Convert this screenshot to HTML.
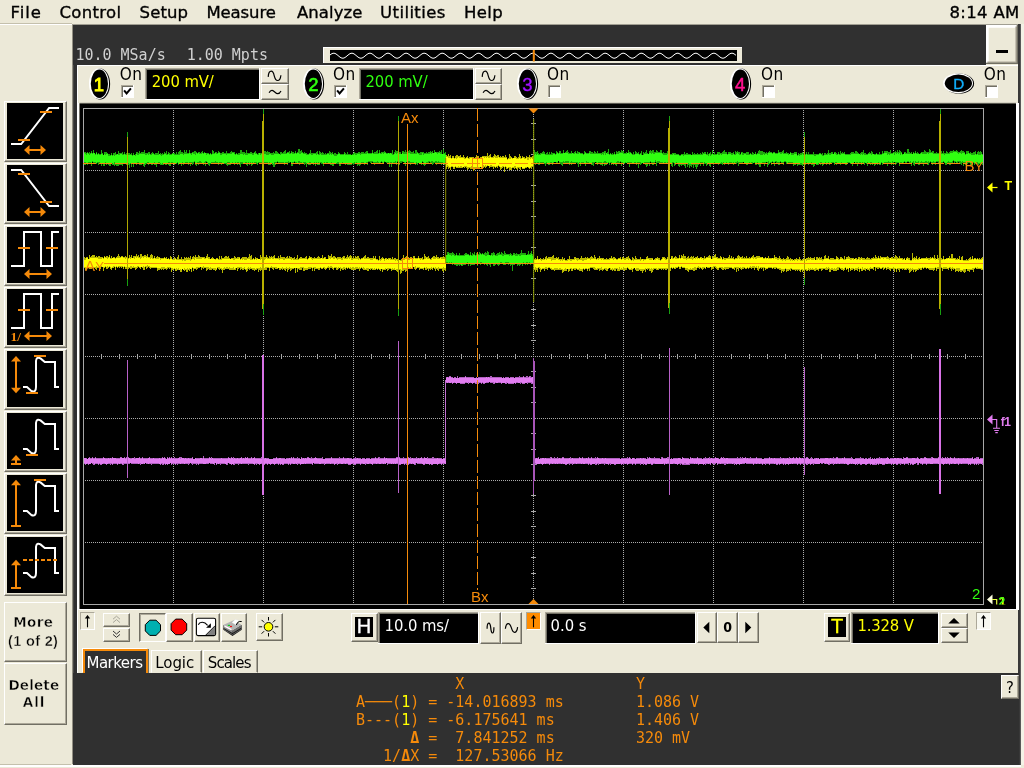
<!DOCTYPE html>
<html><head><meta charset="utf-8"><title>Oscilloscope</title><style>
html,body{margin:0;padding:0;}
body{width:1024px;height:768px;overflow:hidden;background:#ECE9D8;position:relative;font-family:"DejaVu Sans Condensed","Liberation Sans",sans-serif;font-size:16px;color:#000;}
#root{position:absolute;left:0;top:0;width:1024px;height:768px;overflow:hidden;will-change:transform;}
.a{position:absolute;}
.t{position:absolute;white-space:pre;line-height:1;}
.menu{font-family:"DejaVu Sans","Liberation Sans",sans-serif;font-size:16px;}
.mono{font-family:"DejaVu Sans Mono","Liberation Mono",monospace;font-size:15px;}
.btn{position:absolute;box-sizing:border-box;background:#ECE9D8;border:1px solid;border-color:#FFFFFF #716F64 #716F64 #FFFFFF;box-shadow:inset -1px -1px 0 #ACA899;}
.btnp{position:absolute;box-sizing:border-box;background:#ECE9D8;border:1px solid;border-color:#716F64 #FFFFFF #FFFFFF #716F64;box-shadow:inset 1px 1px 0 #ACA899;}
.sunk{position:absolute;box-sizing:border-box;background:#000;border:1px solid;border-color:#ACA899 #FFFFFF #FFFFFF #ACA899;box-shadow:inset 1px 1px 0 #716F64;}
.cb{position:absolute;box-sizing:border-box;width:12px;height:12px;background:#fff;border:1px solid;border-color:#ACA899 #FFFFFF #FFFFFF #ACA899;box-shadow:inset 1px 1px 0 #716F64;}
.on{position:absolute;font-size:16px;line-height:1;white-space:pre;}
svg{position:absolute;overflow:visible;}
</style></head><body>
<div id="root">
<div class="t" style="left:10.60px;top:5.00px;font-family:'DejaVu Sans','Liberation Sans',sans-serif;font-size:16.5px;font-weight:normal;letter-spacing:0.9px;color:#000;-webkit-text-stroke:0.35px #000;">File</div>
<div class="t" style="left:59.40px;top:5.00px;font-family:'DejaVu Sans','Liberation Sans',sans-serif;font-size:16.5px;font-weight:normal;letter-spacing:0.333px;color:#000;-webkit-text-stroke:0.35px #000;">Control</div>
<div class="t" style="left:139.60px;top:5.00px;font-family:'DejaVu Sans','Liberation Sans',sans-serif;font-size:16.5px;font-weight:normal;letter-spacing:0.1px;color:#000;-webkit-text-stroke:0.35px #000;">Setup</div>
<div class="t" style="left:206.40px;top:5.00px;font-family:'DejaVu Sans','Liberation Sans',sans-serif;font-size:16.5px;font-weight:normal;letter-spacing:-0.1px;color:#000;-webkit-text-stroke:0.35px #000;">Measure</div>
<div class="t" style="left:297.00px;top:5.00px;font-family:'DejaVu Sans','Liberation Sans',sans-serif;font-size:16.5px;font-weight:normal;letter-spacing:0.05px;color:#000;-webkit-text-stroke:0.35px #000;">Analyze</div>
<div class="t" style="left:380.10px;top:5.00px;font-family:'DejaVu Sans','Liberation Sans',sans-serif;font-size:16.5px;font-weight:normal;letter-spacing:0.394px;color:#000;-webkit-text-stroke:0.35px #000;">Utilities</div>
<div class="t" style="left:464.10px;top:5.00px;font-family:'DejaVu Sans','Liberation Sans',sans-serif;font-size:16.5px;font-weight:normal;letter-spacing:0.333px;color:#000;-webkit-text-stroke:0.35px #000;">Help</div>
<div class="t" style="left:949.50px;top:5.00px;font-family:'DejaVu Sans','Liberation Sans',sans-serif;font-size:16.5px;font-weight:normal;letter-spacing:0.333px;color:#000;-webkit-text-stroke:0.35px #000;">8:14 AM</div>
<div class="a" style="left:0;top:23px;width:71.5px;height:1px;background:#C4C0AC;"></div>
<div class="a" style="left:0;top:24px;width:71.5px;height:1px;background:#fff;"></div>
<div class="a" style="left:72px;top:23.6px;width:949px;height:1.6px;background:linear-gradient(180deg,#D8D5C4 0,#6a6860 100%);"></div>
<div class="a" style="left:71.5px;top:24.8px;width:948.5px;height:739.7px;background:linear-gradient(90deg,#b8b4a2 0,#303030 1.8px);"></div>
<div class="a" style="left:73px;top:25px;width:912.7px;height:40px;background:#303030;"></div>
<div class="a" style="left:985.7px;top:24.8px;width:32.8px;height:41px;background:#ECE9D8;"></div>
<div class="a" style="left:77px;top:65px;width:941.5px;height:609px;background:#ECE9D8;border-left:1px solid #fff;border-top:1px solid #fff;box-sizing:border-box;"></div>
<div class="a" style="left:1018.4px;top:24px;width:2.5px;height:741px;background:linear-gradient(90deg,#383838 0,#383838 60%,#707070 100%);"></div>
<div class="a" style="left:1020.9px;top:24px;width:3.1px;height:741px;background:#F4F2E6;"></div>
<div class="a" style="left:73px;top:673px;width:945.5px;height:91.5px;background:#303030;"></div>
<div class="a" style="left:0;top:764.5px;width:1024px;height:3.5px;background:#ECE9D8;"></div>
<div class="a" style="left:0;top:764.4px;width:71px;height:0.8px;background:#C4C0AC;"></div>
<div class="a" style="left:0;top:765px;width:1021px;height:2px;background:#fff;"></div>
<div class="a" style="left:986.2px;top:25px;width:32px;height:39px;box-sizing:border-box;background:#ECE9D8;box-shadow:inset -1.3px -1.3px 0 #716F64,inset 1.4px 1.4px 0 #fff,inset -2.6px -2.6px 0 #ACA899,inset 2.7px 2.7px 0 #fff;"></div>
<div class="a" style="left:995.7px;top:49.9px;width:12.6px;height:3.3px;background:#000;"></div>
<div class="t mono" style="left:75.4px;top:47.6px;color:#D0D0D0;">10.0 MSa/s</div>
<div class="t mono" style="left:186.7px;top:47.6px;color:#D0D0D0;">1.00 Mpts</div>
<div class="a" style="left:323px;top:46.5px;width:419px;height:16.5px;background:#ECE9D8;box-shadow:inset 1px 1px 0 #fff;"></div>
<div class="a" style="left:329.5px;top:50px;width:407px;height:11.3px;background:#000;"></div>
<svg style="left:0;top:0;" width="1024" height="70" viewBox="0 0 1024 70"><polyline points="330.0,54.99 331.0,54.22 332.0,53.62 333.0,53.27 334.0,53.21 335.0,53.45 336.0,53.96 337.0,54.67 338.0,55.50 339.0,56.36 340.0,57.14 341.0,57.75 342.0,58.12 343.0,58.19 344.0,57.97 345.0,57.48 346.0,56.77 347.0,55.94 348.0,55.08 349.0,54.29 350.0,53.67 351.0,53.30 352.0,53.21 353.0,53.41 354.0,53.89 355.0,54.59 356.0,55.42 357.0,56.28 358.0,57.07 359.0,57.70 360.0,58.09 361.0,58.20 362.0,58.00 363.0,57.54 364.0,56.85 365.0,56.02 366.0,55.16 367.0,54.36 368.0,53.72 369.0,53.32 370.0,53.20 371.0,53.38 372.0,53.84 373.0,54.51 374.0,55.33 375.0,56.20 376.0,57.00 377.0,57.65 378.0,58.07 379.0,58.20 380.0,58.04 381.0,57.59 382.0,56.92 383.0,56.11 384.0,55.25 385.0,54.44 386.0,53.78 387.0,53.35 388.0,53.20 389.0,53.35 390.0,53.78 391.0,54.44 392.0,55.25 393.0,56.11 394.0,56.92 395.0,57.59 396.0,58.04 397.0,58.20 398.0,58.07 399.0,57.65 400.0,57.00 401.0,56.20 402.0,55.33 403.0,54.51 404.0,53.84 405.0,53.38 406.0,53.20 407.0,53.32 408.0,53.72 409.0,54.36 410.0,55.16 411.0,56.02 412.0,56.85 413.0,57.54 414.0,58.00 415.0,58.20 416.0,58.09 417.0,57.70 418.0,57.07 419.0,56.28 420.0,55.42 421.0,54.59 422.0,53.89 423.0,53.41 424.0,53.21 425.0,53.30 426.0,53.67 427.0,54.29 428.0,55.08 429.0,55.94 430.0,56.77 431.0,57.48 432.0,57.97 433.0,58.19 434.0,58.12 435.0,57.75 436.0,57.14 437.0,56.36 438.0,55.50 439.0,54.67 440.0,53.96 441.0,53.45 442.0,53.21 443.0,53.27 444.0,53.62 445.0,54.22 446.0,54.99 447.0,55.85 448.0,56.69 449.0,57.41 450.0,57.93 451.0,58.18 452.0,58.14 453.0,57.80 454.0,57.21 455.0,56.45 456.0,55.59 457.0,54.75 458.0,54.02 459.0,53.49 460.0,53.22 461.0,53.25 462.0,53.58 463.0,54.15 464.0,54.91 465.0,55.77 466.0,56.61 467.0,57.35 468.0,57.89 469.0,58.17 470.0,58.15 471.0,57.85 472.0,57.28 473.0,56.53 474.0,55.68 475.0,54.83 476.0,54.08 477.0,53.53 478.0,53.24 479.0,53.24 480.0,53.53 481.0,54.08 482.0,54.83 483.0,55.68 484.0,56.53 485.0,57.28 486.0,57.85 487.0,58.15 488.0,58.17 489.0,57.89 490.0,57.35 491.0,56.61 492.0,55.77 493.0,54.91 494.0,54.15 495.0,53.58 496.0,53.25 497.0,53.22 498.0,53.49 499.0,54.02 500.0,54.75 501.0,55.59 502.0,56.45 503.0,57.21 504.0,57.80 505.0,58.14 506.0,58.18 507.0,57.93 508.0,57.41 509.0,56.69 510.0,55.85 511.0,54.99 512.0,54.22 513.0,53.62 514.0,53.27 515.0,53.21 516.0,53.45 517.0,53.96 518.0,54.67 519.0,55.50 520.0,56.36 521.0,57.14 522.0,57.75 523.0,58.12 524.0,58.19 525.0,57.97 526.0,57.48 527.0,56.77 528.0,55.94 529.0,55.08 530.0,54.29 531.0,53.67 532.0,53.30 533.0,53.21 534.0,53.41 535.0,53.89 536.0,54.59 537.0,55.42 538.0,56.28 539.0,57.07 540.0,57.70 541.0,58.09 542.0,58.20 543.0,58.00 544.0,57.54 545.0,56.85 546.0,56.02 547.0,55.16 548.0,54.36 549.0,53.72 550.0,53.32 551.0,53.20 552.0,53.38 553.0,53.84 554.0,54.51 555.0,55.33 556.0,56.20 557.0,57.00 558.0,57.65 559.0,58.07 560.0,58.20 561.0,58.04 562.0,57.59 563.0,56.92 564.0,56.11 565.0,55.25 566.0,54.44 567.0,53.78 568.0,53.35 569.0,53.20 570.0,53.35 571.0,53.78 572.0,54.44 573.0,55.25 574.0,56.11 575.0,56.92 576.0,57.59 577.0,58.04 578.0,58.20 579.0,58.07 580.0,57.65 581.0,57.00 582.0,56.20 583.0,55.33 584.0,54.51 585.0,53.84 586.0,53.38 587.0,53.20 588.0,53.32 589.0,53.72 590.0,54.36 591.0,55.16 592.0,56.02 593.0,56.85 594.0,57.54 595.0,58.00 596.0,58.20 597.0,58.09 598.0,57.70 599.0,57.07 600.0,56.28 601.0,55.42 602.0,54.59 603.0,53.89 604.0,53.41 605.0,53.21 606.0,53.30 607.0,53.67 608.0,54.29 609.0,55.08 610.0,55.94 611.0,56.77 612.0,57.48 613.0,57.97 614.0,58.19 615.0,58.12 616.0,57.75 617.0,57.14 618.0,56.36 619.0,55.50 620.0,54.67 621.0,53.96 622.0,53.45 623.0,53.21 624.0,53.27 625.0,53.62 626.0,54.22 627.0,54.99 628.0,55.85 629.0,56.69 630.0,57.41 631.0,57.93 632.0,58.18 633.0,58.14 634.0,57.80 635.0,57.21 636.0,56.45 637.0,55.59 638.0,54.75 639.0,54.02 640.0,53.49 641.0,53.22 642.0,53.25 643.0,53.58 644.0,54.15 645.0,54.91 646.0,55.77 647.0,56.61 648.0,57.35 649.0,57.89 650.0,58.17 651.0,58.15 652.0,57.85 653.0,57.28 654.0,56.53 655.0,55.68 656.0,54.83 657.0,54.08 658.0,53.53 659.0,53.24 660.0,53.24 661.0,53.53 662.0,54.08 663.0,54.83 664.0,55.68 665.0,56.53 666.0,57.28 667.0,57.85 668.0,58.15 669.0,58.17 670.0,57.89 671.0,57.35 672.0,56.61 673.0,55.77 674.0,54.91 675.0,54.15 676.0,53.58 677.0,53.25 678.0,53.22 679.0,53.49 680.0,54.02 681.0,54.75 682.0,55.59 683.0,56.45 684.0,57.21 685.0,57.80 686.0,58.14 687.0,58.18 688.0,57.93 689.0,57.41 690.0,56.69 691.0,55.85 692.0,54.99 693.0,54.22 694.0,53.62 695.0,53.27 696.0,53.21 697.0,53.45 698.0,53.96 699.0,54.67 700.0,55.50 701.0,56.36 702.0,57.14 703.0,57.75 704.0,58.12 705.0,58.19 706.0,57.97 707.0,57.48 708.0,56.77 709.0,55.94 710.0,55.08 711.0,54.29 712.0,53.67 713.0,53.30 714.0,53.21 715.0,53.41 716.0,53.89 717.0,54.59 718.0,55.42 719.0,56.28 720.0,57.07 721.0,57.70 722.0,58.09 723.0,58.20 724.0,58.00 725.0,57.54 726.0,56.85 727.0,56.02 728.0,55.16 729.0,54.36 730.0,53.72 731.0,53.32 732.0,53.20 733.0,53.38 734.0,53.84 735.0,54.51 736.0,55.33" fill="none" stroke="#fff" stroke-width="1"/><rect x="532.8" y="50" width="2" height="11.5" fill="#F58A0A"/></svg>
<svg style="left:87.0px;top:66.25px;" width="25.0" height="35.5" viewBox="-12.5 -17.75 25.0 35.5"><ellipse cx="0.55" cy="0.25" rx="10.05" ry="15.5" fill="#000"/><ellipse cx="-0.5" cy="-0.1" rx="10.0" ry="15.45" fill="#fff"/><ellipse cx="-0.1" cy="0" rx="8.6" ry="14.15" fill="#000"/><text x="-0.6" y="6.9" text-anchor="middle" font-family="Liberation Sans, sans-serif" font-size="18.5" fill="#FFFF00" stroke="#FFFF00" stroke-width="0.9">1</text></svg>
<svg style="left:301.2px;top:66.25px;" width="25.0" height="35.5" viewBox="-12.5 -17.75 25.0 35.5"><ellipse cx="0.55" cy="0.25" rx="10.05" ry="15.5" fill="#000"/><ellipse cx="-0.5" cy="-0.1" rx="10.0" ry="15.45" fill="#fff"/><ellipse cx="-0.1" cy="0" rx="8.6" ry="14.15" fill="#000"/><text x="-0.2" y="6.9" text-anchor="middle" font-family="Liberation Sans, sans-serif" font-size="18.5" fill="#30FF10" stroke="#30FF10" stroke-width="0.6">2</text></svg>
<svg style="left:515.2px;top:66.25px;" width="25.0" height="35.5" viewBox="-12.5 -17.75 25.0 35.5"><ellipse cx="0.55" cy="0.25" rx="10.05" ry="15.5" fill="#000"/><ellipse cx="-0.5" cy="-0.1" rx="10.0" ry="15.45" fill="#fff"/><ellipse cx="-0.1" cy="0" rx="8.6" ry="14.15" fill="#000"/><text x="-0.2" y="6.9" text-anchor="middle" font-family="Liberation Sans, sans-serif" font-size="18.5" fill="#A010FF" stroke="#A010FF" stroke-width="0.4">3</text></svg>
<svg style="left:728.3px;top:66.25px;" width="25.0" height="35.5" viewBox="-12.5 -17.75 25.0 35.5"><ellipse cx="0.55" cy="0.25" rx="10.05" ry="15.5" fill="#000"/><ellipse cx="-0.5" cy="-0.1" rx="10.0" ry="15.45" fill="#fff"/><ellipse cx="-0.1" cy="0" rx="8.6" ry="14.15" fill="#000"/><text x="-0.4" y="6.9" text-anchor="middle" font-family="Liberation Sans, sans-serif" font-size="18.5" fill="#FF1090" stroke="#FF1090" stroke-width="0.5">4</text></svg>
<svg style="left:940.7px;top:71.3px;" width="35.0" height="24.6" viewBox="-17.5 -12.3 35.0 24.6"><ellipse cx="0.55" cy="0.25" rx="15.05" ry="10.05" fill="#000"/><ellipse cx="-0.5" cy="-0.1" rx="15.0" ry="10.0" fill="#fff"/><ellipse cx="-0.1" cy="0" rx="13.6" ry="8.700000000000001" fill="#000"/><text x="0.3" y="5.5" text-anchor="middle" font-family="Liberation Sans, sans-serif" font-size="15.3" fill="#10B0FF" stroke="#10B0FF" stroke-width="0.35">D</text></svg>
<div class="t" style="left:119.75px;top:65.90px;font-family:'DejaVu Sans Condensed','Liberation Sans',sans-serif;font-size:17px;font-weight:normal;letter-spacing:0.35px;color:#000;">On</div>
<div class="a" style="left:120.95px;top:85px;width:13.0px;height:13.0px;background:#fff;"></div>
<div class="a" style="left:120.95px;top:85px;width:11.8px;height:11.8px;background:#ACA899;"></div>
<div class="a" style="left:121.95px;top:86px;width:10.799999999999999px;height:10.799999999999999px;background:#716F64;"></div>
<div class="a" style="left:122.95px;top:87px;width:9.6px;height:9.6px;background:#fff;"></div>
<svg style="left:120.75px;top:85px;" width="13" height="13" viewBox="0 0 13 13"><path d="M3.1 5.3 L5.6 8.4 L9.9 3.3" fill="none" stroke="#000" stroke-width="2"/></svg>
<div class="t" style="left:333.00px;top:65.90px;font-family:'DejaVu Sans Condensed','Liberation Sans',sans-serif;font-size:17px;font-weight:normal;letter-spacing:0.35px;color:#000;">On</div>
<div class="a" style="left:334.2px;top:85px;width:13.0px;height:13.0px;background:#fff;"></div>
<div class="a" style="left:334.2px;top:85px;width:11.8px;height:11.8px;background:#ACA899;"></div>
<div class="a" style="left:335.2px;top:86px;width:10.799999999999999px;height:10.799999999999999px;background:#716F64;"></div>
<div class="a" style="left:336.2px;top:87px;width:9.6px;height:9.6px;background:#fff;"></div>
<svg style="left:334px;top:85px;" width="13" height="13" viewBox="0 0 13 13"><path d="M3.1 5.3 L5.6 8.4 L9.9 3.3" fill="none" stroke="#000" stroke-width="2"/></svg>
<div class="t" style="left:547.00px;top:65.90px;font-family:'DejaVu Sans Condensed','Liberation Sans',sans-serif;font-size:17px;font-weight:normal;letter-spacing:0.35px;color:#000;">On</div>
<div class="a" style="left:548.2px;top:85px;width:13.0px;height:13.0px;background:#fff;"></div>
<div class="a" style="left:548.2px;top:85px;width:11.8px;height:11.8px;background:#ACA899;"></div>
<div class="a" style="left:549.2px;top:86px;width:10.799999999999999px;height:10.799999999999999px;background:#716F64;"></div>
<div class="a" style="left:550.2px;top:87px;width:9.6px;height:9.6px;background:#fff;"></div>
<div class="t" style="left:761.00px;top:65.90px;font-family:'DejaVu Sans Condensed','Liberation Sans',sans-serif;font-size:17px;font-weight:normal;letter-spacing:0.35px;color:#000;">On</div>
<div class="a" style="left:762.2px;top:85px;width:13.0px;height:13.0px;background:#fff;"></div>
<div class="a" style="left:762.2px;top:85px;width:11.8px;height:11.8px;background:#ACA899;"></div>
<div class="a" style="left:763.2px;top:86px;width:10.799999999999999px;height:10.799999999999999px;background:#716F64;"></div>
<div class="a" style="left:764.2px;top:87px;width:9.6px;height:9.6px;background:#fff;"></div>
<div class="t" style="left:983.80px;top:65.90px;font-family:'DejaVu Sans Condensed','Liberation Sans',sans-serif;font-size:17px;font-weight:normal;letter-spacing:0.35px;color:#000;">On</div>
<div class="a" style="left:985.0px;top:85px;width:13.0px;height:13.0px;background:#fff;"></div>
<div class="a" style="left:985.0px;top:85px;width:11.8px;height:11.8px;background:#ACA899;"></div>
<div class="a" style="left:986.0px;top:86px;width:10.799999999999999px;height:10.799999999999999px;background:#716F64;"></div>
<div class="a" style="left:987.0px;top:87px;width:9.6px;height:9.6px;background:#fff;"></div>
<div class="a" style="left:145px;top:68px;width:115.4px;height:32.2px;background:#fff;"></div>
<div class="a" style="left:145px;top:68px;width:114.2px;height:31.0px;background:#ACA899;"></div>
<div class="a" style="left:146px;top:69px;width:113.2px;height:30.0px;background:#716F64;"></div>
<div class="a" style="left:147px;top:70px;width:112px;height:28.8px;background:#000;"></div>
<div class="t" style="left:151.70px;top:74.10px;font-family:'DejaVu Sans Condensed','Liberation Sans',sans-serif;font-size:16.5px;font-weight:normal;letter-spacing:-0.083px;color:#FFFF00;">200 mV/</div>
<div class="btn" style="left:261.3px;top:68.3px;width:27.3px;height:15.3px;"></div>
<div class="btn" style="left:261.3px;top:84px;width:27.3px;height:15.5px;"></div>
<svg style="left:261.3px;top:68px;" width="28" height="32" viewBox="0 0 28 32"><path d="M7.2 8.9 C7.5 3.5,9.5 3.2,10.3 3.2 C12.3 3.2,12.8 6,13.4 8.4 C14.2 11.5,15.2 12.5,16.6 12.5 C18.6 12.5,19.6 10,19.9 7.2" fill="none" stroke="#000" stroke-width="1.2"/><path d="M8.1 24.7 C9 23,9.8 22.4,10.9 22.4 C12.2 22.4,12.8 23.3,13.75 24 C14.8 24.9,15.5 25.6,16.6 25.6 C18.2 25.6,19.3 24.3,20 22.9" fill="none" stroke="#000" stroke-width="1.2"/></svg>
<div class="a" style="left:358.8px;top:68px;width:115.4px;height:32.2px;background:#fff;"></div>
<div class="a" style="left:358.8px;top:68px;width:114.2px;height:31.0px;background:#ACA899;"></div>
<div class="a" style="left:359.8px;top:69px;width:113.2px;height:30.0px;background:#716F64;"></div>
<div class="a" style="left:360.8px;top:70px;width:112px;height:28.8px;background:#000;"></div>
<div class="t" style="left:365.50px;top:74.10px;font-family:'DejaVu Sans Condensed','Liberation Sans',sans-serif;font-size:16.5px;font-weight:normal;letter-spacing:-0.083px;color:#30FF10;">200 mV/</div>
<div class="btn" style="left:475.1px;top:68.3px;width:27.3px;height:15.3px;"></div>
<div class="btn" style="left:475.1px;top:84px;width:27.3px;height:15.5px;"></div>
<svg style="left:475.1px;top:68px;" width="28" height="32" viewBox="0 0 28 32"><path d="M7.2 8.9 C7.5 3.5,9.5 3.2,10.3 3.2 C12.3 3.2,12.8 6,13.4 8.4 C14.2 11.5,15.2 12.5,16.6 12.5 C18.6 12.5,19.6 10,19.9 7.2" fill="none" stroke="#000" stroke-width="1.2"/><path d="M8.1 24.7 C9 23,9.8 22.4,10.9 22.4 C12.2 22.4,12.8 23.3,13.75 24 C14.8 24.9,15.5 25.6,16.6 25.6 C18.2 25.6,19.3 24.3,20 22.9" fill="none" stroke="#000" stroke-width="1.2"/></svg>
<div class="btn" style="left:4px;top:101px;width:63px;height:61px;"></div>
<svg style="left:7px;top:103px;" width="56" height="56" viewBox="0 0 56 56"><rect width="56" height="56" fill="#000"/><path d="M4 41 H14.2 L42.1 5 H52" fill="none" stroke="#fff" stroke-width="2" stroke-linejoin="miter"/><path d="M33 9 H45 M11 37 H23" stroke="#F58A0A" stroke-width="2" fill="none"/><path d="M21 47 H35" stroke="#F58A0A" stroke-width="2" fill="none"/><path d="M17 47 l5.5 -5 v10 z M39 47 l-5.5 -5 v10 z" fill="#F58A0A"/></svg>
<div class="btn" style="left:4px;top:163px;width:63px;height:61px;"></div>
<svg style="left:7px;top:165px;" width="56" height="56" viewBox="0 0 56 56"><rect width="56" height="56" fill="#000"/><path d="M4 5 H14.2 L42.1 41 H52" fill="none" stroke="#fff" stroke-width="2" stroke-linejoin="miter"/><path d="M11 9 H23 M33 37 H45" stroke="#F58A0A" stroke-width="2" fill="none"/><path d="M21 47 H35" stroke="#F58A0A" stroke-width="2" fill="none"/><path d="M17 47 l5.5 -5 v10 z M39 47 l-5.5 -5 v10 z" fill="#F58A0A"/></svg>
<div class="btn" style="left:4px;top:225px;width:63px;height:61px;"></div>
<svg style="left:7px;top:227px;" width="56" height="56" viewBox="0 0 56 56"><rect width="56" height="56" fill="#000"/><path d="M4 39 H17 V5 H34 V39 H45 V5 H52" fill="none" stroke="#fff" stroke-width="2" stroke-linejoin="miter"/><path d="M11 21 H23 M39 21 H51" stroke="#F58A0A" stroke-width="2" fill="none"/><path d="M21 47 H41" stroke="#F58A0A" stroke-width="2" fill="none"/><path d="M17 47 l5.5 -5 v10 z M45 47 l-5.5 -5 v10 z" fill="#F58A0A"/></svg>
<div class="btn" style="left:4px;top:287px;width:63px;height:61px;"></div>
<svg style="left:7px;top:289px;" width="56" height="56" viewBox="0 0 56 56"><rect width="56" height="56" fill="#000"/><path d="M4 39 H17 V5 H34 V39 H45 V5 H52" fill="none" stroke="#fff" stroke-width="2" stroke-linejoin="miter"/><path d="M11 21 H23 M39 21 H51" stroke="#F58A0A" stroke-width="2" fill="none"/><path d="M21 47 H41" stroke="#F58A0A" stroke-width="2" fill="none"/><path d="M17 47 l5.5 -5 v10 z M45 47 l-5.5 -5 v10 z" fill="#F58A0A"/><text x="3.5" y="52" font-family="Liberation Serif, serif" font-weight="bold" font-size="13.5" fill="#F58A0A">1/</text></svg>
<div class="btn" style="left:4px;top:349px;width:63px;height:61px;"></div>
<svg style="left:7px;top:351px;" width="56" height="56" viewBox="0 0 56 56"><rect width="56" height="56" fill="#000"/><path d="M16 36 H20 L24.3 40 Q29 42 29 36 V10 Q29.5 5.2 33.5 7.4 L37.8 11 H48 V36 H52" fill="none" stroke="#fff" stroke-width="2" stroke-linejoin="miter"/><path d="M27 5 H39 M19 42 H31" stroke="#F58A0A" stroke-width="2" fill="none"/><path d="M9 9 V38.3" stroke="#F58A0A" stroke-width="2" fill="none"/><path d="M9 5 l-5 5.5 h10 z" fill="#F58A0A"/><path d="M9 42.3 l-5 -5.5 h10 z" fill="#F58A0A"/></svg>
<div class="btn" style="left:4px;top:411px;width:63px;height:61px;"></div>
<svg style="left:7px;top:413px;" width="56" height="56" viewBox="0 0 56 56"><rect width="56" height="56" fill="#000"/><path d="M16 36 H20 L24.3 40 Q29 42 29 36 V10 Q29.5 5.2 33.5 7.4 L37.8 11 H48 V36 H52" fill="none" stroke="#fff" stroke-width="2" stroke-linejoin="miter"/><path d="M19 42 H31" stroke="#F58A0A" stroke-width="2" fill="none"/><path d="M9 47 V50 M4 51 H14" stroke="#F58A0A" stroke-width="2" fill="none"/><path d="M9 42 l-5 5.5 h10 z" fill="#F58A0A"/></svg>
<div class="btn" style="left:4px;top:473px;width:63px;height:61px;"></div>
<svg style="left:7px;top:475px;" width="56" height="56" viewBox="0 0 56 56"><rect width="56" height="56" fill="#000"/><path d="M16 36 H20 L24.3 40 Q29 42 29 36 V10 Q29.5 5.2 33.5 7.4 L37.8 11 H48 V36 H52" fill="none" stroke="#fff" stroke-width="2" stroke-linejoin="miter"/><path d="M27 5 H39" stroke="#F58A0A" stroke-width="2" fill="none"/><path d="M9 8.8 V51" stroke="#F58A0A" stroke-width="2" fill="none"/><path d="M9 4.8 l-5 5.5 h10 z" fill="#F58A0A"/><path d="M4 51 H14" stroke="#F58A0A" stroke-width="2" fill="none"/></svg>
<div class="btn" style="left:4px;top:535px;width:63px;height:61px;"></div>
<svg style="left:7px;top:537px;" width="56" height="56" viewBox="0 0 56 56"><rect width="56" height="56" fill="#000"/><path d="M16 36 H20 L24.3 40 Q29 42 29 36 V10 Q29.5 5.2 33.5 7.4 L37.8 11 H48 V36 H52" fill="none" stroke="#fff" stroke-width="2" stroke-linejoin="miter"/><path d="M16 23 H50" stroke="#F58A0A" stroke-width="2" fill="none" stroke-dasharray="4 2"/><path d="M9 26.7 V51" stroke="#F58A0A" stroke-width="2" fill="none"/><path d="M9 22.7 l-5 5.5 h10 z" fill="#F58A0A"/><path d="M4 51 H14" stroke="#F58A0A" stroke-width="2" fill="none"/></svg>
<div class="btn" style="left:4px;top:601.5px;width:62.7px;height:60.3px;"></div>
<div class="btn" style="left:4px;top:663.4px;width:62.7px;height:61.2px;"></div>
<div class="t" style="left:13.20px;top:616.30px;font-family:'DejaVu Sans','Liberation Sans',sans-serif;font-size:13.5px;font-weight:bold;letter-spacing:0.433px;color:#000;-webkit-text-stroke:0.45px #ECE9D8;">More</div>
<div class="t" style="left:8.10px;top:634.10px;font-family:'Liberation Sans',sans-serif;font-size:14.5px;font-weight:bold;letter-spacing:0.329px;color:#000;-webkit-text-stroke:0.4px #ECE9D8;">(1 of 2)</div>
<div class="t" style="left:8.50px;top:678.80px;font-family:'DejaVu Sans','Liberation Sans',sans-serif;font-size:13.5px;font-weight:bold;letter-spacing:0.16px;color:#000;-webkit-text-stroke:0.45px #ECE9D8;">Delete</div>
<div class="t" style="left:22.70px;top:696.10px;font-family:'DejaVu Sans','Liberation Sans',sans-serif;font-size:13.5px;font-weight:bold;letter-spacing:1.05px;color:#000;-webkit-text-stroke:0.45px #ECE9D8;">All</div>
<svg style="left:0;top:0;" width="1024" height="768" viewBox="0 0 1024 768"><defs><clipPath id="cb"><rect x="980" y="590" width="40" height="14.6"/></clipPath></defs><rect x="79.5" y="102.8" width="936.5" height="1" fill="#807e72"/><rect x="79.5" y="103.6" width="936.5" height="505.4" fill="#000"/><path d="M173.5 110 V604" stroke="#ACACAC" stroke-width="1" stroke-dasharray="1 1" shape-rendering="crispEdges"/><path d="M263.5 110 V604" stroke="#ACACAC" stroke-width="1" stroke-dasharray="1 1" shape-rendering="crispEdges"/><path d="M353.5 110 V604" stroke="#ACACAC" stroke-width="1" stroke-dasharray="1 1" shape-rendering="crispEdges"/><path d="M443.5 110 V604" stroke="#ACACAC" stroke-width="1" stroke-dasharray="1 1" shape-rendering="crispEdges"/><path d="M533.5 110 V604" stroke="#ACACAC" stroke-width="1" stroke-dasharray="1 1" shape-rendering="crispEdges"/><path d="M623.5 110 V604" stroke="#ACACAC" stroke-width="1" stroke-dasharray="1 1" shape-rendering="crispEdges"/><path d="M713.5 110 V604" stroke="#ACACAC" stroke-width="1" stroke-dasharray="1 1" shape-rendering="crispEdges"/><path d="M803.5 110 V604" stroke="#ACACAC" stroke-width="1" stroke-dasharray="1 1" shape-rendering="crispEdges"/><path d="M893.5 110 V604" stroke="#ACACAC" stroke-width="1" stroke-dasharray="1 1" shape-rendering="crispEdges"/><path d="M85 170.5 H983" stroke="#ACACAC" stroke-width="1" stroke-dasharray="1 1" shape-rendering="crispEdges"/><path d="M85 232.5 H983" stroke="#ACACAC" stroke-width="1" stroke-dasharray="1 1" shape-rendering="crispEdges"/><path d="M85 294.5 H983" stroke="#ACACAC" stroke-width="1" stroke-dasharray="1 1" shape-rendering="crispEdges"/><path d="M85 356.5 H983" stroke="#ACACAC" stroke-width="1" stroke-dasharray="1 1" shape-rendering="crispEdges"/><path d="M85 418.5 H983" stroke="#ACACAC" stroke-width="1" stroke-dasharray="1 1" shape-rendering="crispEdges"/><path d="M85 480.5 H983" stroke="#ACACAC" stroke-width="1" stroke-dasharray="1 1" shape-rendering="crispEdges"/><path d="M85 542.5 H983" stroke="#ACACAC" stroke-width="1" stroke-dasharray="1 1" shape-rendering="crispEdges"/><path d="M101.5 354 V359 M119.5 354 V359 M137.5 354 V359 M155.5 354 V359 M191.5 354 V359 M209.5 354 V359 M227.5 354 V359 M245.5 354 V359 M281.5 354 V359 M299.5 354 V359 M317.5 354 V359 M335.5 354 V359 M371.5 354 V359 M389.5 354 V359 M407.5 354 V359 M425.5 354 V359 M461.5 354 V359 M479.5 354 V359 M497.5 354 V359 M515.5 354 V359 M551.5 354 V359 M569.5 354 V359 M587.5 354 V359 M605.5 354 V359 M641.5 354 V359 M659.5 354 V359 M677.5 354 V359 M695.5 354 V359 M731.5 354 V359 M749.5 354 V359 M767.5 354 V359 M785.5 354 V359 M821.5 354 V359 M839.5 354 V359 M857.5 354 V359 M875.5 354 V359 M911.5 354 V359 M929.5 354 V359 M947.5 354 V359 M965.5 354 V359 M531 123.5 H536 M531 139.5 H536 M531 154.5 H536 M531 185.5 H536 M531 201.5 H536 M531 216.5 H536 M531 247.5 H536 M531 263.5 H536 M531 278.5 H536 M531 309.5 H536 M531 325.5 H536 M531 340.5 H536 M531 371.5 H536 M531 387.5 H536 M531 402.5 H536 M531 433.5 H536 M531 449.5 H536 M531 464.5 H536 M531 495.5 H536 M531 511.5 H536 M531 526.5 H536 M531 557.5 H536 M531 573.5 H536 M531 588.5 H536" stroke="#A8A8A8" stroke-width="1" shape-rendering="crispEdges"/><rect x="83.5" y="108.5" width="900" height="496" fill="none" stroke="#A8A8A8" stroke-width="1" shape-rendering="crispEdges"/><path d="M84 152.1H85V151.9H86V153.3H87V151.5H88V153.2H89V151.5H90V153.0H91V151.3H92V152.6H93V149.7H94V152.7H95V153.7H96V152.0H97V153.9H98V153.2H99V153.9H100V153.8H101V149.8H102V152.6H103V154.7H104V152.1H105V151.8H106V152.4H107V153.0H108V154.2H109V153.8H110V154.5H111V153.0H112V155.0H113V152.5H114V153.0H115V151.9H116V154.0H117V153.5H118V151.1H119V152.7H120V152.5H121V152.9H122V151.8H123V153.5H124V151.9H125V153.9H126V152.9H127V153.6H128V153.3H129V153.2H130V153.6H131V153.3H132V155.3H133V153.4H134V154.7H135V153.9H136V152.1H137V152.3H138V153.3H139V151.3H140V152.7H141V152.3H142V151.6H143V152.1H144V150.1H145V153.3H146V153.2H147V153.3H148V152.0H149V151.6H150V154.1H151V152.9H152V152.1H153V152.8H154V153.6H155V152.5H156V153.4H157V153.0H158V150.9H159V153.5H160V152.9H161V153.7H162V153.3H163V153.8H164V152.2H165V152.6H166V151.0H167V154.1H168V152.0H169V153.3H170V153.9H171V154.2H172V153.1H173V152.7H174V153.0H175V154.3H176V151.9H177V154.2H178V152.3H179V151.1H180V150.2H181V152.3H182V151.9H183V153.3H184V150.0H185V151.5H186V150.4H187V152.8H188V153.2H189V150.3H190V152.6H191V153.1H192V152.4H193V152.4H194V151.2H195V151.3H196V152.2H197V152.6H198V152.2H199V151.7H200V152.6H201V151.9H202V150.7H203V153.3H204V151.9H205V152.6H206V152.5H207V152.9H208V152.6H209V154.4H210V153.3H211V153.5H212V149.9H213V150.5H214V152.8H215V152.1H216V152.2H217V153.1H218V150.7H219V152.1H220V152.7H221V153.3H222V151.5H223V151.7H224V152.6H225V153.1H226V151.0H227V153.3H228V153.4H229V153.1H230V152.4H231V150.7H232V152.2H233V152.1H234V152.0H235V153.7H236V152.8H237V153.8H238V153.3H239V153.3H240V149.9H241V150.0H242V152.1H243V152.3H244V151.6H245V153.0H246V150.2H247V153.0H248V153.1H249V152.5H250V151.8H251V152.2H252V153.1H253V152.8H254V151.8H255V151.4H256V153.2H257V153.6H258V152.5H259V152.5H260V153.3H261V152.5H262V153.2H263V150.5H264V150.7H265V150.8H266V152.2H267V151.4H268V152.3H269V152.2H270V153.3H271V153.1H272V153.1H273V152.4H274V153.2H275V150.8H276V150.5H277V152.2H278V153.2H279V153.5H280V152.4H281V152.1H282V152.8H283V151.7H284V150.8H285V150.1H286V152.6H287V152.3H288V151.5H289V150.9H290V153.1H291V151.0H292V151.9H293V151.9H294V153.1H295V151.1H296V153.3H297V151.5H298V149.1H299V149.2H300V151.4H301V150.2H302V152.0H303V153.3H304V152.0H305V152.8H306V153.1H307V153.8H308V153.6H309V153.3H310V150.4H311V153.4H312V153.3H313V152.8H314V153.0H315V153.1H316V152.2H317V150.6H318V153.6H319V151.0H320V152.2H321V152.9H322V152.2H323V152.9H324V153.5H325V153.1H326V153.5H327V153.1H328V152.7H329V150.7H330V152.3H331V152.6H332V152.1H333V154.4H334V153.2H335V152.7H336V154.1H337V154.3H338V151.5H339V153.2H340V154.2H341V154.0H342V154.1H343V153.5H344V152.4H345V153.1H346V153.6H347V152.2H348V153.8H349V153.5H350V154.0H351V154.5H352V153.6H353V153.3H354V151.9H355V153.1H356V153.3H357V153.2H358V152.2H359V152.0H360V153.4H361V151.9H362V151.6H363V151.6H364V153.0H365V152.1H366V150.9H367V151.1H368V152.8H369V152.5H370V153.1H371V153.1H372V149.8H373V152.7H374V152.2H375V152.3H376V151.3H377V150.4H378V152.8H379V150.1H380V153.2H381V151.7H382V151.7H383V151.6H384V151.0H385V151.9H386V153.0H387V152.9H388V152.6H389V152.5H390V152.6H391V152.5H392V150.1H393V153.9H394V151.7H395V150.0H396V151.2H397V151.0H398V151.4H399V151.7H400V151.5H401V153.5H402V150.7H403V151.4H404V152.1H405V150.1H406V151.6H407V151.9H408V150.9H409V150.2H410V151.3H411V152.3H412V152.4H413V151.4H414V153.1H415V150.3H416V150.4H417V152.2H418V153.0H419V153.3H420V152.3H421V152.3H422V151.6H423V152.0H424V152.9H425V153.1H426V152.0H427V152.7H428V152.1H429V151.5H430V151.3H431V151.7H432V151.2H433V152.5H434V149.7H435V151.6H436V152.3H437V152.4H438V151.5H439V150.6H440V151.8H441V150.1H442V153.5H443V149.3H444V153.4H445V152.0H445.5V163.8V163.8H445V165.2H444V164.0H443V164.2H442V164.8H441V164.0H440V163.6H439V162.7H438V163.2H437V164.9H436V163.5H435V163.0H434V164.1H433V165.4H432V163.6H431V162.6H430V162.4H429V162.5H428V163.3H427V163.1H426V165.2H425V165.7H424V164.5H423V162.4H422V165.4H421V163.7H420V164.1H419V163.2H418V165.0H417V163.8H416V165.1H415V163.6H414V163.7H413V163.1H412V164.0H411V164.7H410V163.9H409V162.7H408V162.8H407V162.3H406V166.0H405V163.8H404V162.4H403V162.4H402V163.0H401V163.1H400V164.6H399V162.8H398V162.4H397V164.6H396V162.5H395V163.8H394V162.9H393V163.8H392V166.5H391V164.2H390V166.5H389V163.2H388V163.4H387V163.0H386V162.4H385V162.4H384V163.2H383V163.2H382V162.3H381V163.6H380V163.9H379V163.5H378V163.6H377V162.9H376V164.3H375V164.6H374V163.7H373V161.7H372V163.8H371V163.1H370V162.3H369V161.8H368V164.6H367V163.7H366V163.6H365V165.3H364V162.7H363V162.9H362V163.8H361V164.9H360V165.5H359V165.3H358V165.6H357V164.3H356V164.0H355V163.8H354V165.1H353V163.8H352V164.6H351V165.0H350V165.4H349V164.7H348V164.8H347V163.3H346V164.5H345V164.1H344V163.4H343V163.2H342V164.0H341V166.0H340V165.6H339V163.5H338V164.1H337V163.9H336V164.0H335V163.8H334V165.6H333V165.9H332V164.8H331V165.1H330V164.1H329V164.0H328V162.7H327V163.1H326V163.7H325V163.3H324V165.7H323V164.0H322V164.0H321V163.2H320V165.0H319V164.5H318V164.6H317V163.5H316V166.0H315V163.4H314V165.1H313V163.8H312V164.2H311V165.3H310V164.9H309V164.8H308V163.6H307V167.1H306V164.3H305V164.6H304V163.2H303V163.7H302V164.0H301V163.6H300V165.2H299V162.7H298V163.4H297V163.4H296V163.5H295V162.0H294V163.8H293V165.6H292V165.9H291V162.2H290V163.1H289V162.8H288V164.9H287V162.9H286V163.6H285V165.0H284V164.2H283V164.2H282V163.0H281V163.5H280V163.1H279V164.0H278V162.0H277V163.2H276V164.9H275V166.8H274V166.6H273V165.0H272V163.7H271V164.8H270V164.8H269V165.0H268V162.8H267V163.6H266V163.3H265V162.7H264V162.7H263V162.5H262V164.1H261V163.2H260V164.1H259V162.6H258V164.5H257V163.8H256V162.9H255V164.3H254V164.4H253V165.2H252V165.7H251V163.2H250V164.5H249V164.4H248V166.0H247V164.5H246V164.4H245V163.9H244V163.3H243V163.7H242V163.6H241V166.6H240V164.8H239V163.7H238V164.9H237V164.2H236V163.8H235V164.5H234V163.8H233V163.0H232V163.8H231V165.0H230V165.3H229V164.9H228V165.5H227V164.8H226V163.8H225V163.6H224V163.4H223V164.4H222V164.8H221V163.7H220V163.6H219V164.7H218V163.6H217V163.0H216V163.9H215V163.0H214V164.0H213V163.0H212V164.3H211V163.8H210V166.1H209V164.7H208V162.5H207V162.3H206V166.2H205V164.4H204V165.2H203V163.4H202V163.0H201V164.0H200V163.0H199V165.2H198V163.1H197V166.4H196V165.2H195V161.9H194V164.0H193V164.7H192V164.3H191V166.4H190V162.7H189V165.0H188V162.8H187V164.1H186V162.9H185V164.2H184V164.7H183V163.4H182V166.2H181V164.4H180V163.7H179V165.3H178V162.9H177V163.7H176V163.9H175V164.9H174V164.2H173V162.9H172V163.0H171V166.1H170V166.0H169V164.5H168V164.1H167V164.5H166V164.6H165V164.4H164V165.4H163V164.7H162V165.4H161V164.6H160V163.3H159V163.8H158V164.3H157V166.6H156V164.5H155V164.6H154V164.2H153V164.8H152V165.2H151V163.8H150V164.0H149V165.1H148V163.7H147V164.2H146V165.0H145V166.8H144V165.7H143V164.0H142V165.2H141V164.6H140V165.1H139V163.6H138V163.0H137V164.6H136V164.3H135V163.9H134V166.7H133V163.7H132V166.7H131V163.8H130V168.1H129V164.7H128V166.8H127V165.1H126V164.3H125V163.8H124V163.5H123V165.8H122V165.2H121V165.1H120V165.1H119V166.3H118V166.4H117V165.8H116V164.7H115V166.4H114V164.7H113V164.6H112V163.9H111V165.9H110V166.3H109V164.5H108V164.0H107V165.0H106V164.1H105V166.1H104V165.7H103V163.4H102V166.4H101V164.2H100V164.0H99V164.5H98V163.1H97V164.0H96V164.0H95V164.1H94V163.0H93V162.1H92V165.5H91V164.0H90V163.9H89V162.5H88V165.2H87V163.4H86V164.6H85V164.6H84Z" fill="#1FA80C" shape-rendering="crispEdges"/><path d="M84 153.2H85V154.4H86V154.7H87V153.3H88V154.0H89V154.9H90V153.9H91V153.2H92V154.2H93V153.2H94V153.3H95V154.5H96V153.4H97V154.8H98V154.4H99V154.8H100V154.9H101V154.2H102V154.4H103V155.4H104V153.9H105V154.8H106V154.0H107V154.3H108V155.7H109V155.5H110V155.6H111V154.9H112V155.8H113V155.4H114V155.5H115V154.7H116V154.9H117V154.3H118V155.0H119V154.6H120V154.2H121V153.7H122V154.5H123V155.3H124V154.3H125V154.8H126V154.8H127V155.4H128V154.9H129V154.7H130V155.2H131V155.1H132V156.0H133V155.0H134V155.4H135V155.6H136V154.3H137V154.7H138V154.9H139V154.1H140V153.7H141V154.3H142V154.1H143V154.3H144V154.0H145V154.8H146V154.7H147V154.2H148V155.0H149V153.9H150V154.9H151V154.6H152V154.2H153V154.3H154V154.6H155V154.8H156V154.5H157V154.8H158V154.6H159V154.2H160V154.6H161V155.6H162V154.9H163V155.0H164V154.3H165V154.3H166V154.9H167V154.7H168V154.0H169V155.3H170V154.7H171V155.1H172V154.3H173V154.0H174V155.0H175V155.1H176V155.4H177V155.1H178V154.6H179V154.6H180V154.3H181V153.8H182V154.1H183V155.3H184V154.4H185V154.3H186V153.5H187V154.3H188V154.3H189V153.2H190V153.8H191V154.6H192V153.3H193V154.2H194V154.2H195V154.5H196V153.3H197V154.3H198V153.4H199V153.5H200V153.7H201V153.9H202V153.2H203V154.4H204V153.4H205V153.2H206V154.7H207V154.1H208V154.4H209V155.1H210V154.3H211V154.7H212V154.4H213V153.8H214V153.7H215V153.2H216V153.5H217V154.2H218V153.3H219V153.3H220V154.6H221V154.6H222V154.0H223V154.2H224V153.8H225V154.3H226V154.9H227V154.4H228V154.3H229V154.1H230V153.8H231V153.5H232V153.2H233V153.4H234V154.2H235V154.5H236V154.0H237V154.7H238V154.5H239V154.7H240V153.7H241V154.2H242V154.2H243V154.7H244V154.3H245V154.9H246V154.5H247V155.2H248V154.3H249V153.9H250V154.0H251V154.4H252V155.0H253V154.6H254V153.3H255V153.6H256V154.1H257V154.6H258V154.5H259V153.3H260V154.6H261V154.2H262V154.4H263V153.3H264V154.2H265V154.2H266V154.6H267V154.8H268V154.8H269V154.4H270V154.1H271V154.7H272V154.8H273V155.3H274V154.3H275V153.5H276V154.3H277V153.7H278V154.1H279V154.2H280V154.6H281V154.0H282V153.8H283V154.0H284V154.0H285V153.8H286V153.5H287V153.2H288V153.4H289V153.8H290V153.9H291V153.1H292V153.8H293V153.9H294V153.7H295V152.9H296V154.2H297V153.1H298V153.1H299V153.5H300V154.1H301V153.4H302V153.4H303V154.2H304V153.6H305V153.5H306V154.8H307V154.8H308V154.9H309V154.2H310V154.0H311V155.0H312V154.7H313V154.2H314V153.9H315V154.3H316V154.6H317V154.1H318V155.0H319V154.7H320V153.6H321V154.9H322V154.8H323V154.9H324V154.8H325V154.5H326V154.8H327V154.2H328V154.4H329V154.8H330V154.0H331V154.5H332V154.3H333V155.3H334V155.6H335V155.6H336V155.5H337V155.4H338V154.3H339V154.0H340V154.9H341V155.1H342V155.4H343V154.9H344V154.2H345V155.0H346V155.0H347V155.4H348V154.6H349V154.9H350V155.1H351V155.3H352V155.3H353V155.1H354V154.4H355V155.4H356V154.8H357V153.9H358V154.4H359V154.1H360V154.9H361V153.8H362V153.6H363V154.2H364V154.3H365V154.1H366V154.2H367V152.9H368V153.6H369V153.5H370V153.8H371V154.0H372V153.1H373V153.5H374V154.2H375V153.5H376V154.4H377V154.2H378V153.6H379V153.1H380V154.1H381V154.1H382V153.3H383V153.8H384V153.4H385V153.3H386V153.9H387V154.3H388V153.4H389V154.1H390V153.4H391V153.7H392V154.5H393V155.0H394V154.3H395V153.4H396V154.3H397V153.1H398V153.2H399V153.9H400V153.8H401V154.1H402V153.3H403V153.9H404V153.5H405V154.3H406V153.9H407V153.8H408V152.8H409V153.2H410V153.7H411V153.7H412V153.7H413V153.7H414V154.1H415V153.5H416V154.3H417V153.4H418V153.6H419V154.6H420V155.1H421V154.6H422V153.3H423V154.5H424V154.1H425V154.3H426V154.4H427V154.2H428V154.2H429V154.1H430V152.7H431V153.6H432V153.1H433V153.3H434V153.4H435V152.3H436V153.0H437V153.5H438V152.6H439V152.8H440V154.4H441V153.8H442V154.4H443V154.1H444V154.1H445V154.5H445.5V161.9V161.9H445V162.9H444V162.6H443V162.3H442V161.9H441V161.7H440V162.0H439V160.9H438V161.6H437V160.7H436V160.8H435V161.7H434V161.5H433V161.0H432V161.3H431V161.9H430V161.0H429V161.3H428V161.8H427V162.3H426V162.5H425V162.6H424V161.7H423V161.3H422V162.7H421V162.6H420V162.7H419V162.6H418V162.6H417V162.0H416V162.7H415V162.9H414V161.9H413V162.1H412V162.0H411V161.9H410V161.1H409V161.1H408V161.8H407V161.5H406V162.5H405V162.3H404V161.6H403V161.1H402V161.4H401V161.3H400V161.6H399V161.2H398V161.3H397V162.7H396V161.4H395V162.2H394V161.9H393V163.0H392V162.2H391V161.8H390V162.9H389V161.8H388V161.9H387V161.5H386V161.7H385V161.4H384V162.5H383V162.3H382V161.2H381V162.2H380V162.6H379V161.8H378V161.1H377V161.8H376V161.6H375V162.4H374V161.9H373V161.1H372V161.4H371V160.6H370V160.9H369V161.1H368V162.2H367V162.3H366V162.8H365V162.6H364V162.1H363V161.9H362V161.8H361V163.1H360V163.3H359V163.4H358V162.7H357V162.3H356V162.7H355V162.1H354V162.8H353V163.1H352V163.1H351V162.9H350V163.9H349V163.6H348V163.0H347V162.6H346V163.0H345V162.9H344V162.6H343V162.3H342V163.4H341V162.6H340V162.6H339V162.4H338V162.4H337V162.8H336V163.3H335V162.8H334V163.6H333V162.9H332V162.2H331V163.0H330V162.6H329V163.2H328V161.9H327V161.8H326V163.0H325V162.2H324V162.7H323V162.8H322V162.1H321V161.8H320V162.9H319V162.4H318V162.6H317V162.4H316V162.7H315V161.9H314V162.8H313V162.8H312V163.6H311V162.2H310V162.3H309V163.1H308V162.9H307V162.7H306V162.4H305V162.4H304V161.6H303V162.5H302V161.5H301V162.3H300V161.1H299V161.3H298V162.6H297V162.2H296V162.1H295V161.2H294V161.8H293V161.9H292V162.6H291V161.6H290V161.7H289V161.0H288V162.2H287V162.1H286V161.6H285V162.8H284V161.9H283V161.6H282V161.8H281V162.0H280V162.2H279V162.1H278V161.3H277V162.1H276V162.2H275V162.1H274V163.5H273V163.3H272V162.5H271V163.0H270V162.2H269V162.8H268V162.1H267V161.7H266V162.4H265V161.8H264V161.9H263V161.4H262V161.7H261V161.5H260V162.2H259V161.8H258V162.6H257V162.2H256V161.6H255V162.2H254V162.8H253V162.2H252V162.6H251V162.1H250V162.8H249V162.1H248V163.0H247V162.3H246V162.4H245V162.8H244V162.6H243V162.4H242V161.9H241V162.2H240V162.6H239V161.8H238V161.9H237V162.9H236V162.3H235V162.6H234V162.6H233V161.6H232V162.7H231V162.7H230V162.3H229V162.0H228V162.3H227V162.6H226V162.9H225V162.8H224V162.5H223V162.7H222V162.3H221V162.1H220V161.6H219V162.7H218V162.4H217V162.2H216V161.1H215V161.8H214V161.5H213V162.3H212V162.3H211V163.0H210V162.5H209V162.8H208V161.7H207V161.4H206V161.2H205V161.9H204V162.5H203V162.7H202V161.6H201V161.3H200V161.2H199V161.8H198V162.3H197V162.8H196V162.5H195V161.3H194V161.8H193V162.0H192V162.1H191V162.4H190V162.1H189V162.6H188V161.9H187V161.6H186V162.3H185V162.5H184V162.5H183V161.9H182V163.1H181V163.2H180V162.8H179V163.6H178V162.2H177V163.0H176V163.1H175V163.5H174V163.3H173V161.9H172V162.1H171V163.2H170V162.3H169V162.0H168V162.8H167V163.3H166V163.2H165V163.1H164V162.7H163V163.0H162V163.5H161V162.7H160V162.4H159V162.4H158V162.5H157V162.5H156V163.2H155V162.1H154V163.2H153V163.4H152V162.9H151V162.6H150V162.8H149V162.0H148V162.1H147V163.2H146V163.3H145V163.5H144V163.2H143V162.8H142V163.2H141V162.8H140V162.8H139V162.4H138V162.2H137V163.6H136V162.5H135V162.7H134V163.5H133V162.8H132V163.3H131V162.9H130V163.8H129V162.9H128V163.0H127V163.4H126V162.8H125V163.2H124V162.8H123V163.0H122V163.1H121V162.6H120V163.0H119V163.2H118V163.4H117V163.4H116V163.8H115V162.4H114V163.9H113V163.2H112V163.1H111V164.3H110V163.5H109V163.7H108V163.1H107V163.1H106V161.9H105V162.7H104V163.0H103V162.6H102V163.1H101V163.3H100V162.2H99V162.4H98V161.6H97V162.5H96V162.2H95V161.9H94V161.6H93V161.4H92V162.8H91V162.2H90V162.2H89V161.5H88V162.8H87V162.6H86V162.0H85V161.9H84Z" fill="#30FF10" shape-rendering="crispEdges"/><path d="M533.5 149.5H534.5V152.4H535.5V152.1H536.5V150.7H537.5V153.2H538.5V153.6H539.5V152.9H540.5V152.9H541.5V152.0H542.5V151.3H543.5V151.7H544.5V153.7H545.5V152.7H546.5V152.4H547.5V154.3H548.5V152.3H549.5V154.0H550.5V152.4H551.5V153.4H552.5V153.4H553.5V152.5H554.5V153.8H555.5V150.8H556.5V152.1H557.5V153.0H558.5V151.4H559.5V151.2H560.5V152.5H561.5V152.9H562.5V150.4H563.5V152.6H564.5V151.5H565.5V151.1H566.5V150.2H567.5V151.6H568.5V152.8H569.5V152.7H570.5V151.4H571.5V152.7H572.5V153.0H573.5V151.7H574.5V151.2H575.5V153.0H576.5V151.1H577.5V152.0H578.5V151.6H579.5V152.9H580.5V152.9H581.5V152.6H582.5V153.5H583.5V151.0H584.5V152.0H585.5V152.6H586.5V152.5H587.5V152.5H588.5V151.3H589.5V151.1H590.5V152.0H591.5V151.7H592.5V152.6H593.5V151.0H594.5V152.1H595.5V152.9H596.5V151.2H597.5V153.4H598.5V153.0H599.5V153.4H600.5V152.7H601.5V151.7H602.5V152.2H603.5V151.2H604.5V151.3H605.5V152.8H606.5V152.3H607.5V148.9H608.5V154.2H609.5V153.0H610.5V154.4H611.5V152.9H612.5V154.1H613.5V152.4H614.5V154.4H615.5V150.9H616.5V152.3H617.5V150.5H618.5V150.8H619.5V151.5H620.5V150.4H621.5V150.7H622.5V151.4H623.5V153.3H624.5V153.4H625.5V152.4H626.5V152.7H627.5V150.3H628.5V152.3H629.5V152.2H630.5V152.9H631.5V154.1H632.5V152.0H633.5V154.2H634.5V151.4H635.5V151.7H636.5V152.9H637.5V152.4H638.5V154.2H639.5V152.8H640.5V150.8H641.5V154.5H642.5V152.4H643.5V152.8H644.5V152.0H645.5V150.4H646.5V152.8H647.5V153.8H648.5V151.2H649.5V149.8H650.5V151.4H651.5V150.2H652.5V149.8H653.5V152.3H654.5V152.0H655.5V150.2H656.5V151.1H657.5V152.0H658.5V151.6H659.5V150.2H660.5V150.4H661.5V153.1H662.5V152.4H663.5V152.7H664.5V153.1H665.5V153.4H666.5V151.3H667.5V152.0H668.5V153.0H669.5V154.0H670.5V153.7H671.5V152.6H672.5V152.5H673.5V153.1H674.5V153.1H675.5V154.1H676.5V154.1H677.5V153.7H678.5V155.0H679.5V154.8H680.5V153.6H681.5V154.2H682.5V153.8H683.5V151.5H684.5V153.7H685.5V152.6H686.5V153.3H687.5V154.3H688.5V153.7H689.5V153.6H690.5V154.6H691.5V152.3H692.5V153.8H693.5V152.6H694.5V153.6H695.5V154.1H696.5V152.7H697.5V153.6H698.5V154.3H699.5V152.9H700.5V153.5H701.5V151.6H702.5V152.6H703.5V151.7H704.5V151.7H705.5V154.1H706.5V151.8H707.5V153.7H708.5V153.4H709.5V152.4H710.5V153.9H711.5V150.2H712.5V154.1H713.5V151.9H714.5V154.2H715.5V154.0H716.5V152.2H717.5V152.4H718.5V152.4H719.5V152.9H720.5V153.4H721.5V152.1H722.5V151.4H723.5V150.0H724.5V151.9H725.5V151.9H726.5V154.1H727.5V152.2H728.5V152.0H729.5V151.7H730.5V153.4H731.5V152.7H732.5V152.4H733.5V153.8H734.5V150.5H735.5V152.0H736.5V151.3H737.5V152.1H738.5V151.9H739.5V153.6H740.5V151.6H741.5V152.2H742.5V152.7H743.5V152.5H744.5V152.6H745.5V152.1H746.5V152.0H747.5V152.0H748.5V153.5H749.5V153.2H750.5V154.2H751.5V152.3H752.5V152.9H753.5V153.6H754.5V151.7H755.5V153.8H756.5V153.2H757.5V151.0H758.5V150.4H759.5V151.3H760.5V150.9H761.5V150.9H762.5V152.3H763.5V152.0H764.5V153.0H765.5V152.2H766.5V153.1H767.5V152.3H768.5V151.4H769.5V151.9H770.5V151.9H771.5V152.8H772.5V151.9H773.5V152.2H774.5V153.0H775.5V153.2H776.5V152.5H777.5V150.1H778.5V151.9H779.5V152.1H780.5V152.2H781.5V150.6H782.5V150.3H783.5V152.7H784.5V152.7H785.5V151.6H786.5V153.3H787.5V152.8H788.5V153.5H789.5V152.2H790.5V153.1H791.5V152.6H792.5V153.4H793.5V151.8H794.5V152.0H795.5V152.3H796.5V154.9H797.5V152.8H798.5V154.2H799.5V153.3H800.5V153.0H801.5V151.5H802.5V153.0H803.5V152.4H804.5V153.9H805.5V151.7H806.5V154.1H807.5V151.8H808.5V153.5H809.5V153.5H810.5V154.2H811.5V154.1H812.5V152.4H813.5V153.6H814.5V154.4H815.5V154.1H816.5V154.0H817.5V153.8H818.5V152.7H819.5V153.0H820.5V153.7H821.5V152.6H822.5V154.8H823.5V152.8H824.5V153.3H825.5V154.2H826.5V153.2H827.5V150.2H828.5V152.7H829.5V153.2H830.5V152.1H831.5V152.2H832.5V153.6H833.5V151.9H834.5V152.3H835.5V152.7H836.5V153.8H837.5V152.0H838.5V153.8H839.5V150.6H840.5V153.0H841.5V151.7H842.5V152.5H843.5V151.9H844.5V153.8H845.5V154.0H846.5V153.9H847.5V154.2H848.5V154.4H849.5V153.3H850.5V152.3H851.5V151.9H852.5V151.6H853.5V152.5H854.5V151.3H855.5V150.6H856.5V152.0H857.5V152.9H858.5V153.7H859.5V153.4H860.5V151.8H861.5V151.8H862.5V150.4H863.5V152.8H864.5V152.5H865.5V154.4H866.5V153.6H867.5V152.5H868.5V152.1H869.5V153.3H870.5V150.6H871.5V152.3H872.5V153.5H873.5V153.5H874.5V153.5H875.5V153.2H876.5V153.6H877.5V154.0H878.5V152.2H879.5V153.9H880.5V154.2H881.5V150.6H882.5V152.7H883.5V151.2H884.5V150.7H885.5V150.6H886.5V151.2H887.5V152.2H888.5V151.6H889.5V150.0H890.5V153.1H891.5V152.8H892.5V152.1H893.5V152.3H894.5V151.3H895.5V152.0H896.5V150.1H897.5V152.2H898.5V150.0H899.5V151.0H900.5V152.3H901.5V154.4H902.5V153.5H903.5V152.2H904.5V151.6H905.5V152.7H906.5V149.2H907.5V148.5H908.5V151.7H909.5V152.6H910.5V152.3H911.5V153.7H912.5V151.7H913.5V152.5H914.5V150.5H915.5V153.3H916.5V151.5H917.5V152.5H918.5V153.7H919.5V153.2H920.5V152.0H921.5V151.5H922.5V151.6H923.5V150.1H924.5V150.8H925.5V151.9H926.5V151.5H927.5V152.3H928.5V149.2H929.5V150.2H930.5V151.6H931.5V150.8H932.5V150.8H933.5V152.9H934.5V152.6H935.5V151.9H936.5V152.6H937.5V152.7H938.5V151.6H939.5V151.1H940.5V151.3H941.5V152.6H942.5V150.8H943.5V153.3H944.5V152.5H945.5V151.3H946.5V152.2H947.5V152.5H948.5V151.9H949.5V150.8H950.5V150.8H951.5V151.0H952.5V150.4H953.5V150.6H954.5V150.5H955.5V150.3H956.5V151.3H957.5V152.4H958.5V151.5H959.5V151.3H960.5V149.6H961.5V151.0H962.5V151.0H963.5V152.3H964.5V153.6H965.5V151.4H966.5V150.9H967.5V150.8H968.5V152.9H969.5V152.4H970.5V152.9H971.5V152.6H972.5V152.2H973.5V151.9H974.5V151.3H975.5V153.8H976.5V152.1H977.5V151.3H978.5V151.7H979.5V150.8H980.5V151.6H981.5V153.8H982.5V152.5H983V163.1V163.1H982.5V164.5H981.5V163.5H980.5V164.9H979.5V164.1H978.5V165.0H977.5V163.7H976.5V163.8H975.5V164.1H974.5V164.7H973.5V163.3H972.5V165.5H971.5V164.6H970.5V166.0H969.5V162.8H968.5V163.3H967.5V163.8H966.5V164.1H965.5V164.9H964.5V163.2H963.5V166.1H962.5V162.8H961.5V164.7H960.5V164.0H959.5V163.3H958.5V161.8H957.5V164.2H956.5V162.6H955.5V161.6H954.5V162.7H953.5V161.3H952.5V163.3H951.5V163.8H950.5V164.9H949.5V164.7H948.5V162.5H947.5V163.6H946.5V164.7H945.5V165.3H944.5V162.7H943.5V162.2H942.5V163.3H941.5V163.7H940.5V163.5H939.5V163.3H938.5V162.8H937.5V161.9H936.5V162.3H935.5V164.5H934.5V163.9H933.5V163.0H932.5V165.2H931.5V162.6H930.5V162.3H929.5V162.9H928.5V165.1H927.5V164.9H926.5V162.5H925.5V162.7H924.5V163.1H923.5V165.5H922.5V162.9H921.5V163.4H920.5V163.6H919.5V164.7H918.5V164.5H917.5V163.0H916.5V163.4H915.5V164.0H914.5V166.2H913.5V164.7H912.5V163.0H911.5V165.9H910.5V163.4H909.5V163.0H908.5V161.9H907.5V161.9H906.5V164.1H905.5V163.2H904.5V162.2H903.5V162.6H902.5V164.4H901.5V164.0H900.5V163.4H899.5V165.6H898.5V163.4H897.5V163.1H896.5V164.2H895.5V164.5H894.5V162.3H893.5V165.0H892.5V162.5H891.5V164.9H890.5V162.5H889.5V164.2H888.5V162.5H887.5V166.3H886.5V164.0H885.5V162.9H884.5V162.8H883.5V163.6H882.5V164.9H881.5V163.4H880.5V165.2H879.5V164.9H878.5V163.0H877.5V164.9H876.5V164.4H875.5V165.3H874.5V166.0H873.5V164.3H872.5V164.5H871.5V163.7H870.5V165.4H869.5V163.5H868.5V164.3H867.5V166.1H866.5V164.0H865.5V163.2H864.5V165.1H863.5V164.4H862.5V164.0H861.5V164.7H860.5V163.1H859.5V163.3H858.5V163.4H857.5V165.8H856.5V163.8H855.5V163.6H854.5V162.1H853.5V163.5H852.5V165.9H851.5V163.6H850.5V164.3H849.5V162.7H848.5V163.0H847.5V164.0H846.5V165.1H845.5V164.6H844.5V163.9H843.5V164.0H842.5V164.4H841.5V163.6H840.5V164.9H839.5V164.3H838.5V163.9H837.5V163.9H836.5V164.9H835.5V164.0H834.5V164.5H833.5V162.6H832.5V163.0H831.5V163.0H830.5V163.9H829.5V164.6H828.5V163.2H827.5V163.6H826.5V164.7H825.5V163.7H824.5V164.3H823.5V165.4H822.5V166.3H821.5V164.3H820.5V164.6H819.5V164.1H818.5V164.5H817.5V164.9H816.5V164.9H815.5V163.8H814.5V166.0H813.5V167.1H812.5V165.0H811.5V164.9H810.5V164.3H809.5V163.7H808.5V164.9H807.5V164.0H806.5V163.6H805.5V164.6H804.5V165.2H803.5V165.1H802.5V166.0H801.5V165.0H800.5V165.2H799.5V164.9H798.5V164.9H797.5V166.1H796.5V164.3H795.5V164.6H794.5V164.6H793.5V165.7H792.5V163.8H791.5V163.5H790.5V163.9H789.5V164.4H788.5V164.2H787.5V163.3H786.5V164.0H785.5V162.4H784.5V162.4H783.5V165.0H782.5V162.9H781.5V162.6H780.5V162.1H779.5V165.4H778.5V165.0H777.5V163.5H776.5V162.5H775.5V162.0H774.5V165.6H773.5V163.0H772.5V162.1H771.5V165.0H770.5V162.6H769.5V163.8H768.5V164.5H767.5V166.9H766.5V162.2H765.5V163.0H764.5V165.6H763.5V163.2H762.5V163.6H761.5V163.9H760.5V166.9H759.5V166.8H758.5V164.6H757.5V164.0H756.5V165.2H755.5V164.5H754.5V162.7H753.5V163.4H752.5V164.2H751.5V163.6H750.5V163.8H749.5V163.6H748.5V164.2H747.5V165.4H746.5V164.6H745.5V163.8H744.5V164.1H743.5V162.3H742.5V164.0H741.5V164.0H740.5V164.0H739.5V163.6H738.5V166.4H737.5V162.6H736.5V163.9H735.5V163.2H734.5V164.0H733.5V164.8H732.5V164.3H731.5V163.1H730.5V164.4H729.5V164.0H728.5V164.9H727.5V163.7H726.5V163.0H725.5V163.4H724.5V164.7H723.5V163.8H722.5V164.5H721.5V164.4H720.5V163.6H719.5V163.2H718.5V164.5H717.5V163.4H716.5V163.5H715.5V164.4H714.5V163.5H713.5V164.6H712.5V164.4H711.5V164.0H710.5V166.6H709.5V165.6H708.5V163.8H707.5V164.6H706.5V165.6H705.5V164.3H704.5V163.8H703.5V165.8H702.5V163.1H701.5V162.9H700.5V165.5H699.5V163.4H698.5V164.8H697.5V166.5H696.5V168.6H695.5V167.1H694.5V165.0H693.5V167.6H692.5V165.1H691.5V166.7H690.5V166.3H689.5V168.0H688.5V164.7H687.5V166.8H686.5V164.4H685.5V167.5H684.5V166.2H683.5V165.4H682.5V164.8H681.5V165.5H680.5V164.7H679.5V167.1H678.5V165.8H677.5V163.4H676.5V163.1H675.5V165.4H674.5V165.6H673.5V163.4H672.5V166.7H671.5V165.6H670.5V163.7H669.5V164.2H668.5V165.1H667.5V163.9H666.5V163.3H665.5V163.8H664.5V163.0H663.5V163.7H662.5V164.2H661.5V162.7H660.5V164.3H659.5V162.8H658.5V163.0H657.5V162.7H656.5V165.8H655.5V161.5H654.5V162.6H653.5V165.0H652.5V164.6H651.5V163.0H650.5V162.3H649.5V165.5H648.5V163.6H647.5V165.7H646.5V166.5H645.5V165.1H644.5V163.3H643.5V164.3H642.5V163.4H641.5V163.6H640.5V164.9H639.5V164.0H638.5V167.5H637.5V163.4H636.5V164.8H635.5V163.2H634.5V163.9H633.5V163.6H632.5V163.6H631.5V163.9H630.5V163.8H629.5V166.6H628.5V163.4H627.5V162.8H626.5V163.3H625.5V163.1H624.5V164.4H623.5V163.8H622.5V163.7H621.5V166.0H620.5V162.2H619.5V162.5H618.5V163.8H617.5V164.2H616.5V166.3H615.5V164.6H614.5V164.1H613.5V165.1H612.5V163.6H611.5V164.5H610.5V163.0H609.5V165.4H608.5V163.4H607.5V163.1H606.5V164.9H605.5V164.8H604.5V165.9H603.5V164.1H602.5V166.2H601.5V164.5H600.5V164.8H599.5V163.9H598.5V163.8H597.5V165.4H596.5V164.2H595.5V162.3H594.5V162.8H593.5V166.0H592.5V164.6H591.5V165.2H590.5V163.4H589.5V164.4H588.5V163.4H587.5V163.7H586.5V163.2H585.5V166.1H584.5V164.2H583.5V163.5H582.5V162.8H581.5V163.6H580.5V165.6H579.5V162.7H578.5V167.0H577.5V163.9H576.5V162.6H575.5V163.3H574.5V163.9H573.5V163.7H572.5V164.4H571.5V165.2H570.5V163.1H569.5V164.7H568.5V162.8H567.5V163.4H566.5V162.8H565.5V162.8H564.5V164.1H563.5V162.6H562.5V166.0H561.5V164.7H560.5V163.5H559.5V163.3H558.5V161.3H557.5V164.1H556.5V163.1H555.5V162.4H554.5V162.3H553.5V163.4H552.5V165.0H551.5V163.1H550.5V163.0H549.5V165.0H548.5V165.0H547.5V164.4H546.5V163.6H545.5V165.7H544.5V163.6H543.5V162.8H542.5V163.5H541.5V162.9H540.5V163.8H539.5V165.1H538.5V164.6H537.5V162.7H536.5V163.7H535.5V164.5H534.5V163.8H533.5Z" fill="#1FA80C" shape-rendering="crispEdges"/><path d="M533.5 154.7H534.5V154.1H535.5V154.5H536.5V154.4H537.5V155.0H538.5V154.8H539.5V154.9H540.5V153.9H541.5V154.3H542.5V153.8H543.5V153.5H544.5V154.6H545.5V154.9H546.5V154.5H547.5V155.4H548.5V154.8H549.5V154.7H550.5V154.5H551.5V154.7H552.5V154.1H553.5V154.1H554.5V154.5H555.5V153.6H556.5V153.4H557.5V153.9H558.5V153.0H559.5V154.1H560.5V153.6H561.5V154.4H562.5V153.4H563.5V153.3H564.5V152.5H565.5V153.2H566.5V153.0H567.5V153.9H568.5V153.8H569.5V154.0H570.5V153.6H571.5V153.4H572.5V154.0H573.5V153.5H574.5V153.4H575.5V153.8H576.5V154.3H577.5V154.3H578.5V153.3H579.5V154.3H580.5V154.0H581.5V154.0H582.5V154.7H583.5V153.7H584.5V153.4H585.5V154.4H586.5V154.3H587.5V154.3H588.5V153.4H589.5V153.7H590.5V154.4H591.5V154.0H592.5V153.6H593.5V153.9H594.5V154.0H595.5V153.9H596.5V153.5H597.5V154.1H598.5V154.1H599.5V154.0H600.5V154.5H601.5V153.9H602.5V154.8H603.5V153.2H604.5V154.5H605.5V153.4H606.5V153.5H607.5V153.6H608.5V155.0H609.5V153.8H610.5V155.0H611.5V154.9H612.5V155.1H613.5V154.3H614.5V155.0H615.5V154.0H616.5V153.6H617.5V153.5H618.5V153.2H619.5V152.5H620.5V153.0H621.5V153.2H622.5V153.6H623.5V154.4H624.5V154.4H625.5V154.3H626.5V153.4H627.5V153.3H628.5V154.0H629.5V153.3H630.5V153.6H631.5V155.0H632.5V154.9H633.5V155.1H634.5V154.2H635.5V153.7H636.5V154.4H637.5V154.2H638.5V155.0H639.5V153.9H640.5V154.9H641.5V155.2H642.5V154.5H643.5V153.7H644.5V153.9H645.5V154.3H646.5V154.2H647.5V154.4H648.5V152.9H649.5V153.1H650.5V153.8H651.5V153.1H652.5V153.9H653.5V153.9H654.5V152.6H655.5V152.7H656.5V152.8H657.5V152.8H658.5V152.7H659.5V152.9H660.5V153.1H661.5V154.3H662.5V154.8H663.5V154.5H664.5V154.9H665.5V154.7H666.5V154.1H667.5V154.5H668.5V154.5H669.5V155.1H670.5V154.6H671.5V154.9H672.5V154.2H673.5V155.3H674.5V154.6H675.5V155.4H676.5V155.4H677.5V155.2H678.5V156.2H679.5V155.5H680.5V155.3H681.5V155.1H682.5V155.7H683.5V154.5H684.5V154.9H685.5V155.1H686.5V155.3H687.5V155.1H688.5V155.4H689.5V155.0H690.5V155.3H691.5V155.4H692.5V154.9H693.5V155.2H694.5V154.8H695.5V155.1H696.5V154.9H697.5V154.8H698.5V155.2H699.5V155.1H700.5V154.6H701.5V154.6H702.5V153.8H703.5V153.6H704.5V154.3H705.5V154.8H706.5V155.0H707.5V155.5H708.5V154.3H709.5V155.5H710.5V154.9H711.5V154.3H712.5V155.2H713.5V154.6H714.5V154.8H715.5V154.8H716.5V154.1H717.5V154.7H718.5V154.7H719.5V153.9H720.5V154.6H721.5V153.7H722.5V153.6H723.5V153.8H724.5V153.8H725.5V153.9H726.5V155.2H727.5V154.2H728.5V154.4H729.5V154.0H730.5V154.6H731.5V154.5H732.5V154.0H733.5V154.9H734.5V155.0H735.5V153.7H736.5V153.3H737.5V153.8H738.5V154.5H739.5V154.6H740.5V153.2H741.5V154.6H742.5V154.8H743.5V153.9H744.5V154.3H745.5V155.0H746.5V154.5H747.5V155.1H748.5V155.2H749.5V154.0H750.5V155.1H751.5V155.1H752.5V155.0H753.5V154.2H754.5V153.8H755.5V154.7H756.5V154.1H757.5V154.4H758.5V154.3H759.5V155.0H760.5V154.5H761.5V154.8H762.5V153.8H763.5V154.5H764.5V153.9H765.5V153.6H766.5V154.5H767.5V153.4H768.5V153.2H769.5V153.3H770.5V153.1H771.5V153.8H772.5V153.1H773.5V153.2H774.5V153.8H775.5V154.1H776.5V153.5H777.5V152.9H778.5V153.1H779.5V154.0H780.5V153.6H781.5V152.6H782.5V153.7H783.5V153.5H784.5V153.7H785.5V153.6H786.5V154.0H787.5V154.6H788.5V154.4H789.5V153.1H790.5V154.7H791.5V154.8H792.5V154.5H793.5V154.0H794.5V154.4H795.5V154.4H796.5V155.6H797.5V154.8H798.5V155.7H799.5V155.1H800.5V155.3H801.5V154.2H802.5V155.1H803.5V154.2H804.5V154.5H805.5V154.0H806.5V155.2H807.5V155.0H808.5V155.2H809.5V154.5H810.5V155.4H811.5V154.9H812.5V155.2H813.5V155.7H814.5V155.8H815.5V154.8H816.5V155.1H817.5V154.7H818.5V154.0H819.5V153.8H820.5V154.5H821.5V155.5H822.5V155.6H823.5V154.8H824.5V154.6H825.5V155.2H826.5V154.8H827.5V153.6H828.5V154.8H829.5V154.9H830.5V154.2H831.5V153.5H832.5V154.4H833.5V153.3H834.5V154.2H835.5V154.6H836.5V154.6H837.5V153.9H838.5V154.7H839.5V154.5H840.5V153.8H841.5V153.9H842.5V154.3H843.5V154.1H844.5V155.0H845.5V154.8H846.5V155.1H847.5V154.9H848.5V155.3H849.5V154.9H850.5V154.4H851.5V154.3H852.5V154.2H853.5V153.5H854.5V153.6H855.5V153.9H856.5V153.8H857.5V153.6H858.5V154.4H859.5V154.7H860.5V153.6H861.5V154.7H862.5V154.3H863.5V155.0H864.5V154.5H865.5V155.1H866.5V155.0H867.5V153.9H868.5V153.9H869.5V154.2H870.5V154.9H871.5V154.3H872.5V154.4H873.5V155.0H874.5V154.7H875.5V154.2H876.5V155.0H877.5V154.7H878.5V154.8H879.5V154.9H880.5V155.1H881.5V154.4H882.5V153.6H883.5V153.3H884.5V153.4H885.5V153.4H886.5V154.7H887.5V153.6H888.5V154.6H889.5V154.2H890.5V154.1H891.5V153.6H892.5V153.4H893.5V154.8H894.5V153.0H895.5V154.1H896.5V152.8H897.5V153.9H898.5V153.3H899.5V154.5H900.5V153.3H901.5V155.0H902.5V154.2H903.5V153.4H904.5V153.6H905.5V153.5H906.5V153.8H907.5V153.5H908.5V153.6H909.5V154.3H910.5V154.0H911.5V154.4H912.5V153.4H913.5V154.2H914.5V153.4H915.5V154.4H916.5V154.0H917.5V153.7H918.5V154.3H919.5V153.9H920.5V153.2H921.5V154.1H922.5V154.1H923.5V153.6H924.5V153.9H925.5V153.6H926.5V153.0H927.5V153.9H928.5V153.2H929.5V153.3H930.5V153.4H931.5V152.8H932.5V153.5H933.5V154.0H934.5V154.3H935.5V153.9H936.5V153.7H937.5V153.8H938.5V152.9H939.5V153.4H940.5V153.8H941.5V153.7H942.5V154.2H943.5V154.6H944.5V153.5H945.5V154.4H946.5V153.9H947.5V154.2H948.5V154.1H949.5V152.9H950.5V152.9H951.5V152.9H952.5V152.4H953.5V152.4H954.5V152.1H955.5V152.1H956.5V153.1H957.5V153.6H958.5V153.4H959.5V153.1H960.5V153.9H961.5V152.9H962.5V153.2H963.5V153.1H964.5V154.6H965.5V153.6H966.5V153.5H967.5V153.0H968.5V154.2H969.5V153.9H970.5V155.0H971.5V154.6H972.5V154.8H973.5V154.6H974.5V154.1H975.5V154.5H976.5V153.9H977.5V154.6H978.5V154.5H979.5V154.5H980.5V154.1H981.5V155.2H982.5V154.1H983V162.3V162.3H982.5V163.4H981.5V162.4H980.5V162.8H979.5V162.6H978.5V163.0H977.5V161.8H976.5V161.7H975.5V162.8H974.5V163.1H973.5V162.4H972.5V161.9H971.5V163.0H970.5V162.8H969.5V161.6H968.5V161.8H967.5V162.0H966.5V162.2H965.5V162.1H964.5V162.1H963.5V161.9H962.5V161.1H961.5V161.9H960.5V161.1H959.5V161.0H958.5V160.9H957.5V161.1H956.5V161.5H955.5V160.6H954.5V160.6H953.5V160.4H952.5V160.7H951.5V161.8H950.5V162.1H949.5V162.0H948.5V161.0H947.5V162.4H946.5V162.7H945.5V162.6H944.5V162.0H943.5V161.1H942.5V161.7H941.5V162.3H940.5V161.9H939.5V161.6H938.5V161.2H937.5V161.1H936.5V161.2H935.5V161.6H934.5V161.7H933.5V161.4H932.5V161.9H931.5V161.9H930.5V161.4H929.5V162.1H928.5V161.4H927.5V161.5H926.5V161.3H925.5V160.7H924.5V161.5H923.5V162.3H922.5V161.9H921.5V161.2H920.5V162.1H919.5V162.5H918.5V161.2H917.5V161.5H916.5V162.4H915.5V160.9H914.5V162.5H913.5V161.4H912.5V162.0H911.5V162.6H910.5V161.2H909.5V162.0H908.5V161.1H907.5V161.2H906.5V161.9H905.5V161.9H904.5V161.2H903.5V161.5H902.5V163.1H901.5V161.5H900.5V162.1H899.5V162.8H898.5V161.8H897.5V161.5H896.5V162.3H895.5V162.2H894.5V161.7H893.5V162.4H892.5V161.1H891.5V162.5H890.5V161.9H889.5V162.3H888.5V161.3H887.5V161.8H886.5V162.2H885.5V162.2H884.5V162.1H883.5V162.9H882.5V162.9H881.5V162.3H880.5V163.5H879.5V163.0H878.5V162.2H877.5V162.6H876.5V163.3H875.5V163.3H874.5V163.7H873.5V163.3H872.5V163.4H871.5V162.1H870.5V162.3H869.5V162.8H868.5V163.4H867.5V162.3H866.5V163.1H865.5V162.5H864.5V162.3H863.5V162.5H862.5V161.9H861.5V162.9H860.5V162.1H859.5V162.2H858.5V162.6H857.5V162.2H856.5V161.6H855.5V162.5H854.5V161.5H853.5V162.5H852.5V163.3H851.5V163.0H850.5V162.9H849.5V162.1H848.5V162.0H847.5V162.2H846.5V162.8H845.5V163.1H844.5V163.0H843.5V163.0H842.5V162.8H841.5V162.2H840.5V163.4H839.5V162.5H838.5V162.7H837.5V162.6H836.5V161.7H835.5V161.9H834.5V162.6H833.5V161.7H832.5V161.6H831.5V162.1H830.5V162.8H829.5V163.1H828.5V161.9H827.5V162.9H826.5V163.3H825.5V162.3H824.5V162.5H823.5V162.7H822.5V163.0H821.5V162.4H820.5V162.3H819.5V163.0H818.5V163.2H817.5V163.5H816.5V164.2H815.5V162.7H814.5V163.7H813.5V163.8H812.5V162.8H811.5V162.3H810.5V163.3H809.5V162.6H808.5V163.3H807.5V163.0H806.5V162.4H805.5V162.6H804.5V163.3H803.5V162.9H802.5V163.6H801.5V163.2H800.5V162.5H799.5V162.7H798.5V163.5H797.5V162.9H796.5V163.7H795.5V163.5H794.5V163.0H793.5V163.0H792.5V161.8H791.5V161.5H790.5V161.6H789.5V162.2H788.5V161.6H787.5V162.5H786.5V162.2H785.5V161.0H784.5V161.4H783.5V162.2H782.5V161.9H781.5V161.7H780.5V161.3H779.5V162.2H778.5V161.7H777.5V162.2H776.5V161.1H775.5V161.1H774.5V162.1H773.5V162.2H772.5V161.3H771.5V162.4H770.5V161.7H769.5V162.5H768.5V161.4H767.5V161.6H766.5V161.6H765.5V161.5H764.5V162.1H763.5V161.7H762.5V162.2H761.5V163.3H760.5V163.0H759.5V163.3H758.5V163.4H757.5V162.1H756.5V162.9H755.5V162.6H754.5V162.0H753.5V162.7H752.5V162.2H751.5V162.3H750.5V162.8H749.5V161.9H748.5V163.0H747.5V163.0H746.5V163.1H745.5V162.8H744.5V162.8H743.5V161.5H742.5V162.0H741.5V162.3H740.5V162.0H739.5V161.9H738.5V161.7H737.5V161.4H736.5V161.8H735.5V161.9H734.5V162.7H733.5V161.9H732.5V163.0H731.5V161.6H730.5V161.9H729.5V162.0H728.5V162.6H727.5V162.6H726.5V162.1H725.5V162.7H724.5V163.1H723.5V162.0H722.5V162.9H721.5V161.7H720.5V163.0H719.5V162.5H718.5V163.2H717.5V162.7H716.5V162.8H715.5V162.5H714.5V162.4H713.5V162.9H712.5V163.1H711.5V163.2H710.5V163.2H709.5V163.5H708.5V162.9H707.5V162.8H706.5V162.6H705.5V162.8H704.5V161.8H703.5V162.9H702.5V162.4H701.5V161.8H700.5V162.4H699.5V162.8H698.5V163.5H697.5V163.8H696.5V163.3H695.5V163.8H694.5V163.3H693.5V163.2H692.5V163.6H691.5V164.1H690.5V164.1H689.5V164.1H688.5V163.2H687.5V164.2H686.5V163.4H685.5V163.1H684.5V163.7H683.5V163.7H682.5V163.3H681.5V163.6H680.5V164.0H679.5V163.4H678.5V163.4H677.5V162.7H676.5V162.2H675.5V162.8H674.5V162.7H673.5V162.3H672.5V162.3H671.5V162.7H670.5V162.8H669.5V163.5H668.5V163.5H667.5V162.3H666.5V162.5H665.5V161.7H664.5V162.3H663.5V162.7H662.5V161.9H661.5V161.5H660.5V161.9H659.5V161.1H658.5V160.9H657.5V161.1H656.5V161.8H655.5V160.4H654.5V161.8H653.5V161.6H652.5V162.0H651.5V162.2H650.5V161.2H649.5V162.4H648.5V161.6H647.5V162.2H646.5V162.3H645.5V162.1H644.5V162.1H643.5V162.8H642.5V162.5H641.5V162.9H640.5V162.3H639.5V162.3H638.5V162.4H637.5V162.2H636.5V162.5H635.5V162.3H634.5V162.1H633.5V163.0H632.5V162.9H631.5V161.7H630.5V161.9H629.5V161.9H628.5V162.1H627.5V161.5H626.5V162.6H625.5V161.6H624.5V162.9H623.5V162.6H622.5V161.6H621.5V162.4H620.5V160.7H619.5V161.7H618.5V161.1H617.5V161.0H616.5V161.7H615.5V162.9H614.5V163.0H613.5V163.4H612.5V162.9H611.5V162.1H610.5V162.1H609.5V162.8H608.5V162.0H607.5V162.5H606.5V162.3H605.5V161.4H604.5V161.4H603.5V162.2H602.5V163.3H601.5V161.8H600.5V162.2H599.5V161.7H598.5V161.8H597.5V162.6H596.5V161.6H595.5V161.6H594.5V161.6H593.5V161.6H592.5V162.3H591.5V162.5H590.5V162.6H589.5V162.6H588.5V162.1H587.5V161.7H586.5V161.4H585.5V162.5H584.5V163.0H583.5V162.4H582.5V161.9H581.5V162.2H580.5V162.6H579.5V162.0H578.5V162.5H577.5V162.2H576.5V161.8H575.5V161.8H574.5V161.8H573.5V161.7H572.5V161.7H571.5V161.4H570.5V162.1H569.5V162.6H568.5V160.8H567.5V160.8H566.5V161.2H565.5V160.5H564.5V161.6H563.5V161.0H562.5V162.0H561.5V161.9H560.5V162.3H559.5V161.5H558.5V160.7H557.5V161.8H556.5V161.6H555.5V161.8H554.5V161.7H553.5V162.1H552.5V162.7H551.5V162.3H550.5V162.3H549.5V163.7H548.5V163.6H547.5V163.4H546.5V161.7H545.5V162.6H544.5V162.8H543.5V161.9H542.5V162.4H541.5V162.1H540.5V161.9H539.5V162.7H538.5V162.1H537.5V161.8H536.5V162.7H535.5V161.9H534.5V162.2H533.5Z" fill="#30FF10" shape-rendering="crispEdges"/><path d="M445.5 254.8H446.5V252.2H447.5V252.1H448.5V253.0H449.5V252.5H450.5V252.6H451.5V252.2H452.5V252.9H453.5V254.4H454.5V255.3H455.5V252.6H456.5V254.7H457.5V255.0H458.5V253.1H459.5V254.6H460.5V254.8H461.5V255.2H462.5V255.1H463.5V254.3H464.5V253.0H465.5V252.8H466.5V254.3H467.5V253.9H468.5V254.8H469.5V252.0H470.5V254.7H471.5V253.2H472.5V253.6H473.5V251.7H474.5V254.8H475.5V253.3H476.5V254.1H477.5V254.0H478.5V252.3H479.5V252.6H480.5V254.0H481.5V253.4H482.5V253.6H483.5V253.1H484.5V252.4H485.5V252.9H486.5V251.4H487.5V252.1H488.5V254.5H489.5V255.0H490.5V253.0H491.5V253.4H492.5V251.8H493.5V253.2H494.5V254.7H495.5V254.0H496.5V253.0H497.5V252.8H498.5V252.4H499.5V254.2H500.5V252.4H501.5V253.2H502.5V253.8H503.5V251.2H504.5V252.7H505.5V253.8H506.5V254.4H507.5V253.8H508.5V254.1H509.5V252.9H510.5V253.7H511.5V255.1H512.5V252.8H513.5V252.6H514.5V253.8H515.5V253.0H516.5V253.8H517.5V253.8H518.5V253.8H519.5V253.3H520.5V249.7H521.5V252.7H522.5V253.2H523.5V253.0H524.5V252.8H525.5V254.5H526.5V253.5H527.5V251.2H528.5V254.4H529.5V252.6H530.5V251.1H531.5V253.6H532.5V253.3H533.5V265.7V265.7H532.5V263.5H531.5V263.9H530.5V265.2H529.5V263.1H528.5V264.0H527.5V265.0H526.5V263.1H525.5V265.1H524.5V263.6H523.5V263.2H522.5V265.5H521.5V264.1H520.5V265.0H519.5V265.9H518.5V265.1H517.5V265.5H516.5V263.9H515.5V264.0H514.5V264.9H513.5V264.6H512.5V271.1H511.5V265.2H510.5V266.3H509.5V263.2H508.5V265.0H507.5V263.4H506.5V263.4H505.5V265.0H504.5V265.4H503.5V264.8H502.5V263.9H501.5V263.4H500.5V263.1H499.5V264.6H498.5V266.0H497.5V265.1H496.5V264.2H495.5V265.2H494.5V265.6H493.5V265.8H492.5V263.4H491.5V263.6H490.5V266.5H489.5V264.9H488.5V263.6H487.5V265.7H486.5V265.1H485.5V263.5H484.5V264.7H483.5V264.1H482.5V264.2H481.5V264.0H480.5V264.7H479.5V264.4H478.5V264.3H477.5V265.6H476.5V263.6H475.5V264.3H474.5V265.4H473.5V265.2H472.5V265.3H471.5V264.5H470.5V266.4H469.5V263.9H468.5V266.4H467.5V263.8H466.5V263.7H465.5V264.9H464.5V264.5H463.5V264.8H462.5V266.4H461.5V266.4H460.5V265.1H459.5V266.2H458.5V264.9H457.5V265.8H456.5V266.1H455.5V265.3H454.5V264.8H453.5V263.5H452.5V265.3H451.5V263.1H450.5V263.8H449.5V263.7H448.5V263.6H447.5V263.5H446.5V263.0H445.5Z" fill="#1FA80C" shape-rendering="crispEdges"/><path d="M445.5 255.4H446.5V255.0H447.5V254.4H448.5V255.2H449.5V254.8H450.5V255.6H451.5V255.1H452.5V254.5H453.5V256.1H454.5V256.1H455.5V255.0H456.5V255.5H457.5V256.4H458.5V256.3H459.5V255.8H460.5V255.9H461.5V256.1H462.5V255.8H463.5V255.5H464.5V255.0H465.5V254.7H466.5V255.1H467.5V255.0H468.5V255.5H469.5V255.3H470.5V255.5H471.5V255.6H472.5V255.2H473.5V255.4H474.5V256.0H475.5V255.2H476.5V255.2H477.5V255.1H478.5V254.5H479.5V254.3H480.5V254.9H481.5V254.3H482.5V255.4H483.5V254.6H484.5V255.9H485.5V255.7H486.5V255.2H487.5V254.7H488.5V255.4H489.5V256.2H490.5V255.3H491.5V255.7H492.5V255.2H493.5V255.3H494.5V255.7H495.5V255.5H496.5V256.0H497.5V255.3H498.5V254.5H499.5V255.1H500.5V254.5H501.5V255.6H502.5V255.5H503.5V255.4H504.5V254.5H505.5V254.5H506.5V255.1H507.5V254.7H508.5V256.0H509.5V255.3H510.5V255.6H511.5V255.9H512.5V254.8H513.5V255.1H514.5V255.7H515.5V255.5H516.5V255.9H517.5V255.1H518.5V255.7H519.5V255.7H520.5V255.3H521.5V254.9H522.5V255.0H523.5V254.5H524.5V254.7H525.5V255.2H526.5V255.2H527.5V255.3H528.5V255.2H529.5V255.1H530.5V254.2H531.5V255.5H532.5V255.1H533.5V262.6V262.6H532.5V262.9H531.5V262.8H530.5V263.1H529.5V262.1H528.5V262.5H527.5V262.4H526.5V262.0H525.5V263.3H524.5V262.8H523.5V262.4H522.5V263.7H521.5V262.8H520.5V263.3H519.5V263.4H518.5V262.5H517.5V263.6H516.5V262.7H515.5V263.2H514.5V263.0H513.5V262.9H512.5V263.6H511.5V263.6H510.5V262.9H509.5V262.5H508.5V262.3H507.5V262.1H506.5V261.9H505.5V262.2H504.5V262.5H503.5V263.8H502.5V263.1H501.5V262.0H500.5V262.4H499.5V263.3H498.5V263.6H497.5V263.0H496.5V262.8H495.5V263.7H494.5V263.2H493.5V263.3H492.5V262.5H491.5V262.7H490.5V263.8H489.5V263.9H488.5V262.5H487.5V263.3H486.5V262.5H485.5V262.8H484.5V263.2H483.5V263.0H482.5V263.3H481.5V261.7H480.5V262.4H479.5V263.3H478.5V263.4H477.5V263.8H476.5V263.0H475.5V262.7H474.5V264.0H473.5V263.0H472.5V263.4H471.5V263.4H470.5V263.0H469.5V262.7H468.5V263.2H467.5V262.4H466.5V263.1H465.5V263.2H464.5V263.3H463.5V263.0H462.5V264.0H461.5V264.5H460.5V263.9H459.5V264.4H458.5V263.5H457.5V264.0H456.5V263.7H455.5V263.0H454.5V262.5H453.5V262.9H452.5V263.3H451.5V262.4H450.5V262.6H449.5V262.3H448.5V262.9H447.5V262.4H446.5V261.9H445.5Z" fill="#30FF10" shape-rendering="crispEdges"/><path d="M84 257.4H85V257.6H86V257.1H87V257.1H88V258.6H89V255.4H90V257.4H91V256.1H92V255.3H93V255.4H94V254.9H95V257.1H96V255.5H97V257.2H98V256.3H99V255.8H100V257.1H101V256.6H102V256.6H103V258.1H104V256.1H105V257.2H106V255.7H107V255.5H108V256.8H109V254.6H110V257.8H111V255.5H112V257.5H113V257.3H114V256.5H115V257.8H116V256.9H117V255.8H118V254.1H119V256.0H120V256.8H121V256.1H122V256.1H123V257.1H124V257.1H125V256.0H126V256.8H127V257.1H128V257.5H129V255.4H130V257.2H131V254.8H132V257.5H133V256.1H134V256.3H135V255.9H136V253.9H137V255.9H138V254.7H139V257.0H140V254.2H141V254.2H142V255.7H143V256.1H144V254.9H145V255.2H146V255.6H147V254.3H148V257.0H149V257.1H150V255.4H151V254.3H152V255.4H153V257.5H154V255.8H155V258.2H156V257.4H157V255.6H158V257.0H159V256.5H160V257.9H161V257.7H162V257.6H163V258.4H164V257.2H165V258.0H166V256.9H167V258.5H168V258.1H169V259.0H170V256.0H171V257.2H172V259.0H173V259.0H174V256.9H175V258.3H176V258.9H177V256.8H178V254.9H179V259.4H180V259.2H181V257.0H182V259.0H183V258.7H184V257.4H185V258.0H186V256.9H187V258.0H188V256.6H189V258.0H190V256.2H191V259.3H192V257.0H193V256.4H194V257.4H195V254.8H196V257.4H197V256.8H198V254.6H199V256.0H200V256.6H201V257.1H202V256.5H203V256.8H204V257.2H205V257.9H206V256.4H207V254.1H208V257.1H209V257.4H210V258.7H211V258.1H212V257.1H213V257.9H214V258.6H215V258.7H216V258.4H217V257.8H218V258.9H219V256.3H220V259.3H221V256.1H222V257.6H223V257.9H224V256.6H225V255.7H226V255.5H227V257.3H228V255.8H229V258.1H230V258.7H231V257.9H232V258.0H233V257.9H234V256.4H235V257.1H236V257.5H237V257.4H238V256.7H239V257.2H240V258.7H241V258.0H242V257.0H243V257.1H244V257.3H245V257.2H246V257.2H247V257.9H248V257.3H249V254.3H250V255.9H251V254.8H252V259.1H253V257.8H254V258.8H255V257.0H256V258.1H257V258.3H258V258.5H259V258.7H260V255.4H261V256.5H262V257.6H263V256.4H264V257.4H265V257.4H266V254.9H267V256.8H268V257.8H269V256.4H270V257.1H271V256.4H272V256.8H273V255.9H274V255.1H275V258.1H276V257.8H277V257.6H278V256.0H279V257.9H280V255.4H281V256.9H282V257.3H283V257.3H284V257.3H285V258.1H286V256.6H287V256.4H288V257.5H289V256.3H290V256.8H291V256.6H292V258.0H293V257.5H294V257.1H295V258.9H296V257.8H297V255.4H298V259.3H299V258.3H300V257.1H301V257.4H302V258.4H303V257.5H304V258.4H305V256.9H306V256.3H307V258.5H308V258.0H309V256.2H310V256.9H311V256.9H312V258.2H313V257.6H314V256.6H315V257.5H316V258.3H317V257.0H318V256.2H319V257.1H320V257.7H321V257.7H322V255.3H323V258.1H324V257.0H325V256.7H326V258.7H327V258.6H328V255.4H329V255.9H330V256.2H331V253.5H332V256.8H333V256.4H334V256.3H335V256.9H336V258.4H337V256.6H338V257.2H339V256.8H340V256.9H341V257.5H342V257.1H343V256.3H344V256.4H345V257.6H346V256.9H347V255.0H348V256.5H349V255.7H350V255.2H351V256.3H352V258.2H353V256.3H354V257.7H355V255.8H356V257.4H357V255.9H358V255.7H359V258.4H360V258.7H361V257.6H362V257.5H363V256.9H364V256.0H365V255.2H366V257.8H367V256.9H368V256.5H369V257.8H370V258.3H371V257.9H372V257.6H373V256.0H374V258.3H375V255.8H376V259.3H377V258.7H378V260.0H379V256.4H380V258.7H381V258.0H382V256.8H383V258.4H384V258.5H385V258.0H386V257.7H387V258.7H388V258.4H389V258.2H390V258.3H391V258.6H392V257.2H393V259.4H394V258.4H395V258.4H396V258.5H397V259.4H398V259.3H399V259.6H400V259.6H401V258.5H402V258.7H403V254.8H404V259.2H405V256.9H406V255.8H407V258.5H408V256.6H409V258.7H410V257.1H411V257.3H412V258.5H413V256.4H414V256.2H415V257.5H416V257.8H417V257.8H418V256.4H419V257.9H420V258.2H421V257.5H422V257.3H423V258.8H424V253.7H425V256.4H426V257.4H427V256.6H428V256.1H429V257.7H430V259.2H431V258.1H432V256.8H433V256.3H434V256.2H435V257.2H436V255.3H437V257.3H438V256.8H439V257.6H440V257.0H441V256.7H442V257.1H443V255.9H444V257.2H445V257.9H445.5V271.0V271.0H445V269.8H444V272.0H443V270.5H442V268.9H441V268.8H440V268.5H439V271.2H438V270.0H437V269.0H436V270.8H435V268.6H434V268.0H433V269.9H432V268.7H431V270.0H430V268.6H429V271.4H428V269.3H427V269.7H426V270.3H425V268.4H424V270.0H423V269.1H422V269.2H421V269.0H420V269.9H419V268.4H418V267.7H417V269.4H416V269.7H415V268.8H414V267.4H413V268.2H412V269.3H411V269.0H410V269.0H409V268.6H408V269.6H407V270.8H406V271.5H405V269.6H404V270.7H403V270.5H402V272.9H401V273.7H400V269.5H399V270.5H398V271.8H397V271.2H396V270.2H395V270.1H394V270.0H393V269.6H392V270.5H391V268.8H390V268.9H389V269.6H388V271.0H387V269.4H386V269.6H385V270.0H384V270.2H383V272.4H382V269.4H381V271.2H380V269.5H379V269.1H378V269.9H377V269.0H376V269.8H375V270.1H374V270.0H373V269.9H372V268.9H371V269.6H370V269.4H369V270.9H368V270.9H367V269.5H366V270.0H365V270.4H364V269.8H363V269.2H362V267.9H361V268.6H360V270.6H359V268.9H358V268.5H357V268.5H356V269.9H355V269.7H354V269.5H353V269.6H352V270.1H351V269.1H350V268.5H349V268.0H348V268.5H347V267.9H346V269.9H345V269.0H344V269.6H343V269.6H342V269.1H341V270.6H340V268.4H339V268.5H338V270.4H337V269.9H336V267.6H335V268.3H334V269.7H333V268.6H332V268.2H331V268.2H330V269.8H329V267.8H328V268.3H327V268.5H326V269.8H325V269.1H324V268.2H323V268.5H322V269.3H321V268.0H320V269.9H319V270.3H318V269.4H317V269.1H316V269.2H315V270.5H314V268.3H313V271.0H312V267.8H311V269.3H310V268.8H309V269.2H308V269.5H307V270.0H306V269.5H305V270.7H304V270.9H303V267.8H302V270.0H301V269.6H300V269.9H299V268.5H298V272.1H297V268.4H296V273.3H295V268.4H294V269.1H293V269.4H292V269.9H291V271.0H290V269.3H289V270.1H288V271.6H287V268.5H286V271.3H285V269.9H284V269.3H283V269.7H282V268.6H281V270.1H280V269.8H279V268.4H278V269.1H277V268.7H276V268.6H275V268.1H274V269.5H273V268.9H272V267.5H271V267.7H270V270.6H269V268.0H268V267.5H267V269.6H266V269.7H265V269.5H264V268.8H263V272.7H262V269.8H261V270.9H260V270.1H259V271.9H258V269.0H257V269.8H256V270.3H255V271.4H254V270.2H253V270.3H252V269.1H251V268.5H250V269.8H249V268.8H248V270.8H247V271.7H246V270.2H245V268.6H244V269.8H243V269.8H242V269.4H241V270.1H240V268.2H239V268.5H238V271.4H237V268.4H236V269.5H235V269.8H234V269.6H233V269.7H232V269.6H231V269.7H230V270.4H229V269.1H228V268.6H227V269.0H226V269.2H225V270.2H224V270.4H223V272.8H222V269.8H221V268.6H220V270.3H219V268.6H218V267.8H217V269.7H216V270.5H215V269.7H214V269.9H213V268.7H212V270.1H211V269.7H210V269.9H209V268.7H208V269.9H207V270.7H206V268.2H205V268.2H204V268.7H203V267.6H202V269.8H201V267.4H200V268.1H199V267.9H198V268.6H197V270.3H196V268.6H195V268.5H194V271.3H193V268.4H192V271.8H191V269.4H190V271.4H189V269.7H188V271.6H187V272.3H186V270.3H185V270.7H184V270.2H183V269.1H182V272.1H181V271.8H180V270.4H179V269.6H178V269.9H177V270.8H176V270.6H175V268.8H174V270.4H173V269.9H172V271.7H171V268.3H170V268.7H169V268.3H168V268.5H167V270.4H166V269.1H165V268.5H164V269.5H163V268.6H162V269.5H161V268.6H160V269.9H159V270.4H158V271.1H157V267.8H156V268.3H155V267.9H154V267.8H153V267.8H152V268.2H151V268.7H150V267.5H149V267.0H148V267.8H147V268.7H146V266.5H145V270.2H144V269.7H143V267.8H142V267.3H141V269.0H140V267.7H139V266.7H138V268.4H137V269.0H136V269.8H135V268.0H134V268.1H133V267.7H132V268.5H131V268.6H130V267.6H129V268.7H128V267.2H127V268.8H126V269.2H125V267.4H124V268.7H123V267.0H122V268.0H121V266.8H120V267.7H119V266.7H118V268.3H117V267.2H116V270.0H115V266.8H114V267.5H113V268.2H112V269.5H111V268.6H110V266.9H109V267.5H108V268.7H107V269.1H106V267.4H105V268.4H104V270.5H103V267.4H102V267.0H101V268.7H100V267.2H99V267.9H98V268.4H97V269.5H96V268.5H95V267.8H94V267.9H93V268.4H92V268.6H91V269.2H90V268.9H89V268.4H88V268.3H87V268.8H86V269.6H85V267.9H84Z" fill="#B8B800" shape-rendering="crispEdges"/><path d="M84 259.6H85V259.5H86V258.4H87V258.4H88V259.3H89V259.3H90V258.3H91V258.3H92V258.0H93V258.1H94V258.2H95V258.0H96V258.0H97V257.9H98V258.6H99V258.5H100V258.9H101V258.7H102V258.4H103V258.9H104V257.3H105V258.1H106V257.6H107V258.5H108V257.6H109V257.4H110V258.9H111V259.4H112V258.3H113V258.3H114V257.6H115V258.8H116V258.3H117V257.8H118V257.6H119V257.8H120V257.7H121V257.3H122V257.2H123V258.1H124V258.3H125V258.5H126V258.2H127V257.8H128V258.8H129V257.5H130V258.8H131V258.3H132V258.2H133V257.5H134V258.6H135V257.4H136V257.7H137V257.2H138V257.6H139V258.4H140V258.7H141V257.9H142V257.4H143V258.2H144V257.3H145V257.1H146V257.9H147V256.7H148V258.2H149V258.0H150V258.6H151V258.1H152V258.5H153V258.9H154V258.0H155V258.9H156V258.8H157V258.5H158V259.2H159V258.2H160V259.5H161V258.5H162V259.1H163V259.3H164V258.4H165V258.8H166V258.9H167V259.2H168V259.1H169V259.7H170V258.6H171V259.4H172V259.7H173V260.0H174V260.2H175V259.0H176V260.0H177V260.3H178V260.0H179V260.2H180V260.3H181V260.0H182V260.9H183V259.8H184V260.7H185V261.0H186V260.2H187V259.9H188V259.5H189V259.7H190V260.5H191V260.4H192V259.1H193V259.2H194V259.5H195V257.9H196V258.7H197V259.1H198V258.5H199V258.5H200V259.0H201V258.5H202V258.2H203V258.2H204V258.9H205V258.6H206V257.9H207V257.8H208V258.5H209V259.2H210V259.3H211V259.3H212V258.9H213V259.4H214V259.2H215V259.7H216V259.4H217V258.7H218V259.6H219V259.7H220V260.3H221V260.2H222V259.4H223V258.9H224V258.8H225V258.7H226V258.5H227V258.5H228V258.6H229V259.4H230V259.4H231V259.0H232V259.1H233V259.7H234V259.9H235V259.1H236V258.7H237V258.6H238V259.2H239V258.4H240V259.6H241V258.7H242V259.9H243V259.3H244V259.9H245V260.2H246V259.7H247V259.4H248V258.9H249V258.7H250V259.5H251V259.7H252V259.9H253V259.4H254V260.0H255V258.9H256V260.3H257V259.2H258V259.4H259V259.3H260V259.5H261V258.5H262V259.1H263V258.3H264V259.7H265V258.6H266V258.1H267V258.7H268V259.2H269V258.6H270V258.7H271V257.9H272V259.0H273V258.5H274V258.1H275V259.2H276V258.8H277V259.1H278V259.2H279V260.2H280V259.4H281V258.6H282V259.4H283V259.7H284V259.6H285V259.4H286V259.1H287V259.2H288V259.2H289V258.8H290V258.9H291V259.6H292V259.3H293V259.7H294V260.0H295V259.9H296V259.7H297V259.5H298V260.2H299V259.4H300V258.5H301V258.5H302V259.1H303V259.0H304V259.1H305V259.3H306V258.6H307V259.5H308V258.8H309V258.3H310V258.0H311V258.7H312V259.5H313V259.4H314V258.5H315V259.0H316V259.0H317V258.8H318V259.4H319V259.2H320V259.3H321V258.4H322V259.1H323V258.9H324V257.8H325V259.2H326V259.4H327V259.3H328V258.5H329V257.9H330V258.6H331V258.2H332V258.2H333V259.0H334V258.5H335V257.9H336V259.3H337V259.6H338V258.7H339V258.6H340V258.9H341V259.6H342V259.5H343V258.4H344V258.7H345V258.8H346V259.3H347V258.7H348V258.2H349V258.8H350V258.0H351V259.7H352V259.6H353V258.7H354V259.3H355V258.9H356V258.9H357V258.7H358V259.6H359V259.4H360V259.7H361V259.0H362V259.3H363V258.3H364V259.1H365V259.2H366V259.1H367V259.2H368V259.3H369V259.0H370V260.2H371V260.4H372V259.9H373V259.3H374V259.4H375V259.3H376V260.4H377V259.9H378V260.8H379V259.7H380V261.0H381V260.4H382V259.2H383V259.4H384V260.5H385V259.2H386V259.8H387V259.4H388V260.3H389V259.2H390V259.7H391V259.5H392V259.7H393V260.3H394V260.3H395V260.9H396V259.5H397V261.2H398V260.0H399V260.4H400V261.1H401V261.2H402V260.0H403V259.9H404V260.4H405V259.0H406V259.1H407V259.8H408V259.5H409V259.6H410V259.3H411V258.4H412V259.2H413V259.0H414V258.0H415V258.7H416V259.0H417V259.0H418V258.2H419V259.4H420V259.7H421V258.7H422V260.1H423V259.7H424V258.6H425V258.7H426V258.4H427V259.2H428V259.1H429V258.5H430V259.8H431V259.5H432V258.4H433V258.7H434V259.3H435V259.2H436V258.2H437V259.4H438V259.3H439V259.1H440V258.2H441V258.8H442V258.6H443V259.0H444V258.9H445V259.8H445.5V268.0V268.0H445V268.0H444V267.4H443V267.5H442V268.3H441V267.8H440V267.6H439V267.4H438V267.6H437V267.7H436V266.5H435V267.8H434V267.0H433V268.2H432V266.9H431V267.7H430V267.8H429V268.2H428V268.0H427V267.2H426V268.2H425V266.7H424V268.4H423V267.6H422V268.4H421V268.0H420V267.1H419V267.4H418V266.8H417V268.0H416V266.4H415V267.4H414V266.7H413V266.8H412V268.3H411V267.4H410V267.7H409V267.2H408V267.3H407V268.1H406V269.0H405V268.2H404V269.0H403V269.0H402V269.5H401V269.2H400V268.8H399V269.5H398V269.2H397V268.8H396V269.5H395V268.1H394V268.8H393V267.7H392V268.6H391V267.8H390V268.3H389V268.4H388V267.7H387V268.6H386V267.9H385V268.6H384V268.6H383V269.0H382V268.8H381V268.8H380V268.5H379V268.2H378V269.3H377V268.2H376V268.5H375V268.0H374V268.7H373V268.2H372V267.7H371V267.9H370V268.5H369V267.7H368V267.8H367V268.2H366V268.5H365V267.9H364V267.2H363V268.4H362V267.1H361V267.5H360V267.3H359V267.8H358V267.4H357V267.1H356V267.0H355V268.0H354V266.7H353V267.4H352V267.5H351V266.6H350V267.8H349V267.2H348V267.6H347V267.3H346V267.5H345V266.9H344V267.0H343V268.1H342V267.6H341V267.1H340V267.7H339V267.1H338V268.2H337V267.0H336V266.6H335V266.7H334V267.5H333V266.9H332V266.3H331V266.4H330V266.6H329V266.4H328V266.9H327V267.7H326V267.5H325V266.9H324V267.3H323V267.6H322V267.9H321V266.9H320V268.1H319V267.6H318V267.5H317V267.8H316V267.4H315V266.9H314V267.3H313V267.6H312V266.8H311V267.2H310V267.0H309V267.1H308V268.4H307V268.1H306V267.8H305V268.4H304V267.2H303V267.1H302V267.4H301V267.2H300V268.3H299V267.7H298V268.3H297V267.5H296V268.3H295V267.7H294V268.0H293V267.5H292V267.5H291V268.3H290V267.2H289V267.8H288V268.1H287V267.2H286V267.7H285V268.4H284V267.7H283V267.4H282V267.7H281V268.4H280V268.4H279V267.7H278V267.5H277V267.2H276V267.0H275V267.0H274V267.1H273V266.8H272V266.3H271V267.0H270V267.9H269V267.0H268V266.8H267V267.1H266V267.4H265V268.3H264V267.4H263V268.0H262V268.0H261V267.0H260V267.5H259V268.2H258V268.3H257V268.2H256V268.5H255V268.2H254V267.7H253V268.2H252V268.0H251V267.4H250V267.9H249V267.4H248V268.3H247V268.9H246V269.1H245V267.4H244V268.1H243V267.7H242V267.3H241V267.2H240V266.7H239V266.9H238V267.0H237V267.5H236V268.0H235V268.5H234V267.2H233V267.6H232V268.2H231V268.3H230V267.4H229V267.8H228V266.8H227V266.9H226V267.5H225V266.7H224V268.3H223V268.9H222V268.4H221V267.8H220V267.1H219V267.0H218V267.1H217V268.6H216V267.5H215V268.0H214V268.4H213V267.9H212V268.2H211V266.7H210V267.5H209V266.9H208V266.5H207V267.4H206V266.9H205V266.8H204V266.3H203V266.8H202V266.6H201V266.5H200V267.4H199V267.0H198V267.0H197V267.1H196V267.6H195V267.7H194V268.3H193V267.4H192V268.8H191V268.5H190V268.1H189V268.5H188V268.0H187V268.7H186V268.8H185V268.3H184V269.5H183V268.5H182V269.6H181V269.3H180V269.5H179V268.0H178V269.3H177V268.3H176V268.5H175V268.0H174V268.5H173V267.8H172V268.4H171V267.2H170V267.1H169V267.0H168V267.2H167V267.8H166V267.5H165V267.3H164V267.3H163V267.4H162V267.1H161V267.9H160V268.0H159V268.0H158V267.9H157V266.9H156V267.0H155V267.0H154V267.0H153V266.7H152V267.1H151V266.6H150V266.4H149V265.8H148V265.3H147V265.8H146V265.6H145V266.7H144V265.9H143V266.6H142V266.5H141V266.7H140V267.0H139V265.6H138V266.1H137V266.6H136V266.8H135V266.7H134V266.1H133V266.8H132V266.4H131V266.3H130V266.9H129V267.3H128V265.9H127V266.6H126V266.6H125V265.8H124V267.2H123V265.9H122V266.3H121V266.0H120V265.7H119V265.8H118V267.0H117V266.1H116V267.4H115V266.1H114V266.4H113V267.2H112V267.7H111V267.4H110V266.0H109V266.6H108V266.0H107V267.2H106V266.2H105V267.0H104V267.1H103V266.7H102V266.2H101V266.8H100V266.2H99V267.3H98V267.3H97V266.3H96V266.6H95V267.1H94V266.9H93V267.3H92V267.6H91V267.4H90V267.7H89V267.7H88V266.5H87V267.9H86V267.2H85V267.2H84Z" fill="#FFFF00" shape-rendering="crispEdges"/><path d="M533.5 258.7H534.5V258.2H535.5V259.1H536.5V255.5H537.5V258.6H538.5V258.5H539.5V257.8H540.5V259.0H541.5V258.8H542.5V257.8H543.5V259.3H544.5V257.1H545.5V256.2H546.5V257.7H547.5V257.1H548.5V256.8H549.5V256.7H550.5V257.3H551.5V256.2H552.5V255.3H553.5V258.4H554.5V258.0H555.5V256.7H556.5V257.9H557.5V257.2H558.5V258.5H559.5V259.1H560.5V259.0H561.5V257.2H562.5V259.0H563.5V257.5H564.5V259.6H565.5V259.7H566.5V259.2H567.5V259.4H568.5V255.5H569.5V258.6H570.5V259.1H571.5V258.9H572.5V258.7H573.5V257.0H574.5V257.1H575.5V258.4H576.5V257.9H577.5V258.0H578.5V259.1H579.5V258.1H580.5V256.4H581.5V257.7H582.5V257.8H583.5V257.9H584.5V256.7H585.5V258.0H586.5V257.1H587.5V258.4H588.5V257.9H589.5V256.8H590.5V256.1H591.5V257.4H592.5V257.5H593.5V254.5H594.5V257.2H595.5V259.2H596.5V258.4H597.5V257.6H598.5V255.9H599.5V257.7H600.5V257.6H601.5V257.9H602.5V258.3H603.5V258.9H604.5V258.5H605.5V258.2H606.5V259.0H607.5V258.8H608.5V258.0H609.5V258.0H610.5V256.3H611.5V258.1H612.5V257.3H613.5V256.7H614.5V258.2H615.5V259.1H616.5V258.6H617.5V258.1H618.5V257.7H619.5V256.8H620.5V258.5H621.5V256.6H622.5V256.8H623.5V257.7H624.5V258.3H625.5V257.4H626.5V256.6H627.5V256.2H628.5V257.8H629.5V258.5H630.5V259.9H631.5V257.4H632.5V258.4H633.5V258.7H634.5V256.4H635.5V257.6H636.5V259.0H637.5V258.5H638.5V259.0H639.5V256.9H640.5V258.5H641.5V258.7H642.5V258.5H643.5V258.5H644.5V259.3H645.5V257.1H646.5V255.5H647.5V257.7H648.5V257.6H649.5V257.9H650.5V258.0H651.5V258.4H652.5V259.6H653.5V259.4H654.5V258.3H655.5V258.3H656.5V256.6H657.5V257.8H658.5V258.4H659.5V259.6H660.5V258.9H661.5V256.8H662.5V257.3H663.5V257.0H664.5V257.9H665.5V258.9H666.5V257.4H667.5V258.6H668.5V255.9H669.5V258.7H670.5V255.7H671.5V255.7H672.5V257.6H673.5V257.2H674.5V256.0H675.5V257.1H676.5V257.7H677.5V258.0H678.5V254.8H679.5V257.9H680.5V254.6H681.5V256.0H682.5V253.9H683.5V255.8H684.5V256.0H685.5V257.7H686.5V256.9H687.5V255.6H688.5V257.9H689.5V257.0H690.5V255.5H691.5V257.3H692.5V256.0H693.5V257.5H694.5V256.6H695.5V257.0H696.5V255.8H697.5V257.7H698.5V257.9H699.5V257.0H700.5V257.3H701.5V257.5H702.5V257.5H703.5V255.6H704.5V257.8H705.5V257.3H706.5V256.6H707.5V256.3H708.5V255.4H709.5V255.8H710.5V258.5H711.5V256.3H712.5V257.0H713.5V255.1H714.5V254.2H715.5V256.9H716.5V256.5H717.5V258.3H718.5V257.9H719.5V255.5H720.5V257.3H721.5V258.8H722.5V257.1H723.5V257.5H724.5V258.0H725.5V258.4H726.5V257.8H727.5V256.6H728.5V255.0H729.5V257.8H730.5V255.7H731.5V258.2H732.5V256.9H733.5V258.8H734.5V257.9H735.5V258.4H736.5V255.6H737.5V255.4H738.5V255.7H739.5V256.9H740.5V257.0H741.5V255.6H742.5V257.9H743.5V257.2H744.5V257.9H745.5V255.8H746.5V258.0H747.5V258.0H748.5V256.5H749.5V257.5H750.5V256.9H751.5V256.2H752.5V254.9H753.5V256.5H754.5V256.6H755.5V255.8H756.5V256.2H757.5V255.8H758.5V256.0H759.5V257.0H760.5V257.2H761.5V256.7H762.5V257.5H763.5V257.9H764.5V257.2H765.5V257.8H766.5V257.5H767.5V256.4H768.5V258.3H769.5V257.8H770.5V258.3H771.5V257.5H772.5V257.9H773.5V254.8H774.5V257.4H775.5V256.9H776.5V257.6H777.5V258.2H778.5V256.4H779.5V258.4H780.5V258.5H781.5V258.7H782.5V257.9H783.5V259.1H784.5V259.1H785.5V257.5H786.5V256.3H787.5V256.9H788.5V258.6H789.5V258.4H790.5V258.8H791.5V259.0H792.5V259.5H793.5V258.6H794.5V259.3H795.5V258.0H796.5V259.1H797.5V258.9H798.5V256.8H799.5V258.9H800.5V259.5H801.5V259.3H802.5V258.8H803.5V257.1H804.5V258.6H805.5V258.0H806.5V258.1H807.5V256.7H808.5V257.7H809.5V256.8H810.5V257.9H811.5V258.4H812.5V257.7H813.5V256.5H814.5V259.6H815.5V256.7H816.5V256.5H817.5V258.1H818.5V257.3H819.5V258.4H820.5V257.2H821.5V259.1H822.5V259.2H823.5V255.8H824.5V255.4H825.5V258.4H826.5V258.4H827.5V256.3H828.5V258.6H829.5V258.4H830.5V257.7H831.5V258.4H832.5V257.8H833.5V259.1H834.5V259.0H835.5V256.3H836.5V257.2H837.5V258.1H838.5V258.6H839.5V257.1H840.5V256.7H841.5V257.9H842.5V259.2H843.5V255.5H844.5V259.2H845.5V257.3H846.5V257.2H847.5V256.1H848.5V257.4H849.5V258.2H850.5V258.1H851.5V257.7H852.5V257.7H853.5V258.5H854.5V257.7H855.5V258.0H856.5V259.3H857.5V256.5H858.5V257.1H859.5V257.5H860.5V257.0H861.5V258.2H862.5V258.0H863.5V257.9H864.5V258.8H865.5V257.7H866.5V256.5H867.5V257.5H868.5V257.8H869.5V258.6H870.5V258.2H871.5V258.0H872.5V257.0H873.5V257.8H874.5V254.7H875.5V257.4H876.5V257.8H877.5V256.4H878.5V258.3H879.5V255.8H880.5V257.3H881.5V257.3H882.5V256.6H883.5V257.0H884.5V256.6H885.5V257.3H886.5V256.2H887.5V257.2H888.5V257.8H889.5V257.7H890.5V257.1H891.5V256.9H892.5V258.3H893.5V256.7H894.5V255.3H895.5V256.1H896.5V256.6H897.5V257.9H898.5V256.4H899.5V257.8H900.5V258.0H901.5V258.3H902.5V258.9H903.5V257.5H904.5V259.7H905.5V258.3H906.5V256.9H907.5V258.4H908.5V258.3H909.5V259.6H910.5V259.6H911.5V253.0H912.5V257.5H913.5V257.0H914.5V258.3H915.5V256.2H916.5V259.2H917.5V257.7H918.5V256.5H919.5V258.6H920.5V258.2H921.5V257.5H922.5V258.4H923.5V257.8H924.5V257.6H925.5V257.1H926.5V257.8H927.5V257.9H928.5V258.4H929.5V256.9H930.5V257.9H931.5V257.2H932.5V257.6H933.5V255.2H934.5V258.4H935.5V258.7H936.5V255.2H937.5V258.2H938.5V258.0H939.5V257.2H940.5V258.4H941.5V258.5H942.5V256.0H943.5V258.8H944.5V258.6H945.5V257.9H946.5V257.8H947.5V257.5H948.5V255.9H949.5V257.7H950.5V254.4H951.5V253.5H952.5V257.5H953.5V258.2H954.5V258.1H955.5V258.6H956.5V257.6H957.5V258.7H958.5V255.9H959.5V259.5H960.5V257.2H961.5V255.9H962.5V259.5H963.5V260.0H964.5V259.6H965.5V259.1H966.5V260.0H967.5V258.8H968.5V258.3H969.5V256.8H970.5V258.9H971.5V256.4H972.5V259.2H973.5V258.0H974.5V258.3H975.5V259.0H976.5V257.5H977.5V258.6H978.5V258.4H979.5V258.7H980.5V257.8H981.5V256.9H982.5V257.3H983V269.6V269.6H982.5V269.8H981.5V269.6H980.5V268.7H979.5V269.1H978.5V268.7H977.5V269.1H976.5V268.7H975.5V268.1H974.5V268.9H973.5V272.1H972.5V269.7H971.5V269.5H970.5V269.7H969.5V271.6H968.5V270.6H967.5V271.4H966.5V269.1H965.5V271.6H964.5V272.9H963.5V272.2H962.5V270.9H961.5V272.0H960.5V272.4H959.5V270.5H958.5V271.5H957.5V271.1H956.5V271.4H955.5V271.9H954.5V269.3H953.5V270.4H952.5V268.9H951.5V271.0H950.5V269.1H949.5V268.1H948.5V270.2H947.5V268.9H946.5V268.5H945.5V268.6H944.5V268.9H943.5V269.3H942.5V270.6H941.5V268.1H940.5V269.0H939.5V271.4H938.5V269.3H937.5V269.0H936.5V270.6H935.5V267.6H934.5V269.5H933.5V271.2H932.5V269.6H931.5V269.7H930.5V269.5H929.5V269.7H928.5V269.3H927.5V268.4H926.5V268.9H925.5V267.5H924.5V268.4H923.5V269.3H922.5V268.3H921.5V270.4H920.5V269.8H919.5V268.6H918.5V270.4H917.5V269.9H916.5V271.4H915.5V272.3H914.5V269.8H913.5V272.1H912.5V269.5H911.5V271.0H910.5V271.8H909.5V272.8H908.5V270.4H907.5V269.0H906.5V269.7H905.5V270.4H904.5V270.4H903.5V269.3H902.5V269.8H901.5V269.4H900.5V269.1H899.5V271.7H898.5V269.7H897.5V269.0H896.5V271.8H895.5V269.2H894.5V271.8H893.5V269.8H892.5V269.0H891.5V269.4H890.5V271.1H889.5V269.8H888.5V269.4H887.5V268.9H886.5V269.6H885.5V267.9H884.5V269.4H883.5V269.8H882.5V267.8H881.5V269.2H880.5V268.9H879.5V268.1H878.5V269.4H877.5V269.3H876.5V267.5H875.5V270.7H874.5V267.4H873.5V270.2H872.5V269.2H871.5V268.8H870.5V268.9H869.5V270.5H868.5V269.9H867.5V270.2H866.5V269.2H865.5V270.8H864.5V269.6H863.5V269.9H862.5V271.1H861.5V271.3H860.5V268.6H859.5V272.0H858.5V269.2H857.5V270.8H856.5V269.8H855.5V269.7H854.5V270.9H853.5V269.2H852.5V269.8H851.5V269.7H850.5V270.7H849.5V268.1H848.5V272.3H847.5V268.9H846.5V269.7H845.5V268.0H844.5V269.5H843.5V270.6H842.5V270.4H841.5V270.4H840.5V269.0H839.5V268.2H838.5V269.6H837.5V269.6H836.5V271.3H835.5V270.7H834.5V270.9H833.5V271.4H832.5V270.2H831.5V269.9H830.5V271.7H829.5V272.0H828.5V268.7H827.5V269.5H826.5V269.5H825.5V270.4H824.5V268.6H823.5V268.8H822.5V269.5H821.5V270.5H820.5V269.2H819.5V269.1H818.5V271.2H817.5V269.8H816.5V270.1H815.5V271.2H814.5V271.1H813.5V269.7H812.5V270.2H811.5V270.0H810.5V270.1H809.5V271.0H808.5V270.1H807.5V270.8H806.5V270.5H805.5V269.8H804.5V269.6H803.5V270.5H802.5V272.1H801.5V270.2H800.5V272.1H799.5V270.5H798.5V270.3H797.5V271.0H796.5V270.2H795.5V271.2H794.5V270.0H793.5V269.9H792.5V270.4H791.5V269.4H790.5V270.6H789.5V269.6H788.5V270.6H787.5V270.5H786.5V272.1H785.5V269.2H784.5V271.4H783.5V272.2H782.5V270.8H781.5V273.2H780.5V270.3H779.5V269.5H778.5V268.7H777.5V269.3H776.5V268.3H775.5V269.4H774.5V268.8H773.5V267.5H772.5V268.6H771.5V267.9H770.5V267.7H769.5V268.0H768.5V268.2H767.5V269.1H766.5V268.6H765.5V269.6H764.5V268.2H763.5V270.7H762.5V267.5H761.5V268.6H760.5V267.6H759.5V269.4H758.5V271.3H757.5V270.4H756.5V267.9H755.5V268.1H754.5V269.9H753.5V268.2H752.5V267.9H751.5V268.6H750.5V267.7H749.5V268.1H748.5V269.4H747.5V268.4H746.5V269.1H745.5V268.7H744.5V268.2H743.5V268.6H742.5V268.9H741.5V270.3H740.5V268.8H739.5V268.2H738.5V270.8H737.5V269.0H736.5V271.6H735.5V268.1H734.5V270.4H733.5V268.9H732.5V268.7H731.5V268.3H730.5V268.3H729.5V267.7H728.5V268.5H727.5V268.6H726.5V269.2H725.5V270.3H724.5V268.6H723.5V270.3H722.5V269.7H721.5V269.0H720.5V268.3H719.5V267.9H718.5V270.4H717.5V269.7H716.5V268.6H715.5V267.8H714.5V267.0H713.5V269.2H712.5V268.8H711.5V269.8H710.5V267.3H709.5V267.8H708.5V268.1H707.5V268.1H706.5V267.4H705.5V269.4H704.5V268.4H703.5V269.2H702.5V269.8H701.5V269.1H700.5V268.2H699.5V268.9H698.5V268.0H697.5V267.8H696.5V270.2H695.5V270.3H694.5V270.7H693.5V270.8H692.5V269.9H691.5V269.5H690.5V269.5H689.5V269.5H688.5V271.8H687.5V270.6H686.5V269.5H685.5V269.7H684.5V268.2H683.5V267.7H682.5V267.6H681.5V267.1H680.5V269.0H679.5V268.9H678.5V267.1H677.5V268.3H676.5V268.3H675.5V268.7H674.5V269.1H673.5V267.9H672.5V269.3H671.5V268.3H670.5V270.6H669.5V268.5H668.5V269.6H667.5V268.9H666.5V269.7H665.5V269.6H664.5V268.7H663.5V269.8H662.5V269.2H661.5V269.9H660.5V268.8H659.5V269.3H658.5V269.5H657.5V270.0H656.5V269.8H655.5V268.9H654.5V269.2H653.5V269.8H652.5V271.5H651.5V273.0H650.5V271.3H649.5V270.6H648.5V268.6H647.5V269.6H646.5V269.3H645.5V272.2H644.5V270.2H643.5V270.5H642.5V272.8H641.5V270.7H640.5V270.8H639.5V270.0H638.5V270.5H637.5V270.8H636.5V271.0H635.5V269.5H634.5V268.3H633.5V269.4H632.5V271.8H631.5V269.8H630.5V270.0H629.5V269.5H628.5V269.3H627.5V268.2H626.5V270.4H625.5V270.2H624.5V271.1H623.5V270.3H622.5V269.8H621.5V269.6H620.5V270.4H619.5V270.7H618.5V270.6H617.5V270.5H616.5V268.8H615.5V270.9H614.5V271.2H613.5V270.1H612.5V271.0H611.5V270.1H610.5V270.3H609.5V268.4H608.5V269.1H607.5V270.7H606.5V270.9H605.5V269.5H604.5V268.6H603.5V269.8H602.5V270.8H601.5V270.4H600.5V269.9H599.5V271.2H598.5V268.5H597.5V269.6H596.5V269.9H595.5V269.8H594.5V269.7H593.5V268.6H592.5V268.1H591.5V268.2H590.5V268.1H589.5V271.1H588.5V268.9H587.5V271.1H586.5V268.8H585.5V268.9H584.5V269.7H583.5V268.9H582.5V272.4H581.5V270.8H580.5V271.2H579.5V270.6H578.5V270.1H577.5V269.6H576.5V268.8H575.5V269.5H574.5V270.0H573.5V269.1H572.5V270.6H571.5V271.4H570.5V268.7H569.5V271.4H568.5V271.5H567.5V269.4H566.5V270.8H565.5V270.6H564.5V270.6H563.5V271.5H562.5V273.4H561.5V270.0H560.5V270.4H559.5V269.9H558.5V269.7H557.5V269.7H556.5V270.4H555.5V270.4H554.5V271.2H553.5V269.8H552.5V270.1H551.5V269.9H550.5V269.4H549.5V268.0H548.5V268.4H547.5V270.1H546.5V269.1H545.5V269.1H544.5V270.6H543.5V268.7H542.5V269.2H541.5V270.0H540.5V271.8H539.5V268.8H538.5V268.3H537.5V272.1H536.5V270.4H535.5V272.1H534.5V269.8H533.5Z" fill="#B8B800" shape-rendering="crispEdges"/><path d="M533.5 260.0H534.5V259.9H535.5V260.0H536.5V258.9H537.5V259.6H538.5V259.2H539.5V259.8H540.5V260.9H541.5V259.5H542.5V260.0H543.5V260.4H544.5V259.1H545.5V259.5H546.5V258.6H547.5V259.2H548.5V259.3H549.5V259.0H550.5V260.5H551.5V260.3H552.5V259.6H553.5V259.7H554.5V259.6H555.5V259.2H556.5V259.0H557.5V259.6H558.5V260.3H559.5V260.9H560.5V259.7H561.5V260.5H562.5V260.2H563.5V259.8H564.5V260.8H565.5V260.7H566.5V260.5H567.5V260.4H568.5V259.7H569.5V260.9H570.5V260.7H571.5V259.5H572.5V260.4H573.5V259.5H574.5V259.2H575.5V259.8H576.5V260.5H577.5V260.4H578.5V260.1H579.5V260.4H580.5V260.4H581.5V260.7H582.5V260.8H583.5V260.0H584.5V259.5H585.5V259.5H586.5V259.1H587.5V259.3H588.5V259.2H589.5V259.7H590.5V259.3H591.5V259.1H592.5V258.9H593.5V259.4H594.5V258.5H595.5V260.1H596.5V259.3H597.5V259.9H598.5V259.3H599.5V258.8H600.5V259.6H601.5V259.1H602.5V259.6H603.5V259.8H604.5V260.2H605.5V260.2H606.5V260.0H607.5V259.8H608.5V259.9H609.5V259.4H610.5V259.2H611.5V258.9H612.5V259.5H613.5V259.4H614.5V259.3H615.5V260.1H616.5V260.1H617.5V259.4H618.5V259.2H619.5V258.7H620.5V259.5H621.5V258.7H622.5V259.0H623.5V259.6H624.5V259.7H625.5V259.1H626.5V259.4H627.5V259.5H628.5V258.8H629.5V259.8H630.5V260.6H631.5V259.5H632.5V260.6H633.5V259.7H634.5V259.7H635.5V259.5H636.5V259.8H637.5V259.7H638.5V259.6H639.5V260.7H640.5V260.3H641.5V259.4H642.5V260.5H643.5V259.6H644.5V260.0H645.5V259.2H646.5V259.3H647.5V259.0H648.5V260.0H649.5V260.3H650.5V260.0H651.5V259.2H652.5V260.4H653.5V260.2H654.5V260.1H655.5V259.3H656.5V259.2H657.5V259.9H658.5V260.1H659.5V260.6H660.5V259.5H661.5V258.9H662.5V258.4H663.5V258.8H664.5V259.5H665.5V259.7H666.5V258.7H667.5V259.5H668.5V258.4H669.5V259.4H670.5V258.2H671.5V259.1H672.5V258.6H673.5V258.3H674.5V259.0H675.5V258.7H676.5V259.0H677.5V259.3H678.5V257.9H679.5V259.2H680.5V258.4H681.5V257.7H682.5V258.6H683.5V258.6H684.5V259.2H685.5V259.8H686.5V258.8H687.5V258.8H688.5V259.1H689.5V259.4H690.5V259.4H691.5V259.5H692.5V259.0H693.5V258.4H694.5V259.1H695.5V258.4H696.5V258.6H697.5V258.3H698.5V258.7H699.5V258.4H700.5V259.0H701.5V258.1H702.5V259.5H703.5V259.0H704.5V258.7H705.5V258.1H706.5V258.1H707.5V258.3H708.5V257.5H709.5V257.7H710.5V259.3H711.5V258.9H712.5V257.9H713.5V258.2H714.5V258.1H715.5V258.0H716.5V259.1H717.5V259.0H718.5V259.4H719.5V259.2H720.5V257.9H721.5V259.5H722.5V259.0H723.5V259.6H724.5V259.6H725.5V259.3H726.5V258.5H727.5V258.7H728.5V258.5H729.5V258.5H730.5V258.9H731.5V259.1H732.5V258.5H733.5V259.6H734.5V259.4H735.5V259.4H736.5V259.0H737.5V257.9H738.5V258.6H739.5V258.3H740.5V258.5H741.5V258.9H742.5V258.5H743.5V258.5H744.5V258.6H745.5V258.9H746.5V258.8H747.5V258.7H748.5V258.6H749.5V258.7H750.5V257.7H751.5V258.1H752.5V258.5H753.5V258.3H754.5V259.3H755.5V258.5H756.5V258.1H757.5V257.8H758.5V258.4H759.5V257.8H760.5V257.8H761.5V257.4H762.5V258.8H763.5V258.8H764.5V258.3H765.5V259.1H766.5V258.4H767.5V259.1H768.5V259.1H769.5V259.1H770.5V259.0H771.5V258.3H772.5V259.0H773.5V258.1H774.5V258.5H775.5V259.3H776.5V260.1H777.5V260.2H778.5V259.0H779.5V259.9H780.5V260.3H781.5V260.5H782.5V260.0H783.5V259.9H784.5V260.8H785.5V259.5H786.5V259.6H787.5V259.9H788.5V260.2H789.5V261.1H790.5V259.7H791.5V261.1H792.5V260.2H793.5V260.8H794.5V260.0H795.5V259.8H796.5V261.0H797.5V260.2H798.5V260.2H799.5V260.5H800.5V260.9H801.5V260.9H802.5V260.1H803.5V260.7H804.5V259.3H805.5V260.5H806.5V260.2H807.5V260.0H808.5V260.1H809.5V259.1H810.5V259.9H811.5V259.9H812.5V259.7H813.5V259.2H814.5V260.2H815.5V260.0H816.5V259.6H817.5V259.0H818.5V260.1H819.5V260.2H820.5V260.4H821.5V260.5H822.5V260.1H823.5V259.3H824.5V258.9H825.5V259.3H826.5V259.1H827.5V258.9H828.5V259.8H829.5V260.2H830.5V260.1H831.5V260.0H832.5V260.3H833.5V260.4H834.5V260.2H835.5V259.4H836.5V258.6H837.5V259.8H838.5V259.5H839.5V259.4H840.5V258.6H841.5V259.4H842.5V260.0H843.5V259.7H844.5V259.8H845.5V259.2H846.5V259.2H847.5V259.0H848.5V259.3H849.5V260.3H850.5V259.9H851.5V259.4H852.5V260.0H853.5V259.1H854.5V259.4H855.5V260.1H856.5V260.3H857.5V259.4H858.5V260.0H859.5V259.8H860.5V259.4H861.5V259.8H862.5V259.5H863.5V259.8H864.5V259.6H865.5V260.1H866.5V260.0H867.5V259.7H868.5V259.7H869.5V259.6H870.5V259.6H871.5V259.0H872.5V259.1H873.5V258.7H874.5V258.5H875.5V259.1H876.5V259.1H877.5V258.1H878.5V259.2H879.5V259.3H880.5V258.1H881.5V258.1H882.5V258.8H883.5V257.8H884.5V258.4H885.5V258.5H886.5V259.1H887.5V259.1H888.5V259.9H889.5V258.4H890.5V258.6H891.5V259.3H892.5V259.3H893.5V258.7H894.5V258.9H895.5V259.9H896.5V259.3H897.5V259.1H898.5V259.3H899.5V259.2H900.5V259.2H901.5V260.0H902.5V260.3H903.5V259.3H904.5V260.3H905.5V259.1H906.5V259.2H907.5V259.8H908.5V259.7H909.5V260.5H910.5V260.6H911.5V259.4H912.5V259.7H913.5V259.2H914.5V260.0H915.5V259.1H916.5V260.0H917.5V259.7H918.5V258.9H919.5V259.4H920.5V258.9H921.5V259.1H922.5V259.3H923.5V258.5H924.5V258.6H925.5V259.2H926.5V258.7H927.5V260.3H928.5V259.5H929.5V258.9H930.5V259.4H931.5V258.3H932.5V259.4H933.5V258.9H934.5V259.6H935.5V259.4H936.5V258.7H937.5V259.5H938.5V259.6H939.5V259.8H940.5V259.8H941.5V260.2H942.5V259.0H943.5V259.6H944.5V259.3H945.5V259.0H946.5V258.5H947.5V258.3H948.5V258.6H949.5V259.4H950.5V258.9H951.5V258.5H952.5V259.0H953.5V258.9H954.5V260.1H955.5V259.8H956.5V259.6H957.5V259.4H958.5V259.8H959.5V260.1H960.5V260.2H961.5V260.1H962.5V260.8H963.5V260.9H964.5V260.9H965.5V260.7H966.5V260.6H967.5V260.7H968.5V260.4H969.5V260.4H970.5V260.2H971.5V259.1H972.5V259.8H973.5V259.0H974.5V259.2H975.5V259.9H976.5V259.3H977.5V260.1H978.5V260.1H979.5V259.7H980.5V260.2H981.5V259.2H982.5V259.3H983V268.2V268.2H982.5V269.0H981.5V268.4H980.5V267.9H979.5V268.0H978.5V268.0H977.5V267.2H976.5V267.8H975.5V267.3H974.5V267.5H973.5V268.3H972.5V268.4H971.5V268.6H970.5V269.0H969.5V269.1H968.5V269.0H967.5V269.2H966.5V268.5H965.5V269.4H964.5V268.8H963.5V268.5H962.5V269.7H961.5V269.7H960.5V269.8H959.5V268.2H958.5V268.1H957.5V268.2H956.5V268.0H955.5V268.8H954.5V268.4H953.5V267.7H952.5V267.3H951.5V267.9H950.5V267.3H949.5V267.0H948.5V268.0H947.5V267.8H946.5V266.9H945.5V267.2H944.5V267.4H943.5V267.1H942.5V268.1H941.5V267.3H940.5V268.3H939.5V268.6H938.5V267.2H937.5V266.9H936.5V267.8H935.5V266.9H934.5V267.7H933.5V267.8H932.5V267.8H931.5V268.3H930.5V267.8H929.5V268.2H928.5V268.3H927.5V267.7H926.5V268.2H925.5V266.7H924.5V267.1H923.5V267.7H922.5V266.9H921.5V267.8H920.5V267.8H919.5V267.8H918.5V267.7H917.5V268.6H916.5V268.9H915.5V269.0H914.5V268.7H913.5V269.3H912.5V268.0H911.5V268.6H910.5V268.1H909.5V268.8H908.5V267.9H907.5V267.9H906.5V267.5H905.5V268.6H904.5V267.6H903.5V267.8H902.5V268.4H901.5V268.1H900.5V267.9H899.5V268.2H898.5V268.1H897.5V268.2H896.5V268.5H895.5V267.6H894.5V268.2H893.5V267.4H892.5V268.0H891.5V267.9H890.5V267.5H889.5V268.3H888.5V267.4H887.5V266.6H886.5V267.8H885.5V266.9H884.5V267.5H883.5V267.4H882.5V267.0H881.5V267.8H880.5V267.5H879.5V266.8H878.5V267.4H877.5V267.4H876.5V266.9H875.5V267.3H874.5V266.8H873.5V267.4H872.5V268.4H871.5V268.0H870.5V267.3H869.5V267.5H868.5V268.6H867.5V268.2H866.5V268.5H865.5V268.4H864.5V267.5H863.5V268.6H862.5V267.3H861.5V268.8H860.5V267.6H859.5V268.7H858.5V267.3H857.5V268.2H856.5V267.8H855.5V267.7H854.5V268.6H853.5V268.2H852.5V267.8H851.5V268.0H850.5V268.5H849.5V267.5H848.5V269.0H847.5V267.7H846.5V268.7H845.5V267.3H844.5V267.9H843.5V268.5H842.5V268.0H841.5V268.1H840.5V268.0H839.5V267.3H838.5V267.4H837.5V267.1H836.5V268.2H835.5V268.5H834.5V268.2H833.5V268.8H832.5V268.2H831.5V268.1H830.5V268.6H829.5V267.6H828.5V267.4H827.5V267.8H826.5V267.3H825.5V267.7H824.5V267.7H823.5V267.8H822.5V267.8H821.5V268.2H820.5V268.1H819.5V267.8H818.5V268.6H817.5V268.5H816.5V267.9H815.5V268.2H814.5V268.7H813.5V268.7H812.5V267.8H811.5V268.7H810.5V268.3H809.5V269.2H808.5V268.4H807.5V269.5H806.5V268.9H805.5V269.1H804.5V268.0H803.5V269.5H802.5V268.9H801.5V268.7H800.5V269.8H799.5V269.1H798.5V269.2H797.5V269.3H796.5V269.4H795.5V268.9H794.5V269.3H793.5V268.7H792.5V269.0H791.5V268.1H790.5V268.4H789.5V268.8H788.5V269.0H787.5V269.4H786.5V268.8H785.5V268.4H784.5V268.6H783.5V268.7H782.5V268.6H781.5V268.5H780.5V268.4H779.5V267.6H778.5V267.8H777.5V267.8H776.5V267.3H775.5V267.2H774.5V267.0H773.5V266.5H772.5V267.8H771.5V266.5H770.5V266.6H769.5V266.7H768.5V266.6H767.5V267.7H766.5V267.8H765.5V268.1H764.5V267.4H763.5V267.1H762.5V266.8H761.5V267.0H760.5V267.0H759.5V267.5H758.5V266.4H757.5V267.5H756.5V266.4H755.5V266.8H754.5V266.4H753.5V266.1H752.5V265.9H751.5V267.1H750.5V265.8H749.5V266.6H748.5V267.7H747.5V267.1H746.5V267.8H745.5V267.5H744.5V266.6H743.5V267.1H742.5V266.8H741.5V267.5H740.5V266.6H739.5V267.6H738.5V266.7H737.5V267.4H736.5V266.9H735.5V267.3H734.5V267.2H733.5V268.2H732.5V267.8H731.5V267.4H730.5V266.8H729.5V267.0H728.5V267.0H727.5V267.2H726.5V266.9H725.5V267.4H724.5V267.4H723.5V267.9H722.5V267.4H721.5V266.8H720.5V266.8H719.5V267.0H718.5V267.8H717.5V268.0H716.5V267.2H715.5V266.4H714.5V265.9H713.5V266.3H712.5V267.4H711.5V267.3H710.5V266.6H709.5V267.1H708.5V266.5H707.5V266.8H706.5V266.6H705.5V267.6H704.5V267.2H703.5V266.9H702.5V267.3H701.5V267.5H700.5V266.6H699.5V266.7H698.5V266.3H697.5V266.8H696.5V267.6H695.5V267.1H694.5V266.8H693.5V267.9H692.5V268.0H691.5V268.7H690.5V268.3H689.5V268.5H688.5V268.5H687.5V267.8H686.5V267.5H685.5V267.5H684.5V266.6H683.5V266.7H682.5V266.9H681.5V266.4H680.5V266.7H679.5V266.9H678.5V266.4H677.5V267.0H676.5V266.5H675.5V267.1H674.5V267.9H673.5V267.0H672.5V267.8H671.5V267.3H670.5V268.2H669.5V267.5H668.5V267.3H667.5V267.8H666.5V267.8H665.5V267.7H664.5V267.7H663.5V267.8H662.5V267.7H661.5V268.3H660.5V267.7H659.5V268.2H658.5V268.4H657.5V269.0H656.5V267.8H655.5V267.8H654.5V268.1H653.5V268.1H652.5V268.8H651.5V267.6H650.5V269.0H649.5V267.9H648.5V267.8H647.5V267.6H646.5V268.6H645.5V267.8H644.5V268.5H643.5V268.7H642.5V268.7H641.5V269.3H640.5V269.1H639.5V269.2H638.5V268.1H637.5V268.0H636.5V268.3H635.5V268.6H634.5V267.7H633.5V267.9H632.5V269.3H631.5V268.1H630.5V268.5H629.5V268.7H628.5V267.7H627.5V267.1H626.5V268.1H625.5V267.6H624.5V268.3H623.5V267.4H622.5V268.5H621.5V268.1H620.5V268.6H619.5V267.1H618.5V268.5H617.5V267.7H616.5V267.9H615.5V268.4H614.5V268.3H613.5V268.6H612.5V267.9H611.5V268.6H610.5V268.1H609.5V267.7H608.5V268.3H607.5V268.9H606.5V268.4H605.5V268.3H604.5V267.9H603.5V268.5H602.5V268.6H601.5V267.3H600.5V268.2H599.5V267.9H598.5V267.7H597.5V267.5H596.5V268.6H595.5V268.2H594.5V267.1H593.5V267.0H592.5V267.4H591.5V267.2H590.5V267.0H589.5V267.7H588.5V267.7H587.5V268.9H586.5V268.0H585.5V267.9H584.5V268.8H583.5V268.2H582.5V269.0H581.5V269.2H580.5V268.6H579.5V268.4H578.5V269.3H577.5V268.8H576.5V267.8H575.5V267.7H574.5V267.9H573.5V268.4H572.5V268.5H571.5V268.3H570.5V268.1H569.5V268.8H568.5V268.9H567.5V268.6H566.5V269.2H565.5V268.3H564.5V268.9H563.5V269.6H562.5V269.1H561.5V269.2H560.5V268.0H559.5V268.4H558.5V268.7H557.5V268.1H556.5V268.0H555.5V267.7H554.5V268.1H553.5V268.5H552.5V268.9H551.5V268.3H550.5V268.0H549.5V267.1H548.5V267.4H547.5V267.7H546.5V267.4H545.5V267.3H544.5V267.6H543.5V267.9H542.5V268.4H541.5V269.1H540.5V268.1H539.5V267.4H538.5V267.2H537.5V268.4H536.5V267.9H535.5V267.4H534.5V268.6H533.5Z" fill="#FFFF00" shape-rendering="crispEdges"/><path d="M445.5 155.3H446.5V156.2H447.5V154.0H448.5V156.0H449.5V155.1H450.5V157.7H451.5V155.6H452.5V155.7H453.5V157.6H454.5V155.6H455.5V155.1H456.5V154.7H457.5V156.1H458.5V156.3H459.5V155.0H460.5V156.6H461.5V156.6H462.5V155.1H463.5V156.9H464.5V158.2H465.5V156.9H466.5V155.9H467.5V157.5H468.5V157.4H469.5V156.7H470.5V157.2H471.5V156.6H472.5V156.8H473.5V157.6H474.5V156.5H475.5V154.5H476.5V156.7H477.5V156.4H478.5V157.5H479.5V157.0H480.5V156.9H481.5V155.5H482.5V156.1H483.5V156.0H484.5V156.1H485.5V156.3H486.5V152.5H487.5V156.1H488.5V154.5H489.5V153.9H490.5V156.9H491.5V157.2H492.5V156.4H493.5V154.4H494.5V154.9H495.5V156.0H496.5V155.0H497.5V155.1H498.5V156.5H499.5V155.7H500.5V157.2H501.5V156.3H502.5V156.4H503.5V156.5H504.5V155.0H505.5V156.8H506.5V159.0H507.5V157.8H508.5V154.1H509.5V156.4H510.5V156.6H511.5V157.5H512.5V157.5H513.5V156.2H514.5V156.3H515.5V157.2H516.5V158.0H517.5V156.5H518.5V153.9H519.5V156.4H520.5V157.5H521.5V155.9H522.5V157.0H523.5V156.7H524.5V157.8H525.5V156.4H526.5V157.3H527.5V157.4H528.5V155.2H529.5V156.7H530.5V157.1H531.5V156.3H532.5V156.8H533.5V168.2V168.2H532.5V167.1H531.5V169.2H530.5V168.4H529.5V169.0H528.5V168.2H527.5V167.3H526.5V168.0H525.5V168.4H524.5V169.3H523.5V168.6H522.5V168.6H521.5V167.2H520.5V169.5H519.5V169.0H518.5V168.3H517.5V170.2H516.5V168.7H515.5V168.0H514.5V168.7H513.5V167.9H512.5V168.0H511.5V169.8H510.5V170.3H509.5V169.8H508.5V167.5H507.5V168.7H506.5V169.0H505.5V167.4H504.5V171.7H503.5V167.3H502.5V168.3H501.5V169.4H500.5V169.6H499.5V167.0H498.5V166.1H497.5V168.0H496.5V166.6H495.5V168.1H494.5V166.7H493.5V168.7H492.5V167.4H491.5V167.1H490.5V166.6H489.5V167.6H488.5V166.3H487.5V166.1H486.5V167.2H485.5V168.0H484.5V167.2H483.5V167.6H482.5V168.3H481.5V168.4H480.5V167.4H479.5V168.3H478.5V169.1H477.5V168.5H476.5V168.3H475.5V168.5H474.5V169.6H473.5V170.5H472.5V168.0H471.5V168.6H470.5V169.4H469.5V167.6H468.5V168.5H467.5V170.1H466.5V168.3H465.5V167.1H464.5V167.7H463.5V167.4H462.5V167.8H461.5V167.8H460.5V168.0H459.5V167.9H458.5V167.6H457.5V167.8H456.5V167.8H455.5V166.6H454.5V169.2H453.5V168.6H452.5V167.1H451.5V166.9H450.5V170.2H449.5V167.7H448.5V168.8H447.5V166.8H446.5V168.9H445.5Z" fill="#B8B800" shape-rendering="crispEdges"/><path d="M445.5 157.4H446.5V157.3H447.5V157.7H448.5V157.5H449.5V157.9H450.5V158.6H451.5V157.5H452.5V157.7H453.5V158.9H454.5V157.8H455.5V158.9H456.5V158.0H457.5V157.2H458.5V157.5H459.5V157.7H460.5V157.9H461.5V158.2H462.5V158.2H463.5V158.7H464.5V158.9H465.5V158.3H466.5V157.7H467.5V159.2H468.5V158.5H469.5V158.0H470.5V158.4H471.5V158.8H472.5V159.1H473.5V158.5H474.5V158.6H475.5V159.3H476.5V158.7H477.5V158.4H478.5V158.5H479.5V158.2H480.5V157.5H481.5V157.0H482.5V157.2H483.5V157.8H484.5V157.0H485.5V157.5H486.5V156.8H487.5V157.5H488.5V157.7H489.5V156.7H490.5V157.6H491.5V157.9H492.5V157.9H493.5V156.9H494.5V157.8H495.5V158.2H496.5V157.6H497.5V157.1H498.5V157.6H499.5V157.9H500.5V158.3H501.5V158.4H502.5V158.2H503.5V158.4H504.5V158.0H505.5V158.2H506.5V159.7H507.5V158.6H508.5V158.8H509.5V159.2H510.5V158.4H511.5V158.8H512.5V158.2H513.5V157.6H514.5V157.8H515.5V158.7H516.5V158.9H517.5V159.4H518.5V158.1H519.5V158.8H520.5V159.0H521.5V158.0H522.5V158.1H523.5V159.2H524.5V159.2H525.5V158.2H526.5V159.5H527.5V159.5H528.5V158.3H529.5V158.5H530.5V157.7H531.5V158.6H532.5V157.6H533.5V166.3V166.3H532.5V165.9H531.5V166.4H530.5V166.6H529.5V167.7H528.5V167.0H527.5V166.6H526.5V166.7H525.5V166.9H524.5V167.5H523.5V167.6H522.5V167.5H521.5V166.6H520.5V167.1H519.5V166.5H518.5V167.3H517.5V167.3H516.5V167.7H515.5V166.3H514.5V166.1H513.5V166.7H512.5V166.7H511.5V167.6H510.5V167.4H509.5V167.2H508.5V166.7H507.5V168.0H506.5V166.6H505.5V166.1H504.5V166.7H503.5V166.0H502.5V166.0H501.5V167.1H500.5V167.1H499.5V166.1H498.5V165.3H497.5V165.6H496.5V165.9H495.5V166.7H494.5V165.7H493.5V166.2H492.5V166.1H491.5V165.3H490.5V164.9H489.5V165.6H488.5V165.6H487.5V164.5H486.5V165.5H485.5V165.1H484.5V165.5H483.5V165.1H482.5V165.9H481.5V166.6H480.5V166.7H479.5V166.6H478.5V166.7H477.5V166.3H476.5V166.8H475.5V166.8H474.5V166.6H473.5V167.3H472.5V167.4H471.5V166.4H470.5V167.1H469.5V166.9H468.5V167.2H467.5V166.8H466.5V166.2H465.5V166.1H464.5V166.0H463.5V166.8H462.5V167.1H461.5V165.8H460.5V166.3H459.5V166.7H458.5V166.1H457.5V166.5H456.5V167.0H455.5V165.9H454.5V166.9H453.5V167.1H452.5V166.4H451.5V165.9H450.5V166.8H449.5V166.7H448.5V166.3H447.5V165.1H446.5V166.8H445.5Z" fill="#FFFF00" shape-rendering="crispEdges"/><path d="M84 457.7H85V457.8H86V457.9H87V458.5H88V457.8H89V456.8H90V458.0H91V458.2H92V457.2H93V457.8H94V458.3H95V457.0H96V458.2H97V458.2H98V458.0H99V457.7H100V458.1H101V458.0H102V458.4H103V457.4H104V457.5H105V458.2H106V458.3H107V458.4H108V457.8H109V458.2H110V457.5H111V458.0H112V457.3H113V457.7H114V457.7H115V457.5H116V458.2H117V458.1H118V458.2H119V458.0H120V457.2H121V456.6H122V457.6H123V457.9H124V457.0H125V457.5H126V457.2H127V456.9H128V457.4H129V457.6H130V458.1H131V458.0H132V457.9H133V457.6H134V457.4H135V458.4H136V457.6H137V457.5H138V458.1H139V457.3H140V458.0H141V457.8H142V457.1H143V458.1H144V457.7H145V457.8H146V458.4H147V458.2H148V457.8H149V457.3H150V458.3H151V458.0H152V457.9H153V457.7H154V458.0H155V457.8H156V458.0H157V458.0H158V458.3H159V457.9H160V458.0H161V458.4H162V457.4H163V457.7H164V457.4H165V457.8H166V458.5H167V457.4H168V458.2H169V457.4H170V457.9H171V457.2H172V458.3H173V457.6H174V457.2H175V457.6H176V457.7H177V457.8H178V457.7H179V457.4H180V457.3H181V457.4H182V457.8H183V457.7H184V457.9H185V457.8H186V458.1H187V458.1H188V457.5H189V458.3H190V458.1H191V457.9H192V457.4H193V458.5H194V458.5H195V457.5H196V457.5H197V458.1H198V457.8H199V457.6H200V457.6H201V457.5H202V457.7H203V456.2H204V457.9H205V458.3H206V457.9H207V457.6H208V458.3H209V457.2H210V457.6H211V457.0H212V457.5H213V457.6H214V458.3H215V457.8H216V458.3H217V458.1H218V458.0H219V458.2H220V458.2H221V457.5H222V457.8H223V458.2H224V457.6H225V458.1H226V458.3H227V457.8H228V457.3H229V457.9H230V458.1H231V457.2H232V457.5H233V457.1H234V457.6H235V458.3H236V458.1H237V457.8H238V458.2H239V457.5H240V457.7H241V457.0H242V457.9H243V457.6H244V457.8H245V457.2H246V457.6H247V457.4H248V458.0H249V458.3H250V458.3H251V457.4H252V457.9H253V457.5H254V457.1H255V458.4H256V458.0H257V458.4H258V458.1H259V458.4H260V457.9H261V457.2H262V458.1H263V457.8H264V457.9H265V458.0H266V458.2H267V458.1H268V457.9H269V458.5H270V458.7H271V458.5H272V458.9H273V458.0H274V457.6H275V458.2H276V457.2H277V457.6H278V458.0H279V457.7H280V457.9H281V458.0H282V458.2H283V458.1H284V457.9H285V458.5H286V458.0H287V457.7H288V458.1H289V457.7H290V458.3H291V457.3H292V458.3H293V457.2H294V458.2H295V458.0H296V457.7H297V457.2H298V458.1H299V458.1H300V458.5H301V457.3H302V458.1H303V458.0H304V458.2H305V457.8H306V457.7H307V457.2H308V457.4H309V457.5H310V457.7H311V457.4H312V458.0H313V458.4H314V457.7H315V457.1H316V457.9H317V458.0H318V457.6H319V458.1H320V457.9H321V458.2H322V457.3H323V458.5H324V458.6H325V457.9H326V458.4H327V458.2H328V458.3H329V458.1H330V457.7H331V457.2H332V458.3H333V458.1H334V457.6H335V458.4H336V457.9H337V458.4H338V458.3H339V457.4H340V458.2H341V458.1H342V458.0H343V457.2H344V458.3H345V458.0H346V458.1H347V457.8H348V457.9H349V458.0H350V457.7H351V458.3H352V458.5H353V457.8H354V457.5H355V457.2H356V457.7H357V457.7H358V458.4H359V458.4H360V457.9H361V458.5H362V457.7H363V457.6H364V458.1H365V458.5H366V458.0H367V458.4H368V458.0H369V458.4H370V458.6H371V458.0H372V458.0H373V458.2H374V458.2H375V457.3H376V457.9H377V458.0H378V457.1H379V457.2H380V458.4H381V457.5H382V457.7H383V458.1H384V457.2H385V458.4H386V457.6H387V458.0H388V458.2H389V457.7H390V457.8H391V457.9H392V458.4H393V457.8H394V458.0H395V458.4H396V457.4H397V456.9H398V458.2H399V457.2H400V458.3H401V457.6H402V458.2H403V457.3H404V457.9H405V458.2H406V458.1H407V457.6H408V457.4H409V457.8H410V457.4H411V458.3H412V457.7H413V457.5H414V457.6H415V458.0H416V457.4H417V457.6H418V458.0H419V458.0H420V457.8H421V457.2H422V457.7H423V457.6H424V457.2H425V457.7H426V457.8H427V457.4H428V457.8H429V457.7H430V457.9H431V458.3H432V457.0H433V457.2H434V457.7H435V458.0H436V457.8H437V457.8H438V458.3H439V457.8H440V457.9H441V457.7H442V458.5H443V457.9H444V458.2H445V457.9H445.5V463.9V463.9H445V464.3H444V463.9H443V463.8H442V464.5H441V464.4H440V464.0H439V464.0H438V464.6H437V464.2H436V464.2H435V464.4H434V464.0H433V464.6H432V464.6H431V464.1H430V464.7H429V464.0H428V464.3H427V464.4H426V463.6H425V464.5H424V464.8H423V464.3H422V464.4H421V463.6H420V464.3H419V464.0H418V464.3H417V463.4H416V464.5H415V464.8H414V464.0H413V464.0H412V464.2H411V464.3H410V463.6H409V464.7H408V464.0H407V464.7H406V463.8H405V464.5H404V464.0H403V464.4H402V464.3H401V464.6H400V464.9H399V464.8H398V463.9H397V463.7H396V464.1H395V464.3H394V464.1H393V464.3H392V463.9H391V463.8H390V464.1H389V463.9H388V464.5H387V463.4H386V464.0H385V464.1H384V464.3H383V463.9H382V463.7H381V464.4H380V464.3H379V463.8H378V463.8H377V464.1H376V464.1H375V463.8H374V463.8H373V464.7H372V464.3H371V463.8H370V463.8H369V464.4H368V463.9H367V463.9H366V464.5H365V464.3H364V464.0H363V464.2H362V463.5H361V465.2H360V463.8H359V463.6H358V464.1H357V464.1H356V464.5H355V464.5H354V464.4H353V464.3H352V464.4H351V464.9H350V464.5H349V464.5H348V463.9H347V464.3H346V464.4H345V463.6H344V464.3H343V464.2H342V464.3H341V464.2H340V464.4H339V464.4H338V464.6H337V464.1H336V464.0H335V465.3H334V464.3H333V463.6H332V463.8H331V464.2H330V463.7H329V463.8H328V464.0H327V463.9H326V464.0H325V464.5H324V464.1H323V464.0H322V463.5H321V464.2H320V464.1H319V463.6H318V463.7H317V464.1H316V463.8H315V463.8H314V463.4H313V464.9H312V463.9H311V464.0H310V463.8H309V463.8H308V463.9H307V464.0H306V464.3H305V464.1H304V464.0H303V464.3H302V464.4H301V464.8H300V463.5H299V464.4H298V464.5H297V464.0H296V464.2H295V464.1H294V464.1H293V463.9H292V463.8H291V465.1H290V463.9H289V464.8H288V463.8H287V463.5H286V463.6H285V464.1H284V464.9H283V464.7H282V464.2H281V464.6H280V464.2H279V464.6H278V464.1H277V464.1H276V464.2H275V464.9H274V464.0H273V464.2H272V464.2H271V464.7H270V464.0H269V463.9H268V464.8H267V464.1H266V463.8H265V464.7H264V464.4H263V465.0H262V464.2H261V464.1H260V464.5H259V464.4H258V463.7H257V465.0H256V464.0H255V465.1H254V464.2H253V463.9H252V464.1H251V463.6H250V463.6H249V464.9H248V463.9H247V464.2H246V463.8H245V463.7H244V464.2H243V463.9H242V464.4H241V463.7H240V463.7H239V464.9H238V463.9H237V463.6H236V463.9H235V464.6H234V465.0H233V464.0H232V464.9H231V464.1H230V463.9H229V463.4H228V464.5H227V464.5H226V464.1H225V463.8H224V463.6H223V463.6H222V464.0H221V464.9H220V464.0H219V464.1H218V463.7H217V464.7H216V463.4H215V464.5H214V464.4H213V464.3H212V463.5H211V463.7H210V463.3H209V464.2H208V464.0H207V464.3H206V464.1H205V464.0H204V464.3H203V463.6H202V463.9H201V464.3H200V464.3H199V464.5H198V464.1H197V464.9H196V463.9H195V464.3H194V463.7H193V464.7H192V464.4H191V463.4H190V463.7H189V464.9H188V464.3H187V463.7H186V463.9H185V464.0H184V463.6H183V464.0H182V463.8H181V464.3H180V464.2H179V463.5H178V464.5H177V463.8H176V465.1H175V464.1H174V463.9H173V464.1H172V464.5H171V463.4H170V464.4H169V464.1H168V465.1H167V464.2H166V464.6H165V463.9H164V464.7H163V464.8H162V463.9H161V464.5H160V464.2H159V464.1H158V463.5H157V464.1H156V464.1H155V463.8H154V463.8H153V463.6H152V464.7H151V464.0H150V463.7H149V464.4H148V464.1H147V464.1H146V463.4H145V464.1H144V463.6H143V464.0H142V464.3H141V464.5H140V463.9H139V464.2H138V464.2H137V464.3H136V464.0H135V463.5H134V463.6H133V463.7H132V463.6H131V463.4H130V463.8H129V463.9H128V463.7H127V463.9H126V464.4H125V463.8H124V464.5H123V464.5H122V464.2H121V464.0H120V464.0H119V463.6H118V464.7H117V464.4H116V464.0H115V464.4H114V463.5H113V464.7H112V463.8H111V464.5H110V463.6H109V463.8H108V463.9H107V464.7H106V464.2H105V464.0H104V464.0H103V464.2H102V465.0H101V464.9H100V464.0H99V464.7H98V463.7H97V464.1H96V463.7H95V464.9H94V464.9H93V463.5H92V463.3H91V463.8H90V464.4H89V464.7H88V463.6H87V464.3H86V464.5H85V463.5H84Z" fill="#B060C0" shape-rendering="crispEdges"/><path d="M84 458.2H85V458.2H86V458.7H87V458.9H88V458.4H89V458.2H90V458.7H91V458.6H92V458.4H93V459.0H94V459.0H95V458.4H96V459.1H97V458.9H98V458.5H99V459.0H100V458.7H101V458.6H102V458.8H103V458.3H104V458.3H105V458.8H106V458.9H107V458.8H108V458.4H109V458.8H110V458.4H111V458.6H112V458.2H113V458.3H114V458.3H115V458.3H116V458.7H117V458.6H118V458.5H119V458.8H120V458.4H121V458.0H122V458.1H123V458.4H124V458.1H125V458.5H126V458.2H127V458.1H128V458.4H129V458.1H130V458.6H131V458.7H132V458.4H133V458.3H134V458.8H135V458.9H136V458.4H137V458.2H138V458.4H139V458.2H140V458.8H141V458.5H142V458.1H143V458.6H144V458.5H145V458.8H146V458.8H147V458.6H148V458.4H149V458.1H150V458.7H151V458.5H152V458.7H153V458.1H154V458.6H155V458.7H156V458.8H157V458.8H158V458.8H159V458.3H160V458.6H161V458.8H162V458.4H163V458.4H164V458.2H165V458.6H166V458.9H167V458.3H168V458.9H169V458.3H170V458.6H171V458.2H172V458.7H173V458.4H174V458.8H175V459.0H176V458.6H177V458.6H178V458.4H179V458.4H180V458.8H181V458.3H182V458.3H183V458.4H184V458.5H185V458.3H186V458.8H187V458.6H188V458.2H189V458.8H190V458.7H191V458.6H192V458.3H193V458.9H194V458.9H195V458.3H196V458.7H197V458.9H198V458.5H199V458.7H200V458.2H201V458.3H202V458.7H203V458.0H204V458.8H205V458.8H206V458.6H207V458.9H208V458.8H209V458.1H210V458.1H211V458.5H212V458.1H213V458.6H214V458.7H215V458.5H216V458.9H217V459.0H218V458.7H219V458.7H220V458.8H221V458.3H222V458.6H223V458.8H224V458.5H225V458.8H226V458.7H227V458.9H228V458.0H229V458.3H230V458.6H231V458.2H232V458.1H233V458.8H234V458.3H235V458.9H236V458.9H237V458.2H238V458.7H239V458.6H240V458.1H241V458.2H242V458.8H243V458.2H244V458.7H245V458.1H246V458.0H247V458.4H248V458.5H249V458.6H250V458.8H251V458.1H252V458.6H253V458.2H254V458.2H255V458.9H256V458.6H257V458.9H258V458.7H259V458.9H260V458.6H261V458.7H262V458.5H263V458.7H264V458.8H265V458.4H266V458.8H267V458.6H268V458.6H269V459.1H270V459.1H271V459.0H272V459.3H273V459.1H274V458.5H275V458.8H276V458.3H277V458.5H278V458.6H279V458.3H280V458.3H281V458.5H282V458.7H283V458.8H284V458.6H285V459.1H286V458.7H287V458.6H288V458.9H289V458.4H290V458.8H291V458.4H292V458.7H293V458.4H294V459.0H295V458.6H296V458.9H297V458.5H298V459.0H299V458.5H300V458.9H301V458.4H302V458.9H303V458.4H304V459.0H305V458.2H306V458.8H307V458.3H308V458.4H309V458.1H310V458.5H311V458.6H312V458.8H313V458.8H314V458.2H315V458.2H316V458.4H317V458.8H318V458.9H319V458.7H320V458.7H321V458.7H322V458.6H323V458.8H324V459.0H325V458.9H326V459.0H327V459.0H328V458.9H329V458.8H330V458.6H331V458.3H332V458.7H333V458.7H334V458.6H335V458.9H336V458.6H337V458.7H338V459.0H339V458.5H340V458.7H341V458.6H342V458.9H343V458.3H344V458.7H345V458.8H346V458.7H347V458.4H348V458.4H349V458.7H350V459.1H351V458.9H352V459.0H353V458.6H354V458.7H355V458.7H356V458.8H357V458.2H358V458.8H359V458.9H360V458.5H361V458.9H362V458.5H363V458.5H364V458.8H365V459.0H366V458.7H367V458.8H368V458.9H369V458.7H370V459.0H371V458.8H372V458.9H373V458.7H374V459.0H375V458.3H376V458.6H377V458.5H378V458.4H379V458.5H380V458.8H381V458.6H382V458.5H383V458.6H384V458.1H385V458.7H386V458.1H387V458.5H388V458.7H389V458.7H390V458.6H391V458.8H392V458.9H393V458.7H394V458.9H395V458.7H396V458.3H397V458.2H398V458.7H399V458.4H400V458.8H401V458.6H402V458.9H403V458.5H404V458.7H405V458.5H406V458.8H407V458.3H408V458.3H409V458.4H410V458.9H411V458.6H412V458.4H413V458.7H414V458.5H415V458.6H416V458.5H417V458.5H418V458.4H419V458.5H420V458.4H421V458.3H422V458.6H423V458.6H424V458.3H425V458.3H426V458.3H427V458.6H428V458.6H429V458.5H430V458.5H431V458.7H432V458.5H433V458.6H434V458.7H435V459.0H436V458.6H437V458.4H438V458.8H439V458.7H440V458.9H441V458.7H442V458.9H443V458.4H444V459.0H445V459.0H445.5V463.5V463.5H445V463.1H444V463.4H443V463.3H442V463.7H441V463.2H440V463.4H439V463.6H438V463.6H437V463.8H436V463.8H435V463.8H434V463.5H433V463.9H432V463.9H431V463.7H430V463.8H429V463.7H428V463.7H427V463.5H426V463.1H425V463.5H424V463.6H423V463.5H422V463.3H421V463.2H420V463.4H419V463.1H418V463.1H417V462.8H416V463.2H415V463.6H414V463.5H413V463.4H412V463.7H411V463.4H410V463.1H409V463.6H408V463.2H407V463.3H406V463.2H405V463.6H404V463.3H403V463.6H402V463.7H401V463.7H400V463.5H399V463.1H398V463.4H397V463.1H396V463.6H395V463.2H394V463.7H393V463.2H392V463.5H391V463.4H390V463.4H389V463.1H388V463.3H387V463.0H386V463.5H385V463.0H384V463.5H383V463.1H382V463.0H381V463.7H380V463.5H379V463.4H378V463.1H377V463.7H376V463.4H375V463.3H374V463.2H373V463.7H372V463.9H371V463.2H370V463.3H369V463.7H368V463.5H367V463.4H366V463.2H365V463.7H364V463.6H363V463.4H362V463.1H361V463.9H360V463.2H359V463.0H358V463.1H357V463.3H356V463.5H355V463.8H354V463.2H353V463.4H352V463.9H351V464.0H350V463.6H349V463.8H348V463.2H347V463.2H346V463.8H345V463.2H344V463.2H343V463.6H342V463.6H341V463.3H340V463.2H339V463.6H338V463.4H337V463.1H336V463.5H335V463.8H334V463.2H333V463.2H332V463.2H331V463.5H330V463.2H329V463.3H328V463.3H327V463.3H326V463.6H325V463.2H324V463.2H323V463.4H322V463.1H321V463.6H320V463.5H319V463.2H318V463.3H317V463.4H316V463.3H315V463.4H314V463.0H313V463.7H312V463.0H311V463.4H310V463.3H309V463.2H308V463.3H307V463.4H306V463.6H305V463.2H304V463.5H303V463.8H302V463.9H301V463.9H300V463.1H299V463.4H298V463.4H297V463.5H296V463.2H295V463.7H294V463.6H293V463.4H292V463.2H291V463.7H290V463.2H289V463.7H288V463.3H287V463.1H286V463.2H285V463.4H284V463.7H283V463.7H282V463.7H281V463.7H280V463.3H279V463.9H278V463.3H277V463.1H276V463.8H275V463.6H274V463.6H273V463.4H272V463.5H271V463.9H270V463.6H269V463.4H268V463.9H267V463.2H266V463.4H265V463.8H264V463.6H263V463.1H262V463.1H261V463.7H260V463.7H259V463.9H258V463.0H257V463.2H256V463.3H255V463.7H254V463.6H253V463.1H252V463.3H251V463.0H250V463.1H249V463.4H248V463.0H247V462.9H246V463.4H245V463.2H244V463.1H243V463.4H242V463.7H241V463.1H240V463.0H239V463.2H238V463.3H237V462.9H236V462.9H235V463.3H234V463.5H233V463.5H232V463.5H231V463.6H230V463.2H229V462.9H228V463.3H227V463.6H226V463.6H225V463.2H224V463.1H223V463.1H222V463.3H221V463.4H220V463.2H219V463.6H218V463.1H217V463.5H216V463.0H215V463.3H214V463.6H213V463.4H212V463.0H211V463.2H210V462.9H209V463.1H208V463.3H207V463.0H206V463.6H205V463.5H204V463.6H203V463.0H202V463.1H201V463.3H200V463.2H199V463.6H198V463.3H197V463.4H196V463.3H195V463.3H194V463.1H193V463.3H192V463.3H191V463.0H190V463.1H189V463.4H188V463.4H187V463.2H186V463.4H185V463.6H184V463.2H183V463.2H182V463.3H181V463.6H180V463.2H179V463.0H178V463.2H177V463.2H176V463.5H175V463.1H174V463.4H173V463.3H172V463.7H171V463.0H170V463.5H169V463.5H168V463.7H167V463.5H166V463.7H165V463.2H164V463.7H163V463.4H162V463.0H161V463.5H160V463.8H159V463.2H158V463.0H157V463.1H156V463.4H155V462.9H154V462.9H153V463.3H152V463.4H151V463.0H150V462.9H149V463.7H148V463.2H147V463.1H146V463.0H145V463.6H144V463.1H143V463.6H142V463.5H141V463.3H140V463.2H139V463.6H138V463.3H137V463.3H136V463.2H135V463.0H134V463.1H133V463.2H132V463.0H131V462.9H130V463.3H129V463.4H128V463.0H127V463.0H126V463.3H125V462.9H124V463.2H123V463.5H122V463.3H121V462.9H120V463.6H119V463.0H118V463.6H117V463.2H116V463.4H115V463.4H114V462.8H113V463.6H112V463.0H111V463.1H110V463.2H109V463.3H108V463.5H107V463.7H106V463.7H105V463.4H104V463.4H103V463.8H102V463.6H101V463.8H100V463.4H99V463.5H98V463.2H97V463.2H96V463.2H95V463.6H94V463.2H93V463.0H92V462.9H91V463.5H90V463.7H89V463.7H88V463.1H87V463.5H86V463.5H85V463.1H84Z" fill="#E27DF0" shape-rendering="crispEdges"/><path d="M533.5 458.2H534.5V457.8H535.5V457.8H536.5V458.0H537.5V457.1H538.5V458.6H539.5V458.0H540.5V458.1H541.5V457.8H542.5V458.0H543.5V457.8H544.5V457.9H545.5V458.3H546.5V458.2H547.5V458.3H548.5V458.4H549.5V457.2H550.5V457.3H551.5V457.7H552.5V458.0H553.5V457.0H554.5V458.2H555.5V458.0H556.5V457.1H557.5V458.4H558.5V458.0H559.5V458.1H560.5V457.9H561.5V457.4H562.5V457.3H563.5V457.5H564.5V458.0H565.5V457.7H566.5V458.3H567.5V457.7H568.5V457.7H569.5V457.2H570.5V458.0H571.5V457.5H572.5V458.3H573.5V458.2H574.5V457.9H575.5V458.1H576.5V457.9H577.5V457.7H578.5V457.2H579.5V457.7H580.5V458.2H581.5V457.3H582.5V458.2H583.5V458.3H584.5V458.1H585.5V457.5H586.5V458.1H587.5V456.9H588.5V457.7H589.5V458.2H590.5V456.6H591.5V457.6H592.5V458.1H593.5V458.4H594.5V457.4H595.5V458.3H596.5V457.1H597.5V457.8H598.5V458.2H599.5V457.5H600.5V457.9H601.5V457.9H602.5V458.1H603.5V457.9H604.5V457.8H605.5V457.9H606.5V458.2H607.5V457.9H608.5V457.5H609.5V458.0H610.5V457.5H611.5V457.7H612.5V457.8H613.5V457.5H614.5V457.7H615.5V458.3H616.5V457.9H617.5V458.1H618.5V458.2H619.5V458.7H620.5V457.9H621.5V458.3H622.5V457.8H623.5V457.8H624.5V458.3H625.5V457.7H626.5V457.4H627.5V458.2H628.5V456.8H629.5V458.3H630.5V458.6H631.5V458.1H632.5V457.7H633.5V457.9H634.5V458.6H635.5V457.9H636.5V458.2H637.5V458.2H638.5V457.5H639.5V457.9H640.5V457.9H641.5V458.0H642.5V457.9H643.5V457.9H644.5V457.7H645.5V458.5H646.5V457.1H647.5V457.9H648.5V457.3H649.5V457.8H650.5V458.3H651.5V458.2H652.5V458.2H653.5V457.3H654.5V458.4H655.5V457.8H656.5V457.8H657.5V458.2H658.5V457.6H659.5V458.5H660.5V457.4H661.5V456.9H662.5V457.8H663.5V457.8H664.5V458.1H665.5V457.9H666.5V456.9H667.5V457.2H668.5V458.3H669.5V458.5H670.5V457.9H671.5V458.5H672.5V458.0H673.5V458.3H674.5V457.9H675.5V457.9H676.5V458.3H677.5V457.8H678.5V458.0H679.5V458.2H680.5V458.5H681.5V457.1H682.5V457.8H683.5V457.6H684.5V458.4H685.5V458.0H686.5V458.0H687.5V458.4H688.5V458.7H689.5V457.4H690.5V458.1H691.5V457.9H692.5V457.8H693.5V458.1H694.5V458.4H695.5V458.0H696.5V456.9H697.5V457.6H698.5V457.8H699.5V457.8H700.5V458.4H701.5V458.6H702.5V458.4H703.5V458.3H704.5V456.7H705.5V457.6H706.5V457.9H707.5V457.7H708.5V457.0H709.5V457.8H710.5V457.7H711.5V458.0H712.5V457.9H713.5V457.5H714.5V457.0H715.5V457.7H716.5V457.5H717.5V457.5H718.5V458.5H719.5V457.9H720.5V457.4H721.5V457.5H722.5V457.2H723.5V457.5H724.5V457.9H725.5V457.9H726.5V457.8H727.5V458.0H728.5V458.0H729.5V458.3H730.5V458.0H731.5V457.5H732.5V458.3H733.5V458.0H734.5V458.4H735.5V458.1H736.5V457.4H737.5V458.0H738.5V458.1H739.5V457.3H740.5V458.2H741.5V457.4H742.5V457.7H743.5V457.6H744.5V457.1H745.5V457.8H746.5V457.7H747.5V457.9H748.5V458.3H749.5V457.0H750.5V458.1H751.5V457.7H752.5V458.2H753.5V457.8H754.5V457.8H755.5V457.2H756.5V458.4H757.5V457.5H758.5V458.2H759.5V458.2H760.5V458.0H761.5V458.6H762.5V458.5H763.5V457.6H764.5V457.5H765.5V458.3H766.5V458.1H767.5V457.9H768.5V456.8H769.5V457.7H770.5V457.5H771.5V457.9H772.5V458.4H773.5V457.9H774.5V457.9H775.5V457.7H776.5V457.9H777.5V458.0H778.5V458.0H779.5V457.0H780.5V458.0H781.5V457.7H782.5V457.5H783.5V457.9H784.5V458.2H785.5V458.3H786.5V457.5H787.5V458.0H788.5V457.4H789.5V457.6H790.5V458.2H791.5V457.9H792.5V457.4H793.5V457.7H794.5V457.5H795.5V456.9H796.5V457.9H797.5V457.5H798.5V457.4H799.5V457.6H800.5V457.6H801.5V457.8H802.5V458.1H803.5V458.4H804.5V457.9H805.5V457.3H806.5V457.2H807.5V458.2H808.5V458.5H809.5V458.1H810.5V457.1H811.5V457.6H812.5V458.5H813.5V458.3H814.5V457.9H815.5V457.9H816.5V458.4H817.5V457.5H818.5V458.6H819.5V457.9H820.5V457.9H821.5V458.0H822.5V458.3H823.5V458.0H824.5V457.7H825.5V457.5H826.5V457.6H827.5V457.6H828.5V457.5H829.5V457.6H830.5V457.5H831.5V458.0H832.5V457.1H833.5V457.9H834.5V457.9H835.5V457.3H836.5V457.2H837.5V457.9H838.5V457.8H839.5V458.2H840.5V458.4H841.5V457.7H842.5V458.2H843.5V457.3H844.5V458.3H845.5V458.1H846.5V457.8H847.5V458.1H848.5V457.9H849.5V458.1H850.5V457.2H851.5V457.9H852.5V458.6H853.5V458.8H854.5V458.2H855.5V457.9H856.5V458.2H857.5V458.3H858.5V457.6H859.5V457.4H860.5V457.9H861.5V457.5H862.5V458.2H863.5V458.6H864.5V458.2H865.5V458.0H866.5V458.5H867.5V457.5H868.5V458.0H869.5V457.4H870.5V458.7H871.5V458.3H872.5V458.5H873.5V458.0H874.5V458.5H875.5V458.1H876.5V457.5H877.5V457.5H878.5V457.2H879.5V457.8H880.5V457.7H881.5V457.7H882.5V458.1H883.5V458.2H884.5V458.3H885.5V457.6H886.5V457.3H887.5V457.6H888.5V458.6H889.5V457.6H890.5V458.3H891.5V457.9H892.5V457.8H893.5V457.8H894.5V457.7H895.5V458.3H896.5V457.8H897.5V457.5H898.5V457.9H899.5V458.2H900.5V457.9H901.5V458.5H902.5V457.3H903.5V457.6H904.5V457.6H905.5V457.1H906.5V457.2H907.5V457.9H908.5V457.7H909.5V457.6H910.5V458.4H911.5V457.5H912.5V457.7H913.5V457.5H914.5V457.5H915.5V458.3H916.5V457.4H917.5V457.8H918.5V458.6H919.5V458.3H920.5V457.9H921.5V457.7H922.5V458.4H923.5V457.1H924.5V457.0H925.5V457.6H926.5V458.3H927.5V458.2H928.5V457.9H929.5V458.2H930.5V457.4H931.5V457.3H932.5V457.9H933.5V458.4H934.5V457.5H935.5V458.3H936.5V457.7H937.5V456.7H938.5V458.2H939.5V458.4H940.5V457.9H941.5V457.1H942.5V457.8H943.5V457.9H944.5V457.0H945.5V457.6H946.5V457.4H947.5V457.5H948.5V458.1H949.5V457.4H950.5V457.6H951.5V457.8H952.5V458.2H953.5V456.6H954.5V457.8H955.5V457.9H956.5V457.5H957.5V457.8H958.5V457.5H959.5V457.7H960.5V457.6H961.5V458.4H962.5V457.7H963.5V458.4H964.5V458.4H965.5V458.0H966.5V457.5H967.5V457.8H968.5V458.3H969.5V457.8H970.5V458.0H971.5V457.4H972.5V458.6H973.5V458.1H974.5V457.6H975.5V457.0H976.5V457.4H977.5V457.4H978.5V458.5H979.5V457.8H980.5V458.2H981.5V458.0H982.5V458.1H983V464.6V464.6H982.5V464.5H981.5V464.3H980.5V463.9H979.5V464.2H978.5V464.8H977.5V464.1H976.5V465.2H975.5V463.9H974.5V464.8H973.5V463.8H972.5V463.6H971.5V463.8H970.5V464.7H969.5V464.1H968.5V464.8H967.5V463.8H966.5V463.7H965.5V463.9H964.5V464.0H963.5V463.9H962.5V464.0H961.5V463.9H960.5V463.8H959.5V463.5H958.5V465.3H957.5V463.5H956.5V464.0H955.5V464.1H954.5V464.1H953.5V463.9H952.5V463.8H951.5V464.2H950.5V463.9H949.5V464.6H948.5V464.4H947.5V464.2H946.5V464.1H945.5V464.0H944.5V464.2H943.5V464.6H942.5V464.0H941.5V463.7H940.5V464.0H939.5V464.3H938.5V464.0H937.5V464.1H936.5V463.7H935.5V464.4H934.5V464.0H933.5V464.3H932.5V464.0H931.5V464.2H930.5V464.1H929.5V463.9H928.5V464.1H927.5V464.2H926.5V464.7H925.5V464.1H924.5V463.9H923.5V464.4H922.5V464.7H921.5V463.5H920.5V464.2H919.5V463.4H918.5V464.5H917.5V464.5H916.5V463.4H915.5V463.6H914.5V464.3H913.5V464.8H912.5V464.5H911.5V463.8H910.5V464.8H909.5V463.4H908.5V464.5H907.5V464.1H906.5V463.9H905.5V464.4H904.5V464.7H903.5V463.9H902.5V464.1H901.5V463.9H900.5V464.8H899.5V463.7H898.5V464.2H897.5V464.7H896.5V464.8H895.5V464.1H894.5V464.2H893.5V463.9H892.5V463.5H891.5V464.7H890.5V464.2H889.5V463.8H888.5V463.5H887.5V464.3H886.5V464.1H885.5V464.3H884.5V464.5H883.5V464.7H882.5V464.6H881.5V464.1H880.5V464.1H879.5V463.7H878.5V464.8H877.5V463.7H876.5V465.0H875.5V464.5H874.5V465.4H873.5V464.6H872.5V464.7H871.5V464.3H870.5V464.6H869.5V464.3H868.5V464.0H867.5V464.2H866.5V464.6H865.5V465.3H864.5V464.3H863.5V464.1H862.5V464.1H861.5V465.1H860.5V465.0H859.5V464.4H858.5V464.4H857.5V464.6H856.5V464.2H855.5V464.5H854.5V464.3H853.5V464.4H852.5V463.8H851.5V464.3H850.5V464.3H849.5V464.3H848.5V464.6H847.5V464.5H846.5V464.4H845.5V464.3H844.5V464.2H843.5V463.8H842.5V464.3H841.5V463.9H840.5V463.7H839.5V464.2H838.5V463.6H837.5V463.5H836.5V464.1H835.5V463.5H834.5V463.9H833.5V465.4H832.5V464.1H831.5V463.7H830.5V464.2H829.5V464.6H828.5V465.2H827.5V464.1H826.5V463.9H825.5V464.0H824.5V463.8H823.5V463.4H822.5V463.9H821.5V463.8H820.5V463.4H819.5V464.1H818.5V464.1H817.5V463.8H816.5V464.1H815.5V464.4H814.5V463.9H813.5V464.6H812.5V463.6H811.5V464.3H810.5V464.5H809.5V463.9H808.5V464.1H807.5V464.6H806.5V464.8H805.5V463.8H804.5V464.7H803.5V463.6H802.5V463.9H801.5V463.5H800.5V464.9H799.5V464.1H798.5V464.3H797.5V464.5H796.5V464.0H795.5V464.1H794.5V463.6H793.5V464.1H792.5V464.2H791.5V464.2H790.5V464.2H789.5V464.4H788.5V464.6H787.5V463.9H786.5V464.2H785.5V464.5H784.5V463.7H783.5V465.0H782.5V463.9H781.5V464.3H780.5V464.1H779.5V464.9H778.5V463.8H777.5V465.4H776.5V464.7H775.5V463.9H774.5V464.1H773.5V463.9H772.5V464.0H771.5V464.3H770.5V464.2H769.5V465.1H768.5V464.0H767.5V463.7H766.5V463.7H765.5V464.6H764.5V464.4H763.5V463.5H762.5V464.8H761.5V464.2H760.5V463.9H759.5V464.2H758.5V463.9H757.5V464.0H756.5V464.0H755.5V464.2H754.5V464.2H753.5V465.4H752.5V463.9H751.5V464.3H750.5V463.7H749.5V464.1H748.5V463.8H747.5V463.8H746.5V463.7H745.5V463.4H744.5V463.7H743.5V463.9H742.5V464.0H741.5V464.3H740.5V464.2H739.5V464.9H738.5V464.1H737.5V464.1H736.5V464.8H735.5V463.9H734.5V464.5H733.5V464.2H732.5V464.2H731.5V464.1H730.5V464.1H729.5V463.7H728.5V463.9H727.5V464.3H726.5V463.7H725.5V465.1H724.5V464.5H723.5V464.2H722.5V463.8H721.5V464.0H720.5V464.4H719.5V464.1H718.5V464.2H717.5V464.5H716.5V463.4H715.5V463.6H714.5V464.5H713.5V464.1H712.5V463.6H711.5V463.4H710.5V465.2H709.5V464.3H708.5V464.3H707.5V464.2H706.5V464.2H705.5V465.2H704.5V464.2H703.5V464.7H702.5V464.0H701.5V464.2H700.5V463.9H699.5V464.3H698.5V464.7H697.5V464.2H696.5V464.4H695.5V463.8H694.5V464.2H693.5V464.1H692.5V464.4H691.5V463.8H690.5V463.6H689.5V465.1H688.5V464.9H687.5V465.0H686.5V464.6H685.5V464.5H684.5V464.6H683.5V465.1H682.5V464.6H681.5V464.1H680.5V464.5H679.5V463.9H678.5V463.9H677.5V464.8H676.5V464.2H675.5V464.1H674.5V463.9H673.5V464.1H672.5V464.4H671.5V464.1H670.5V464.2H669.5V464.5H668.5V463.9H667.5V464.2H666.5V464.4H665.5V463.9H664.5V464.7H663.5V464.0H662.5V464.4H661.5V464.2H660.5V464.2H659.5V463.9H658.5V464.4H657.5V464.4H656.5V464.2H655.5V464.4H654.5V463.8H653.5V464.0H652.5V464.9H651.5V464.9H650.5V464.3H649.5V464.4H648.5V464.3H647.5V463.9H646.5V464.6H645.5V464.5H644.5V464.4H643.5V464.6H642.5V464.4H641.5V464.3H640.5V464.5H639.5V463.9H638.5V464.4H637.5V463.7H636.5V464.0H635.5V464.5H634.5V463.5H633.5V463.6H632.5V464.5H631.5V464.1H630.5V464.0H629.5V464.0H628.5V464.4H627.5V464.7H626.5V463.7H625.5V464.2H624.5V464.4H623.5V465.0H622.5V464.2H621.5V465.1H620.5V464.3H619.5V464.3H618.5V464.3H617.5V464.4H616.5V464.4H615.5V464.9H614.5V464.5H613.5V464.3H612.5V464.4H611.5V464.4H610.5V464.6H609.5V463.9H608.5V465.0H607.5V464.3H606.5V464.3H605.5V464.2H604.5V464.7H603.5V463.8H602.5V463.7H601.5V464.2H600.5V464.4H599.5V464.0H598.5V464.5H597.5V464.2H596.5V464.6H595.5V464.5H594.5V464.2H593.5V464.1H592.5V464.3H591.5V464.8H590.5V464.8H589.5V464.1H588.5V464.6H587.5V463.5H586.5V464.0H585.5V463.5H584.5V464.3H583.5V464.3H582.5V464.0H581.5V464.1H580.5V464.0H579.5V464.2H578.5V463.7H577.5V463.8H576.5V464.1H575.5V464.2H574.5V463.8H573.5V464.0H572.5V465.0H571.5V463.5H570.5V464.2H569.5V464.5H568.5V464.1H567.5V464.1H566.5V464.5H565.5V464.6H564.5V464.3H563.5V464.3H562.5V464.0H561.5V464.2H560.5V464.4H559.5V464.1H558.5V464.0H557.5V464.0H556.5V464.3H555.5V464.3H554.5V463.8H553.5V464.0H552.5V464.1H551.5V463.6H550.5V464.0H549.5V465.0H548.5V463.7H547.5V463.8H546.5V463.9H545.5V464.4H544.5V464.0H543.5V464.2H542.5V465.1H541.5V464.4H540.5V464.3H539.5V464.3H538.5V464.4H537.5V464.2H536.5V464.5H535.5V463.9H534.5V464.0H533.5Z" fill="#B060C0" shape-rendering="crispEdges"/><path d="M533.5 458.6H534.5V458.5H535.5V458.4H536.5V458.9H537.5V458.2H538.5V459.0H539.5V458.6H540.5V458.9H541.5V458.2H542.5V458.3H543.5V458.6H544.5V458.4H545.5V459.0H546.5V458.7H547.5V458.9H548.5V458.9H549.5V458.5H550.5V458.3H551.5V458.6H552.5V458.5H553.5V458.5H554.5V458.9H555.5V458.9H556.5V458.5H557.5V459.0H558.5V458.4H559.5V458.7H560.5V458.5H561.5V458.4H562.5V458.4H563.5V458.6H564.5V458.8H565.5V458.5H566.5V458.8H567.5V458.8H568.5V458.4H569.5V458.7H570.5V458.5H571.5V458.4H572.5V458.8H573.5V458.8H574.5V458.6H575.5V458.6H576.5V458.6H577.5V458.5H578.5V458.2H579.5V458.4H580.5V458.6H581.5V458.3H582.5V458.7H583.5V458.9H584.5V458.8H585.5V458.4H586.5V458.8H587.5V458.4H588.5V459.0H589.5V458.6H590.5V458.1H591.5V459.0H592.5V459.0H593.5V458.8H594.5V458.5H595.5V458.9H596.5V458.3H597.5V458.3H598.5V458.8H599.5V458.6H600.5V458.5H601.5V458.2H602.5V458.8H603.5V458.7H604.5V458.4H605.5V458.5H606.5V459.1H607.5V459.1H608.5V458.5H609.5V458.5H610.5V458.5H611.5V458.9H612.5V458.5H613.5V458.6H614.5V458.7H615.5V459.0H616.5V458.5H617.5V459.1H618.5V458.9H619.5V459.0H620.5V458.5H621.5V458.7H622.5V458.9H623.5V458.6H624.5V459.2H625.5V458.7H626.5V458.6H627.5V458.7H628.5V458.4H629.5V458.8H630.5V459.0H631.5V458.4H632.5V458.4H633.5V458.9H634.5V459.0H635.5V458.9H636.5V458.6H637.5V458.8H638.5V458.7H639.5V458.4H640.5V458.7H641.5V458.5H642.5V458.4H643.5V458.5H644.5V458.5H645.5V458.9H646.5V458.5H647.5V458.5H648.5V458.4H649.5V458.3H650.5V459.1H651.5V458.8H652.5V458.8H653.5V458.5H654.5V458.9H655.5V458.5H656.5V458.7H657.5V458.9H658.5V458.6H659.5V458.8H660.5V458.7H661.5V458.4H662.5V458.5H663.5V458.8H664.5V459.1H665.5V458.3H666.5V458.8H667.5V458.6H668.5V458.7H669.5V458.9H670.5V458.9H671.5V459.0H672.5V458.6H673.5V458.9H674.5V458.5H675.5V458.6H676.5V458.8H677.5V458.4H678.5V458.4H679.5V458.9H680.5V459.1H681.5V458.2H682.5V458.3H683.5V458.5H684.5V458.8H685.5V458.8H686.5V458.8H687.5V458.9H688.5V459.1H689.5V458.4H690.5V458.6H691.5V458.4H692.5V458.5H693.5V458.5H694.5V458.9H695.5V459.1H696.5V458.4H697.5V458.9H698.5V458.6H699.5V458.7H700.5V459.1H701.5V459.1H702.5V459.1H703.5V459.1H704.5V458.7H705.5V459.1H706.5V459.1H707.5V458.4H708.5V458.5H709.5V458.9H710.5V458.1H711.5V458.5H712.5V458.8H713.5V458.9H714.5V458.2H715.5V458.2H716.5V458.2H717.5V458.5H718.5V458.8H719.5V458.6H720.5V458.1H721.5V458.4H722.5V458.5H723.5V458.3H724.5V458.5H725.5V458.4H726.5V458.2H727.5V458.9H728.5V458.5H729.5V458.8H730.5V458.5H731.5V458.6H732.5V458.9H733.5V458.5H734.5V458.8H735.5V458.6H736.5V458.6H737.5V458.8H738.5V458.5H739.5V458.6H740.5V458.8H741.5V458.6H742.5V458.3H743.5V458.0H744.5V458.3H745.5V458.7H746.5V458.2H747.5V458.7H748.5V458.8H749.5V458.6H750.5V458.6H751.5V458.8H752.5V458.7H753.5V458.9H754.5V458.6H755.5V458.2H756.5V458.8H757.5V458.6H758.5V458.6H759.5V459.0H760.5V458.5H761.5V459.0H762.5V458.9H763.5V458.6H764.5V458.7H765.5V458.8H766.5V458.5H767.5V458.9H768.5V458.3H769.5V458.5H770.5V458.3H771.5V458.9H772.5V459.1H773.5V458.4H774.5V458.8H775.5V458.7H776.5V458.5H777.5V458.7H778.5V458.7H779.5V458.5H780.5V459.0H781.5V458.9H782.5V458.3H783.5V458.5H784.5V458.6H785.5V458.9H786.5V458.4H787.5V458.9H788.5V458.5H789.5V458.2H790.5V458.8H791.5V458.4H792.5V458.0H793.5V458.7H794.5V458.6H795.5V458.2H796.5V458.4H797.5V458.7H798.5V458.3H799.5V458.2H800.5V458.6H801.5V458.4H802.5V458.5H803.5V458.8H804.5V458.8H805.5V458.1H806.5V458.2H807.5V458.7H808.5V458.9H809.5V458.6H810.5V458.6H811.5V458.7H812.5V459.0H813.5V459.0H814.5V458.5H815.5V458.3H816.5V458.9H817.5V458.3H818.5V459.0H819.5V458.6H820.5V458.6H821.5V458.7H822.5V458.7H823.5V458.7H824.5V458.4H825.5V458.3H826.5V458.1H827.5V458.8H828.5V458.5H829.5V458.1H830.5V458.6H831.5V458.6H832.5V458.6H833.5V458.7H834.5V458.6H835.5V458.1H836.5V458.3H837.5V458.8H838.5V458.9H839.5V458.7H840.5V459.0H841.5V458.4H842.5V458.8H843.5V458.4H844.5V458.8H845.5V458.9H846.5V458.7H847.5V458.9H848.5V458.5H849.5V458.9H850.5V458.8H851.5V458.5H852.5V459.0H853.5V459.1H854.5V458.6H855.5V458.6H856.5V459.1H857.5V459.0H858.5V458.6H859.5V458.6H860.5V459.1H861.5V458.7H862.5V458.6H863.5V459.2H864.5V459.1H865.5V458.7H866.5V459.0H867.5V458.9H868.5V458.6H869.5V458.5H870.5V459.1H871.5V458.8H872.5V459.2H873.5V458.7H874.5V459.0H875.5V459.0H876.5V458.5H877.5V458.6H878.5V458.5H879.5V458.8H880.5V458.4H881.5V458.5H882.5V458.5H883.5V458.6H884.5V458.9H885.5V458.4H886.5V458.2H887.5V458.2H888.5V459.0H889.5V458.7H890.5V458.9H891.5V458.7H892.5V458.5H893.5V458.2H894.5V458.3H895.5V458.8H896.5V458.2H897.5V458.2H898.5V458.6H899.5V458.6H900.5V458.7H901.5V458.9H902.5V458.7H903.5V458.3H904.5V458.1H905.5V458.3H906.5V458.1H907.5V458.5H908.5V458.6H909.5V458.6H910.5V458.8H911.5V458.3H912.5V458.2H913.5V458.2H914.5V458.9H915.5V458.7H916.5V458.2H917.5V458.9H918.5V459.0H919.5V458.8H920.5V458.3H921.5V458.6H922.5V458.9H923.5V458.1H924.5V458.1H925.5V458.2H926.5V458.7H927.5V458.6H928.5V458.5H929.5V459.0H930.5V458.5H931.5V458.4H932.5V458.3H933.5V458.9H934.5V458.6H935.5V458.9H936.5V458.6H937.5V458.3H938.5V459.0H939.5V458.8H940.5V458.7H941.5V458.5H942.5V458.3H943.5V458.8H944.5V458.1H945.5V458.7H946.5V458.7H947.5V458.1H948.5V458.7H949.5V458.4H950.5V458.4H951.5V458.7H952.5V458.7H953.5V458.3H954.5V458.5H955.5V458.6H956.5V458.5H957.5V458.3H958.5V458.5H959.5V458.9H960.5V458.6H961.5V458.7H962.5V458.4H963.5V458.9H964.5V458.9H965.5V458.5H966.5V458.3H967.5V458.7H968.5V458.9H969.5V458.7H970.5V458.8H971.5V458.4H972.5V459.0H973.5V459.1H974.5V459.1H975.5V459.0H976.5V458.6H977.5V458.4H978.5V459.0H979.5V458.7H980.5V459.1H981.5V459.1H982.5V458.7H983V463.7V463.7H982.5V463.4H981.5V463.7H980.5V463.3H979.5V463.3H978.5V463.3H977.5V463.3H976.5V464.0H975.5V463.2H974.5V463.6H973.5V463.1H972.5V463.1H971.5V463.2H970.5V463.5H969.5V463.6H968.5V463.7H967.5V463.2H966.5V463.0H965.5V463.4H964.5V463.2H963.5V463.3H962.5V463.2H961.5V463.5H960.5V463.2H959.5V463.2H958.5V463.6H957.5V463.1H956.5V463.1H955.5V463.7H954.5V463.7H953.5V463.3H952.5V463.2H951.5V463.5H950.5V463.2H949.5V463.6H948.5V463.1H947.5V463.2H946.5V463.5H945.5V463.3H944.5V463.6H943.5V463.5H942.5V463.6H941.5V463.2H940.5V463.4H939.5V463.6H938.5V463.6H937.5V463.3H936.5V463.0H935.5V463.4H934.5V463.4H933.5V463.4H932.5V463.6H931.5V463.7H930.5V463.6H929.5V463.1H928.5V463.4H927.5V463.4H926.5V463.8H925.5V463.3H924.5V463.0H923.5V463.0H922.5V463.6H921.5V463.1H920.5V463.2H919.5V463.0H918.5V463.7H917.5V463.4H916.5V463.0H915.5V463.1H914.5V463.5H913.5V463.7H912.5V463.6H911.5V463.1H910.5V463.8H909.5V463.0H908.5V463.2H907.5V463.3H906.5V462.9H905.5V463.4H904.5V463.5H903.5V463.3H902.5V463.7H901.5V463.0H900.5V462.8H899.5V462.9H898.5V463.3H897.5V463.6H896.5V463.7H895.5V463.4H894.5V463.6H893.5V463.6H892.5V463.1H891.5V463.7H890.5V463.4H889.5V463.2H888.5V463.1H887.5V463.5H886.5V463.5H885.5V463.0H884.5V463.6H883.5V463.7H882.5V463.8H881.5V463.5H880.5V463.6H879.5V463.2H878.5V463.9H877.5V463.2H876.5V463.9H875.5V463.3H874.5V463.9H873.5V463.7H872.5V463.9H871.5V463.7H870.5V464.0H869.5V463.2H868.5V463.2H867.5V463.8H866.5V463.8H865.5V464.0H864.5V463.9H863.5V463.8H862.5V463.5H861.5V464.0H860.5V463.8H859.5V463.3H858.5V463.9H857.5V463.4H856.5V463.5H855.5V464.0H854.5V463.8H853.5V463.6H852.5V463.4H851.5V463.6H850.5V463.3H849.5V463.7H848.5V463.7H847.5V463.7H846.5V464.0H845.5V463.4H844.5V463.8H843.5V463.2H842.5V463.2H841.5V463.1H840.5V463.2H839.5V463.6H838.5V463.0H837.5V463.2H836.5V463.5H835.5V462.9H834.5V463.5H833.5V463.3H832.5V463.4H831.5V463.1H830.5V463.7H829.5V463.3H828.5V463.5H827.5V463.5H826.5V463.4H825.5V463.6H824.5V463.4H823.5V463.0H822.5V463.3H821.5V463.1H820.5V463.0H819.5V463.5H818.5V463.5H817.5V463.5H816.5V463.6H815.5V463.7H814.5V463.1H813.5V463.4H812.5V463.2H811.5V463.8H810.5V463.5H809.5V463.4H808.5V463.5H807.5V463.2H806.5V463.6H805.5V463.2H804.5V463.4H803.5V463.1H802.5V463.0H801.5V463.1H800.5V463.5H799.5V463.1H798.5V463.3H797.5V463.5H796.5V462.9H795.5V463.0H794.5V463.0H793.5V463.3H792.5V463.6H791.5V463.4H790.5V463.7H789.5V463.6H788.5V463.7H787.5V463.5H786.5V463.7H785.5V463.7H784.5V463.2H783.5V463.7H782.5V463.3H781.5V463.2H780.5V463.6H779.5V463.9H778.5V463.4H777.5V463.9H776.5V464.0H775.5V463.4H774.5V463.6H773.5V463.3H772.5V463.2H771.5V463.3H770.5V463.1H769.5V463.8H768.5V463.3H767.5V463.3H766.5V463.1H765.5V463.4H764.5V463.5H763.5V463.1H762.5V463.7H761.5V463.1H760.5V463.4H759.5V463.6H758.5V463.3H757.5V463.2H756.5V463.6H755.5V463.2H754.5V463.3H753.5V463.5H752.5V463.4H751.5V463.1H750.5V463.4H749.5V463.3H748.5V463.3H747.5V463.3H746.5V463.0H745.5V462.8H744.5V463.2H743.5V463.4H742.5V463.0H741.5V463.6H740.5V463.5H739.5V463.5H738.5V463.7H737.5V463.5H736.5V463.7H735.5V463.5H734.5V463.4H733.5V463.2H732.5V463.5H731.5V463.4H730.5V463.3H729.5V463.3H728.5V463.2H727.5V463.7H726.5V462.9H725.5V463.3H724.5V463.0H723.5V463.4H722.5V463.1H721.5V463.4H720.5V463.7H719.5V463.2H718.5V463.2H717.5V463.7H716.5V463.0H715.5V463.1H714.5V463.0H713.5V463.2H712.5V463.0H711.5V463.0H710.5V463.8H709.5V463.1H708.5V463.7H707.5V463.3H706.5V463.4H705.5V463.3H704.5V463.6H703.5V463.5H702.5V463.5H701.5V463.8H700.5V463.5H699.5V463.6H698.5V463.7H697.5V463.1H696.5V463.5H695.5V463.3H694.5V463.8H693.5V463.3H692.5V463.3H691.5V463.3H690.5V463.2H689.5V463.4H688.5V463.9H687.5V463.9H686.5V463.9H685.5V463.4H684.5V463.2H683.5V463.6H682.5V463.8H681.5V463.1H680.5V463.4H679.5V463.4H678.5V463.5H677.5V463.6H676.5V463.8H675.5V463.7H674.5V463.4H673.5V463.3H672.5V463.7H671.5V463.7H670.5V463.6H669.5V463.8H668.5V463.3H667.5V463.4H666.5V463.6H665.5V463.2H664.5V463.8H663.5V463.2H662.5V463.5H661.5V463.7H660.5V463.8H659.5V463.5H658.5V463.5H657.5V463.7H656.5V463.7H655.5V463.8H654.5V463.3H653.5V463.4H652.5V463.6H651.5V463.7H650.5V463.3H649.5V463.8H648.5V463.7H647.5V463.1H646.5V463.6H645.5V463.9H644.5V463.5H643.5V463.2H642.5V463.7H641.5V463.6H640.5V463.3H639.5V463.3H638.5V463.4H637.5V463.1H636.5V463.3H635.5V463.6H634.5V463.1H633.5V463.3H632.5V463.7H631.5V463.1H630.5V463.3H629.5V463.3H628.5V463.8H627.5V463.9H626.5V463.3H625.5V463.5H624.5V463.4H623.5V463.4H622.5V463.7H621.5V463.7H620.5V463.3H619.5V463.8H618.5V463.8H617.5V463.5H616.5V463.8H615.5V463.9H614.5V463.9H613.5V463.8H612.5V463.7H611.5V463.6H610.5V463.3H609.5V463.3H608.5V463.8H607.5V463.7H606.5V463.9H605.5V463.4H604.5V463.1H603.5V463.2H602.5V463.3H601.5V463.4H600.5V463.5H599.5V463.5H598.5V463.4H597.5V463.3H596.5V463.7H595.5V463.3H594.5V463.8H593.5V463.5H592.5V463.6H591.5V463.7H590.5V463.6H589.5V463.2H588.5V463.6H587.5V463.1H586.5V463.3H585.5V463.0H584.5V463.6H583.5V463.7H582.5V463.3H581.5V463.6H580.5V463.2H579.5V463.2H578.5V463.2H577.5V463.4H576.5V463.7H575.5V463.3H574.5V463.1H573.5V463.6H572.5V463.4H571.5V463.1H570.5V463.1H569.5V463.0H568.5V463.0H567.5V463.8H566.5V463.6H565.5V463.8H564.5V463.5H563.5V463.7H562.5V463.4H561.5V463.7H560.5V463.4H559.5V463.3H558.5V463.3H557.5V463.6H556.5V463.4H555.5V463.7H554.5V463.4H553.5V463.3H552.5V463.5H551.5V463.0H550.5V463.3H549.5V463.7H548.5V463.1H547.5V463.4H546.5V463.2H545.5V463.5H544.5V463.4H543.5V463.6H542.5V463.5H541.5V463.7H540.5V463.3H539.5V463.7H538.5V463.5H537.5V463.8H536.5V463.8H535.5V463.3H534.5V463.4H533.5Z" fill="#E27DF0" shape-rendering="crispEdges"/><path d="M445.5 377.0H446.5V376.9H447.5V376.8H448.5V376.2H449.5V376.4H450.5V377.4H451.5V377.2H452.5V377.5H453.5V377.2H454.5V376.8H455.5V377.5H456.5V375.8H457.5V377.5H458.5V376.8H459.5V377.2H460.5V377.1H461.5V377.2H462.5V377.3H463.5V377.1H464.5V376.4H465.5V377.3H466.5V377.1H467.5V377.0H468.5V376.8H469.5V377.2H470.5V377.1H471.5V377.4H472.5V377.4H473.5V377.6H474.5V377.6H475.5V377.3H476.5V377.5H477.5V377.2H478.5V377.3H479.5V377.1H480.5V377.2H481.5V377.4H482.5V377.1H483.5V376.5H484.5V376.9H485.5V376.6H486.5V376.7H487.5V376.6H488.5V376.6H489.5V376.3H490.5V376.4H491.5V377.2H492.5V376.5H493.5V376.8H494.5V376.6H495.5V376.9H496.5V377.0H497.5V376.6H498.5V377.0H499.5V377.4H500.5V376.6H501.5V377.6H502.5V377.0H503.5V377.5H504.5V377.0H505.5V377.2H506.5V377.2H507.5V377.3H508.5V377.8H509.5V377.0H510.5V377.2H511.5V377.1H512.5V376.8H513.5V377.6H514.5V377.4H515.5V377.2H516.5V377.0H517.5V376.8H518.5V375.9H519.5V376.8H520.5V376.7H521.5V377.1H522.5V375.7H523.5V377.0H524.5V376.8H525.5V376.3H526.5V376.2H527.5V377.1H528.5V376.3H529.5V376.2H530.5V376.9H531.5V376.6H532.5V377.2H533.5V383.3V383.3H532.5V383.9H531.5V383.5H530.5V382.5H529.5V382.7H528.5V382.7H527.5V383.9H526.5V383.1H525.5V383.0H524.5V383.9H523.5V383.6H522.5V383.7H521.5V382.9H520.5V383.6H519.5V383.2H518.5V383.2H517.5V382.7H516.5V382.8H515.5V383.9H514.5V383.1H513.5V384.0H512.5V383.5H511.5V384.0H510.5V383.5H509.5V383.6H508.5V383.9H507.5V383.1H506.5V384.0H505.5V383.5H504.5V383.3H503.5V383.2H502.5V382.9H501.5V384.0H500.5V383.0H499.5V382.6H498.5V382.9H497.5V383.4H496.5V383.3H495.5V383.4H494.5V383.5H493.5V383.6H492.5V382.8H491.5V382.5H490.5V382.9H489.5V382.4H488.5V382.6H487.5V382.5H486.5V382.7H485.5V383.3H484.5V384.1H483.5V383.5H482.5V383.1H481.5V383.8H480.5V382.9H479.5V383.3H478.5V383.5H477.5V383.8H476.5V383.8H475.5V383.8H474.5V383.0H473.5V383.4H472.5V383.6H471.5V383.3H470.5V382.9H469.5V383.4H468.5V383.5H467.5V383.1H466.5V383.3H465.5V383.4H464.5V384.0H463.5V383.6H462.5V383.5H461.5V383.6H460.5V383.6H459.5V383.3H458.5V383.1H457.5V383.3H456.5V383.6H455.5V383.2H454.5V383.3H453.5V383.3H452.5V383.6H451.5V382.7H450.5V382.9H449.5V382.9H448.5V382.6H447.5V383.3H446.5V382.7H445.5Z" fill="#B060C0" shape-rendering="crispEdges"/><path d="M445.5 377.6H446.5V377.3H447.5V377.5H448.5V377.4H449.5V377.4H450.5V377.9H451.5V377.8H452.5V378.0H453.5V377.7H454.5V377.6H455.5V378.0H456.5V377.6H457.5V377.9H458.5V378.1H459.5V377.8H460.5V377.7H461.5V378.2H462.5V378.1H463.5V377.7H464.5V377.4H465.5V377.8H466.5V377.8H467.5V377.9H468.5V377.7H469.5V377.7H470.5V377.8H471.5V377.8H472.5V377.8H473.5V378.0H474.5V378.0H475.5V377.9H476.5V378.0H477.5V378.0H478.5V377.9H479.5V378.0H480.5V377.7H481.5V377.8H482.5V378.0H483.5V377.6H484.5V377.5H485.5V377.2H486.5V377.6H487.5V377.2H488.5V378.0H489.5V377.6H490.5V377.6H491.5V377.6H492.5V377.8H493.5V378.0H494.5V377.5H495.5V377.8H496.5V377.9H497.5V377.7H498.5V377.5H499.5V378.1H500.5V377.7H501.5V378.0H502.5V377.8H503.5V378.1H504.5V378.0H505.5V378.0H506.5V378.0H507.5V377.9H508.5V378.2H509.5V377.6H510.5V377.5H511.5V377.7H512.5V377.7H513.5V378.0H514.5V378.0H515.5V378.0H516.5V377.5H517.5V377.7H518.5V377.6H519.5V378.0H520.5V378.0H521.5V377.6H522.5V377.4H523.5V377.5H524.5V377.6H525.5V377.8H526.5V377.6H527.5V377.7H528.5V377.2H529.5V377.6H530.5V377.5H531.5V377.3H532.5V377.8H533.5V382.3V382.3H532.5V382.7H531.5V382.3H530.5V382.0H529.5V382.1H528.5V382.2H527.5V382.3H526.5V382.5H525.5V382.5H524.5V382.5H523.5V382.8H522.5V382.7H521.5V382.4H520.5V382.1H519.5V382.5H518.5V382.5H517.5V382.2H516.5V382.3H515.5V382.8H514.5V382.5H513.5V382.8H512.5V382.7H511.5V382.7H510.5V383.0H509.5V382.8H508.5V383.0H507.5V382.5H506.5V382.4H505.5V383.0H504.5V382.5H503.5V382.6H502.5V382.5H501.5V382.7H500.5V382.1H499.5V382.1H498.5V382.1H497.5V382.9H496.5V382.5H495.5V382.4H494.5V382.6H493.5V382.2H492.5V382.2H491.5V382.2H490.5V382.3H489.5V382.0H488.5V382.3H487.5V382.0H486.5V382.0H485.5V382.6H484.5V382.7H483.5V382.5H482.5V382.4H481.5V382.6H480.5V382.3H479.5V382.2H478.5V382.3H477.5V382.8H476.5V382.3H475.5V383.1H474.5V382.2H473.5V382.5H472.5V383.0H471.5V382.8H470.5V382.4H469.5V382.7H468.5V382.2H467.5V382.6H466.5V382.4H465.5V382.4H464.5V382.9H463.5V382.7H462.5V382.8H461.5V382.9H460.5V382.6H459.5V382.5H458.5V382.5H457.5V382.7H456.5V383.0H455.5V382.5H454.5V382.3H453.5V382.6H452.5V382.6H451.5V382.3H450.5V382.6H449.5V382.5H448.5V382.2H447.5V382.8H446.5V382.1H445.5Z" fill="#E27DF0" shape-rendering="crispEdges"/><path d="M445.7 158 V263" stroke="#8C8C00" stroke-width="1"/><path d="M533.7 119 V302" stroke="#8C9A00" stroke-width="1"/><rect x="445" y="380" width="1" height="81" fill="#C070D0" shape-rendering="crispEdges"/><rect x="533" y="358" width="1" height="136" fill="#A855B8" shape-rendering="crispEdges"/><rect x="534" y="361" width="1" height="120" fill="#A855B8" shape-rendering="crispEdges"/><rect x="127" y="132" width="1" height="147.5" fill="#B0A800" shape-rendering="crispEdges"/><rect x="127" y="132" width="1" height="5" fill="#18A010" shape-rendering="crispEdges"/><rect x="127" y="278.5" width="1" height="7" fill="#18A010" shape-rendering="crispEdges"/><rect x="127" y="360" width="1" height="117.5" fill="#B860C8" shape-rendering="crispEdges"/><rect x="263" y="108.5" width="1" height="12" fill="#B8B000" shape-rendering="crispEdges"/><rect x="262" y="120.5" width="2" height="188.5" fill="#B8B000" shape-rendering="crispEdges"/><rect x="263" y="108.5" width="1" height="5" fill="#18A010" shape-rendering="crispEdges"/><rect x="263" y="304" width="1" height="11" fill="#18A010" shape-rendering="crispEdges"/><rect x="262" y="354.5" width="2" height="140.5" fill="#D872E6" shape-rendering="crispEdges"/><rect x="398" y="116" width="1" height="193.5" fill="#B0A800" shape-rendering="crispEdges"/><rect x="398" y="116" width="1" height="5" fill="#18A010" shape-rendering="crispEdges"/><rect x="398" y="308.5" width="1" height="7" fill="#18A010" shape-rendering="crispEdges"/><rect x="398" y="341" width="1" height="152" fill="#B860C8" shape-rendering="crispEdges"/><rect x="669" y="116" width="1" height="12" fill="#B8B000" shape-rendering="crispEdges"/><rect x="668" y="128" width="2" height="179.5" fill="#B8B000" shape-rendering="crispEdges"/><rect x="669" y="116" width="1" height="5" fill="#18A010" shape-rendering="crispEdges"/><rect x="669" y="302.5" width="1" height="11" fill="#18A010" shape-rendering="crispEdges"/><rect x="669" y="348" width="1" height="147" fill="#B860C8" shape-rendering="crispEdges"/><rect x="804" y="132" width="1" height="147" fill="#B0A800" shape-rendering="crispEdges"/><rect x="804" y="132" width="1" height="5" fill="#18A010" shape-rendering="crispEdges"/><rect x="804" y="278" width="1" height="7" fill="#18A010" shape-rendering="crispEdges"/><rect x="804" y="367" width="1" height="107.5" fill="#B860C8" shape-rendering="crispEdges"/><rect x="940" y="108.5" width="1" height="12" fill="#B8B000" shape-rendering="crispEdges"/><rect x="939" y="120.5" width="2" height="188.5" fill="#B8B000" shape-rendering="crispEdges"/><rect x="940" y="108.5" width="1" height="5" fill="#18A010" shape-rendering="crispEdges"/><rect x="940" y="304" width="1" height="11" fill="#18A010" shape-rendering="crispEdges"/><rect x="939" y="349" width="2" height="144.5" fill="#D872E6" shape-rendering="crispEdges"/><path d="M104 263.5 H983" stroke="#F58A0A" stroke-width="1" shape-rendering="crispEdges"/><path d="M83 163.5 H966" stroke="#F58A0A" stroke-width="1" stroke-dasharray="13 3" shape-rendering="crispEdges"/><path d="M407.5 124 V604" stroke="#F58A0A" stroke-width="1" shape-rendering="crispEdges"/><path d="M477.5 108 V590" stroke="#F58A0A" stroke-width="1" stroke-dasharray="13 3" shape-rendering="crispEdges"/><rect x="402.5" y="258.5" width="10" height="10" shape-rendering="crispEdges" fill="none" stroke="#F58A0A" stroke-width="1"/><rect x="472.5" y="158.5" width="10" height="10" shape-rendering="crispEdges" fill="none" stroke="#F58A0A" stroke-width="1"/><text x="401" y="123" font-family="Liberation Sans, sans-serif" font-size="15" fill="#F58A0A">Ax</text><text x="471" y="602" font-family="Liberation Sans, sans-serif" font-size="15" fill="#F58A0A">Bx</text><text x="85" y="270.5" font-family="Liberation Sans, sans-serif" font-size="15" fill="#F58A0A">A<tspan font-variant="small-caps" font-size="19" dx="0.3">y</tspan></text><text x="964.5" y="170.5" font-family="Liberation Sans, sans-serif" font-size="15" fill="#F58A0A">B<tspan font-variant="small-caps" font-size="19" dx="0">y</tspan></text><text x="972" y="599" font-family="Liberation Sans, sans-serif" font-size="15" fill="#30FF10">2</text><path d="M528.5 108.5 H538.5 L533.5 113.5 Z" fill="#F58A0A"/><path d="M528.5 604 H538.5 L533.5 599 Z" fill="#F58A0A"/><path d="M987 187.5 l5.5 -5 v10 z" fill="#FFFF00"/><path d="M992 187.5 H997.5" stroke="#FFFF00" stroke-width="1.2"/><text x="1004.5" y="190" font-family="Liberation Sans, sans-serif" font-weight="bold" font-size="12.5" fill="#FFFF00">T</text><path d="M987 419.5 l5.5 -5 v10 z" fill="#E27DF0"/><path d="M992 419.5 H996.7 V428 M993 428.3 H1000 M994.3 430.5 H998.8 M995.3 432.6 H997.8" stroke="#E27DF0" stroke-width="1.1" fill="none"/><text x="1000.7" y="426" font-family="Liberation Sans, sans-serif" font-weight="bold" font-size="12" letter-spacing="-0.4" fill="#E27DF0">f1</text><g clip-path="url(#cb)"><path d="M987 599.5 l5.5 -5 v10 z" fill="#FFFFE0"/><path d="M992 599.5 H996.7 V606" stroke="#E8FF40" stroke-width="1.2" fill="none"/><text x="999" y="606" font-family="Liberation Sans, sans-serif" font-weight="bold" font-size="12.5" fill="#FFFF00">1</text><text x="998.3" y="606" font-family="Liberation Sans, sans-serif" font-weight="bold" font-size="12.5" fill="#40FF10">2</text></g></svg>
<div class="a" style="left:1016px;top:103px;width:2.5px;height:507px;background:#fff;"></div>
<div class="a" style="left:77.5px;top:609px;width:941px;height:1px;background:#fff;"></div>
<div class="a" style="left:77.3px;top:102.5px;width:2.2px;height:507px;background:#fff;"></div>
<div class="a" style="left:79.8px;top:611.7px;width:15px;height:18px;box-sizing:border-box;background:#ECE9D8;border:1px solid;border-color:#ACA899 #fff #fff #ACA899;"></div>
<svg style="left:79.8px;top:611.7px;" width="15" height="18" viewBox="0 0 15 18"><path d="M7.5 15.3 V3.8" fill="none" stroke="#000" stroke-width="1.1"/><path d="M7.5 2.9 L10.2 6.6 H4.8 Z" fill="#000"/></svg>
<div class="a" style="left:526px;top:611.7px;width:15px;height:18px;box-sizing:border-box;background:#FF8C00;border:1px solid;border-color:#ACA899 #fff #fff #ACA899;"></div>
<svg style="left:526px;top:611.7px;" width="15" height="18" viewBox="0 0 15 18"><path d="M7.5 15.3 V3.8" fill="none" stroke="#000" stroke-width="1.1"/><path d="M7.5 2.9 L10.2 6.6 H4.8 Z" fill="#000"/></svg>
<div class="a" style="left:976px;top:611.7px;width:15px;height:18px;box-sizing:border-box;background:#F8F8F0;border:1px solid;border-color:#ACA899 #fff #fff #ACA899;"></div>
<svg style="left:976px;top:611.7px;" width="15" height="18" viewBox="0 0 15 18"><path d="M7.5 15.3 V3.8" fill="none" stroke="#000" stroke-width="1.1"/><path d="M7.5 2.9 L10.2 6.6 H4.8 Z" fill="#000"/></svg>
<div class="btn" style="left:103px;top:613px;width:27px;height:14px;"></div>
<div class="btn" style="left:103px;top:628px;width:27px;height:13.7px;"></div>
<svg style="left:103px;top:613px;" width="27" height="29" viewBox="0 0 27 29"><path d="M10 6.2 l3.5 -3 l3.5 3 M10 9.6 l3.5 -3 l3.5 3" fill="none" stroke="#a8a69a" stroke-width="1"/><path d="M10 18 l3.5 3 l3.5 -3 M10 21.4 l3.5 3 l3.5 -3" fill="none" stroke="#333" stroke-width="1"/></svg>
<div class="btnp" style="left:139px;top:613px;width:26.5px;height:28.5px;"></div>
<div class="btn" style="left:166.3px;top:613px;width:26.5px;height:28.5px;"></div>
<div class="btn" style="left:193.7px;top:613px;width:26.2px;height:28.5px;"></div>
<div class="btn" style="left:220.5px;top:613px;width:26.5px;height:28.5px;"></div>
<div class="btn" style="left:256px;top:613px;width:26.8px;height:28.3px;"></div>
<svg style="left:0;top:0;" width="1024" height="768" viewBox="0 0 1024 768"><path d="M149.7536 620.1999999999999 H156.0464 L160.5 624.6536 V630.9463999999999 L156.0464 635.4 H149.7536 L145.3 630.9463999999999 V624.6536 Z" fill="#00B0B0" stroke="#000" stroke-width="1"/><path d="M175.6708 619.1 H182.1292 L186.70000000000002 623.6708 V630.1292 L182.1292 634.6999999999999 H175.6708 L171.1 630.1292 V623.6708 Z" fill="#FF0000" stroke="#000" stroke-width="1"/><rect x="196.4" y="618.2" width="19.2" height="17.4" rx="1.6" fill="#fff" stroke="#000" stroke-width="1.1"/><path d="M215 625.9 V635 H205.9 Z" fill="#808080"/><path d="M205.6 635.2 L215.2 625.6" stroke="#000" stroke-width="0.9"/><path d="M198.3 624.8 C199.5 622,204 620.8,207.6 625.3" fill="none" stroke="#000" stroke-width="1.1"/><path d="M210.9 623.2 V627.7 H206.1 Z" fill="#000"/><path d="M223.2 625.2 L232.5 630.6 L241.6 625 L241.8 629.8 L232.5 636 L223.3 629.8 Z" fill="#181818"/><path d="M223.2 625.2 L232.5 630.6 V633 L223.2 627.8 Z" fill="#909090"/><path d="M232.5 630.6 L241.6 625 V627.6 L232.5 633 Z" fill="#707070"/><path d="M223.4 629.2 L232.5 634.5 L241.7 629" fill="none" stroke="#8a8a8a" stroke-width="0.6"/><path d="M223.2 625.1 L233.6 620.2 L241.5 624.85 L232.5 630.6 Z" fill="#B4B4B4"/><path d="M224.5 626.2 L231.4 629.6" stroke="#fff" stroke-width="1.3"/><path d="M231.9 622.4 L235.2 619.4 L239 620.2 L235.7 624.8 Z" fill="#fff" stroke="#ddd" stroke-width="0.4"/><path d="M236.3 625.1 Q237.3 621.9 239.3 621.5 H241.7" fill="none" stroke="#000" stroke-width="1"/><rect x="227.8" y="624.8" width="2.2" height="1.2" fill="#10D020"/><rect x="230" y="625.9" width="2" height="1.2" fill="#F01010"/><circle cx="268.5" cy="626.8" r="4.3" fill="#FFFF00" stroke="#000" stroke-width="1"/><path d="M268.5 617 V620.5 M268.5 633 V636.5 M258.7 626.8 H262.2 M274.8 626.8 H278.3 M261.6 619.9 L264.1 622.4 M272.9 631.2 L275.4 633.7 M261.6 633.7 L264.1 631.2 M272.9 622.4 L275.4 619.9" stroke="#000" stroke-width="1"/></svg>
<div class="btn" style="left:350.9px;top:613.2px;width:26.8px;height:28.7px;"></div>
<div class="a" style="left:354.9px;top:617.1px;width:18.3px;height:19.8px;background:#000;"></div>
<div class="t" style="left:354.9px;width:18.3px;text-align:center;top:616.0px;color:#fff;font-family:'Liberation Sans',sans-serif;font-size:20px;-webkit-text-stroke:0.35px #fff;">H</div>
<div class="btn" style="left:824px;top:613.2px;width:26.4px;height:28.7px;"></div>
<div class="a" style="left:827.9px;top:617.1px;width:18.2px;height:19.8px;background:#000;"></div>
<div class="t" style="left:827.9px;width:18.2px;text-align:center;top:616.0px;color:#FFFF00;font-family:'Liberation Sans',sans-serif;font-size:20px;-webkit-text-stroke:0.35px #FFFF00;">T</div>
<div class="a" style="left:378px;top:612px;width:101.4px;height:32.4px;background:#fff;"></div>
<div class="a" style="left:378px;top:612px;width:100.2px;height:31.2px;background:#ACA899;"></div>
<div class="a" style="left:379px;top:613px;width:99.2px;height:30.2px;background:#716F64;"></div>
<div class="a" style="left:380px;top:614px;width:98px;height:29px;background:#000;"></div>
<div class="t" style="left:384.50px;top:618.10px;font-family:'DejaVu Sans Condensed','Liberation Sans',sans-serif;font-size:16.5px;font-weight:normal;letter-spacing:-0.057px;color:#fff;">10.0 ms/</div>
<div class="a" style="left:545px;top:612px;width:151.1px;height:32.4px;background:#fff;"></div>
<div class="a" style="left:545px;top:612px;width:149.89999999999998px;height:31.2px;background:#ACA899;"></div>
<div class="a" style="left:546px;top:613px;width:148.89999999999998px;height:30.2px;background:#716F64;"></div>
<div class="a" style="left:547px;top:614px;width:147.7px;height:29px;background:#000;"></div>
<div class="t" style="left:550.50px;top:618.00px;font-family:'DejaVu Sans Condensed','Liberation Sans',sans-serif;font-size:16.5px;font-weight:normal;letter-spacing:0.0px;color:#fff;">0.0 s</div>
<div class="a" style="left:850.6px;top:612px;width:88.7px;height:32.4px;background:#fff;"></div>
<div class="a" style="left:850.6px;top:612px;width:87.5px;height:31.2px;background:#ACA899;"></div>
<div class="a" style="left:851.6px;top:613px;width:86.5px;height:30.2px;background:#716F64;"></div>
<div class="a" style="left:852.6px;top:614px;width:85.3px;height:29px;background:#000;"></div>
<div class="t" style="left:857.50px;top:618.00px;font-family:'DejaVu Sans Condensed','Liberation Sans',sans-serif;font-size:16.5px;font-weight:normal;letter-spacing:-0.167px;color:#FFFF00;">1.328 V</div>
<div class="btn" style="left:480.4px;top:612.3px;width:20.4px;height:31.5px;"></div>
<div class="btn" style="left:500.9px;top:612.3px;width:21.1px;height:31.5px;"></div>
<svg style="left:480px;top:612px;" width="42" height="32" viewBox="0 0 42 32"><path d="M7.1 16.8 C7 9.5,10.3 9.3,10.75 15.9 C11.2 22.8,14 22.8,13.9 15.2" fill="none" stroke="#000" stroke-width="1.2"/><path d="M25.4 16.8 C26 10.5,29.5 9.5,31.4 15.9 C33.3 22.3,36.8 21.5,37.6 15.2" fill="none" stroke="#000" stroke-width="1.2"/></svg>
<div class="btn" style="left:696.5px;top:612.3px;width:20.3px;height:31px;"></div>
<div class="btn" style="left:717.4px;top:612.3px;width:20.3px;height:31px;"></div>
<div class="btn" style="left:738.3px;top:612.3px;width:20.3px;height:31px;"></div>
<svg style="left:696px;top:612px;" width="64" height="32" viewBox="0 0 64 32"><path d="M7.3 15.5 l6 -5.7 v11.4 z M55.3 15.5 l-6 -5.7 v11.4 z" fill="#000"/></svg>
<div class="t" style="left:717.4px;width:20.3px;text-align:center;top:620.3px;font-weight:bold;font-size:14px;">0</div>
<div class="btn" style="left:940.5px;top:612.7px;width:27.3px;height:15px;"></div>
<div class="btn" style="left:940.5px;top:628.2px;width:27.3px;height:15.3px;"></div>
<svg style="left:940px;top:612px;" width="28" height="32" viewBox="0 0 28 32"><path d="M8.3 11.6 h11.4 l-5.7 -5.6 z M8.3 20.5 h11.4 l-5.7 5.6 z" fill="#000"/></svg>
<div class="a" style="left:82.5px;top:648.8px;width:65.8px;height:24.4px;box-sizing:border-box;background:#303030;border:2px solid #F58A0A;border-bottom:none;box-shadow:-1px -1px 0 #fff,1px 0 0 #716F64;"></div>
<div class="t" style="left:86.50px;top:653.90px;font-family:'DejaVu Sans Condensed','Liberation Sans',sans-serif;font-size:16.7px;font-weight:normal;letter-spacing:-0.533px;color:#fff;">Markers</div>
<div class="a" style="left:150.5px;top:649.5px;width:51.5px;height:23.5px;box-sizing:border-box;background:#ECE9D8;border:1px solid;border-color:#fff #716F64 transparent #fff;box-shadow:inset -1px 0 0 #ACA899;"></div>
<div class="t" style="left:155.25px;top:653.90px;font-family:'DejaVu Sans Condensed','Liberation Sans',sans-serif;font-size:16.7px;font-weight:normal;letter-spacing:-0.062px;color:#000;">Logic</div>
<div class="a" style="left:203px;top:649.5px;width:54.5px;height:23.5px;box-sizing:border-box;background:#ECE9D8;border:1px solid;border-color:#fff #716F64 transparent #fff;box-shadow:inset -1px 0 0 #ACA899;"></div>
<div class="t" style="left:207.75px;top:653.90px;font-family:'DejaVu Sans Condensed','Liberation Sans',sans-serif;font-size:16.7px;font-weight:normal;letter-spacing:-0.9px;color:#000;">Scales</div>
<div class="btn" style="left:1000.7px;top:675px;width:18.2px;height:24px;"></div>
<div class="t" style="left:1001px;width:18px;text-align:center;top:680px;font-size:16.5px;">?</div>
<div class="t mono" style="left:455.33px;top:677.2px;color:#F58A0A;">X</div>
<div class="t mono" style="left:635.93px;top:677.2px;color:#F58A0A;">Y</div>
<div class="t mono" style="left:356.00px;top:695.2px;color:#F58A0A;">A&#9472;&#9472;&#9472;(<span style="color:#FFFF00">1</span>) = -14.016893 ms</div>
<div class="t mono" style="left:635.93px;top:695.2px;color:#F58A0A;">1.086 V</div>
<div class="t mono" style="left:356.00px;top:713.2px;color:#F58A0A;">B---(<span style="color:#FFFF00">1</span>) = -6.175641 ms</div>
<div class="t mono" style="left:635.93px;top:713.2px;color:#F58A0A;">1.406 V</div>
<div class="t mono" style="left:410.18px;top:731.2px;color:#F58A0A;"><b>&#916;</b> =  7.841252 ms</div>
<div class="t mono" style="left:635.93px;top:731.2px;color:#F58A0A;">320 mV</div>
<div class="t mono" style="left:383.09px;top:749.2px;color:#F58A0A;">1/<b>&#916;</b>X =  127.53066 Hz</div>
</div>
</body></html>
